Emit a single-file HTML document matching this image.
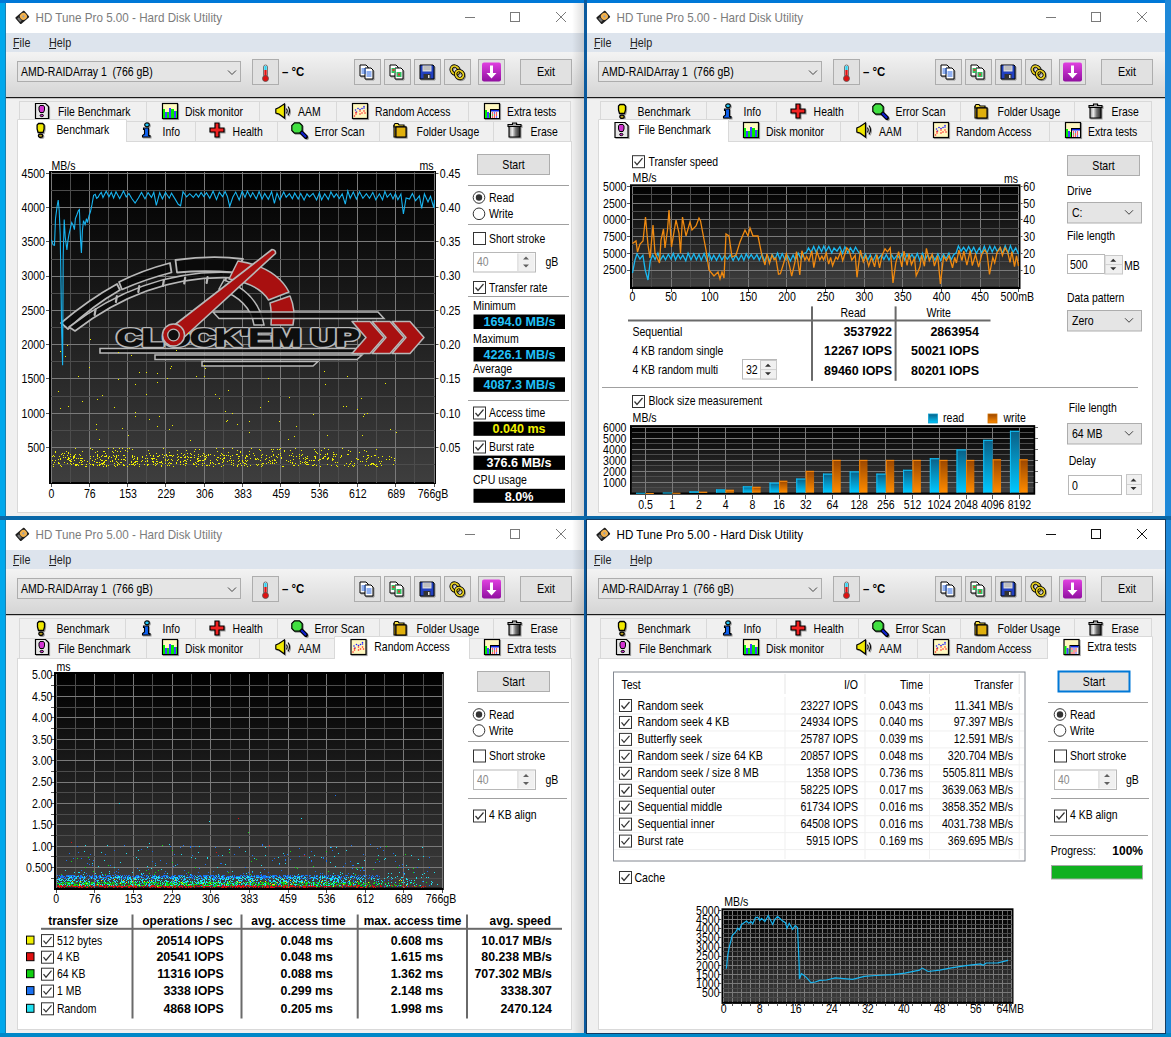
<!DOCTYPE html>
<html><head><meta charset="utf-8"><title>HD Tune Pro</title>
<style>html,body{margin:0;padding:0;background:#0a7cc8;overflow:hidden}svg{display:block}text{font-family:"Liberation Sans",sans-serif}</style>
</head><body>
<svg width="1171" height="1037" viewBox="0 0 1171 1037" font-family="Liberation Sans, sans-serif">
<defs><linearGradient id="tbg" x1="0" y1="0" x2="0" y2="1"><stop offset="0" stop-color="#f3f3f3"/><stop offset="1" stop-color="#d5d5d5"/></linearGradient><linearGradient id="shr" x1="0" x2="1"><stop offset="0" stop-color="#000" stop-opacity="0"/><stop offset="1" stop-color="#000" stop-opacity="0.13"/></linearGradient><filter id="sh" x="-20%" y="-20%" width="150%" height="150%"><feOffset dx="1" dy="1" in="SourceAlpha" result="o"/><feColorMatrix in="o" type="matrix" values="0 0 0 0 0  0 0 0 0 0  0 0 0 0 0  0 0 0 0.35 0" result="c"/><feMerge><feMergeNode in="c"/><feMergeNode in="SourceGraphic"/></feMerge></filter></defs><rect x="0" y="0" width="1171" height="1037" fill="#0a7cc8" /><rect x="0" y="0" width="6" height="1037" fill="#00a8ec" /><rect x="5" y="0" width="1" height="1037" fill="#1a80b0" /><rect x="0" y="0" width="1171" height="3" fill="#0078d7" /><rect x="1165" y="0" width="6" height="1037" fill="#1e88d8" /><rect x="1165" y="519" width="1" height="515" fill="#163e60" /><rect x="584" y="0" width="3" height="1037" fill="#0b5a9e" /><rect x="0" y="516" width="1171" height="4" fill="#0a68a8" /><rect x="0" y="1033" width="1171" height="4" fill="#0088c8" /><g transform="translate(6,3)"><rect x="0" y="0" width="578" height="513" fill="#f0f0f0" /><rect x="0" y="0" width="578" height="30" fill="#fff" /><g transform="translate(9,6.5)"><g transform="rotate(50 7.2 7.8)"><rect x="3" y="2" width="8.6" height="11.6" rx="0.8" fill="#1e1e1e"/><circle cx="7.3" cy="6.3" r="3.5" fill="#f2b04a"/><circle cx="7.3" cy="6.3" r="1.1" fill="#8ea0b8"/><rect x="5" y="10.3" width="4.5" height="2.2" fill="#777"/></g></g><text transform="translate(29.5,19) scale(0.972,1)" font-size="12" fill="#7c7c7c" xml:space="preserve" >HD Tune Pro 5.00 - Hard Disk Utility</text><rect x="459" y="14" width="10" height="1" fill="#7a7a7a" /><rect x="504.5" y="9.5" width="9" height="9" fill="none" stroke="#7a7a7a" stroke-width="1" /><path d="M550,9 L560,19 M560,9 L550,19" stroke="#7a7a7a" stroke-width="1"/><rect x="0" y="30" width="578" height="19" fill="#dde4ed" /><text transform="translate(7,44) scale(0.9,1)" font-size="12" fill="#222" xml:space="preserve" >File</text><rect x="7" y="45" width="6" height="1" fill="#222" /><text transform="translate(43,44) scale(0.9,1)" font-size="12" fill="#222" xml:space="preserve" >Help</text><rect x="43" y="45" width="7" height="1" fill="#222" /><rect x="0" y="49" width="578" height="45" fill="url(#tbg)" /><rect x="0" y="94" width="578" height="1.2" fill="#1a1a1a" /><rect x="11.5" y="58.5" width="223" height="20" fill="#e5e5e5" stroke="#adadad" stroke-width="1" /><text transform="translate(15,72.5) scale(0.876,1)" font-size="12" fill="#000" xml:space="preserve" >AMD-RAIDArray 1  (766 gB)</text><path d="M222,67.5 L226,71.5 L230,67.5" fill="none" stroke="#444" stroke-width="1"/><rect x="246.5" y="56.5" width="26" height="25" fill="#e1e1e1" stroke="#adadad" stroke-width="1" /><g transform="translate(252,61)"><rect x="5.5" y="1" width="4" height="12" rx="2" fill="#fff" stroke="#555" stroke-width="0.8"/><rect x="6.3" y="2" width="2.4" height="4" fill="#30d0f0"/><rect x="6.3" y="6" width="2.4" height="7" fill="#e01010"/><circle cx="7.5" cy="14.5" r="3" fill="#e01010" stroke="#555" stroke-width="0.8"/></g><text transform="translate(276,73) scale(0.95,1)" font-size="12" font-weight="bold" fill="#000" xml:space="preserve" >– °C</text><rect x="348.5" y="56.5" width="26" height="25" fill="#e1e1e1" stroke="#adadad" stroke-width="1" /><g transform="translate(353,61)"><g filter="url(#sh)"><path d="M1,1 H7 L9,3 V12 H1 Z" fill="#fff" stroke="#000" stroke-width="1"/><path d="M6,4 H12 L14,6 V15 H6 Z" fill="#fff" stroke="#000" stroke-width="1"/><path d="M2.5,5 H7 M2.5,7 H7 M2.5,9 H7 M7.5,8 H12.5 M7.5,10 H12.5 M7.5,12 H12.5" stroke="#2060e0" stroke-width="1"/></g></g><rect x="378.5" y="56.5" width="26" height="25" fill="#e1e1e1" stroke="#adadad" stroke-width="1" /><g transform="translate(383,61)"><g filter="url(#sh)"><path d="M1,1 H7 L9,3 V12 H1 Z" fill="#fff" stroke="#000" stroke-width="1"/><path d="M6,4 H12 L14,6 V15 H6 Z" fill="#fff" stroke="#000" stroke-width="1"/><rect x="2.5" y="4" width="4" height="5" fill="#30c060"/><rect x="3.5" y="5" width="2" height="2" fill="#e03030"/><rect x="7.5" y="8" width="5" height="5" fill="#30c060"/><rect x="9" y="9.5" width="2" height="2" fill="#e03030"/></g></g><rect x="408.5" y="56.5" width="26" height="25" fill="#e1e1e1" stroke="#adadad" stroke-width="1" /><g transform="translate(413,61)"><g filter="url(#sh)"><path d="M1,1 H14 L15,2 V15 H1 Z" fill="#2040c0" stroke="#000" stroke-width="1"/><rect x="3.5" y="1.5" width="9" height="6" fill="#d8d8d8"/><path d="M4.5,3 H11.5 M4.5,5 H11.5" stroke="#999" stroke-width="0.8"/><rect x="4.5" y="10" width="7" height="5" fill="#333"/><rect x="9" y="11" width="1.5" height="3" fill="#ddd"/></g></g><rect x="438.5" y="56.5" width="26" height="25" fill="#e1e1e1" stroke="#adadad" stroke-width="1" /><g transform="translate(443,61)"><g filter="url(#sh)"><ellipse cx="6" cy="6" rx="3.6" ry="4.2" transform="rotate(-40 6 6)" fill="none" stroke="#000" stroke-width="3.4"/><ellipse cx="6" cy="6" rx="3.6" ry="4.2" transform="rotate(-40 6 6)" fill="none" stroke="#e8d020" stroke-width="1.8"/><ellipse cx="10.5" cy="10.5" rx="3.6" ry="4.2" transform="rotate(-40 10.5 10.5)" fill="none" stroke="#000" stroke-width="3.4"/><ellipse cx="10.5" cy="10.5" rx="3.6" ry="4.2" transform="rotate(-40 10.5 10.5)" fill="none" stroke="#e8d020" stroke-width="1.8"/></g></g><rect x="472.5" y="56.5" width="26" height="25" fill="#e1e1e1" stroke="#adadad" stroke-width="1" /><g transform="translate(476,59.5)"><defs><linearGradient id="dng" x1="0" y1="0" x2="0" y2="1"><stop offset="0" stop-color="#e040e0"/><stop offset="1" stop-color="#9010a0"/></linearGradient></defs><rect x="0" y="0" width="19" height="19" rx="2" fill="url(#dng)"/><path d="M8,3 H11 V10.5 H14.5 L9.5,16 L4.5,10.5 H8 Z" fill="#fff"/></g><rect x="514.5" y="56.5" width="51" height="25" fill="#e1e1e1" stroke="#adadad" stroke-width="1" /><text transform="translate(540,73) scale(0.9,1)" font-size="12" text-anchor="middle" fill="#000" xml:space="preserve" >Exit</text><rect x="11.5" y="138.5" width="554" height="371" fill="#fff" stroke="#d9d9d9" stroke-width="1" /><rect x="13.5" y="98.5" width="127" height="20" fill="#f0f0f0" stroke="#d9d9d9" stroke-width="1" /><g transform="translate(29,100)"><g filter="url(#sh)"><path d="M0.5,0.5 H10.5 L13.5,3.5 V15.5 H0.5 Z" fill="#e6e6e6" stroke="#000" stroke-width="1.2"/><path d="M5,2.5 H8.5 L9.5,4 V7 L8.5,9.5 H5 L4,7 V4 Z" fill="#d030d0" stroke="#000" stroke-width="1"/><ellipse cx="6.8" cy="12.5" rx="1.7" ry="1.2" fill="#c030c0" stroke="#000" stroke-width="0.9"/></g></g><text transform="translate(52,113) scale(0.87,1)" font-size="12" fill="#000" xml:space="preserve" >File Benchmark</text><rect x="140.5" y="98.5" width="113" height="20" fill="#f0f0f0" stroke="#d9d9d9" stroke-width="1" /><g transform="translate(156,100)"><g filter="url(#sh)"><rect x="0.5" y="0.5" width="15" height="15" fill="#fffbc0" stroke="#000" stroke-width="1.2"/><path d="M1,6 H3 V15 H1 Z M5,9 H7 V15 H5 Z M9,6 H12 V15 H9 Z M14,8 H15 V15 H14Z" fill="#00ee00"/><path d="M3,9 H5 V15 H3 Z M7,5 H9 V15 H7 Z M12,8 H14 V15 H12 Z" fill="#4040ff"/></g></g><text transform="translate(179,113) scale(0.87,1)" font-size="12" fill="#000" xml:space="preserve" >Disk monitor</text><rect x="253.5" y="98.5" width="77" height="20" fill="#f0f0f0" stroke="#d9d9d9" stroke-width="1" /><g transform="translate(269,100)"><g filter="url(#sh)"><path d="M0.8,6 L4,4.5 L9.5,0.8 V15 L4,11 L0.8,10 Z" fill="#f0e800" stroke="#000" stroke-width="1.2"/><path d="M11.5,5.5 Q13,8 11.5,10.5 M13,3.5 Q16,8 13,12.5" fill="none" stroke="#000" stroke-width="1.1"/></g></g><text transform="translate(292,113) scale(0.87,1)" font-size="12" fill="#000" xml:space="preserve" >AAM</text><rect x="330.5" y="98.5" width="132" height="20" fill="#f0f0f0" stroke="#d9d9d9" stroke-width="1" /><g transform="translate(346,100)"><g filter="url(#sh)"><rect x="0.5" y="0.5" width="15" height="15" fill="#fff8c0" stroke="#000" stroke-width="1.2"/><circle cx="3.5" cy="7" r="0.8" fill="#2020ff"/><circle cx="6" cy="5.5" r="0.8" fill="#2020ff"/><circle cx="8" cy="6.5" r="0.8" fill="#2020ff"/><circle cx="10" cy="5.5" r="0.8" fill="#2020ff"/><circle cx="12" cy="3.5" r="0.8" fill="#2020ff"/><circle cx="12" cy="5" r="0.8" fill="#2020ff"/><circle cx="4.5" cy="9" r="0.8" fill="#2020ff"/><circle cx="4" cy="9.5" r="0.8" fill="#ff2020"/><circle cx="4" cy="11" r="0.8" fill="#ff2020"/><circle cx="2.5" cy="13" r="0.8" fill="#ff2020"/><circle cx="8" cy="8" r="0.8" fill="#ff2020"/><circle cx="8" cy="11" r="0.8" fill="#ff2020"/><circle cx="10" cy="10" r="0.8" fill="#ff2020"/><circle cx="12" cy="8" r="0.8" fill="#ff2020"/><circle cx="13" cy="10" r="0.8" fill="#ff2020"/></g></g><text transform="translate(369,113) scale(0.87,1)" font-size="12" fill="#000" xml:space="preserve" >Random Access</text><rect x="462.5" y="98.5" width="102" height="20" fill="#f0f0f0" stroke="#d9d9d9" stroke-width="1" /><g transform="translate(478,100)"><g filter="url(#sh)"><rect x="0.5" y="0.5" width="15" height="15" fill="#fff8c0" stroke="#000" stroke-width="1.2"/><path d="M1,7 H3 V15 H1 Z M5,10 H6 V15 H5 Z" fill="#00ee00"/><path d="M3,9 H5 V15 H3Z" fill="#4040ff"/><rect x="6.5" y="6.5" width="9" height="9" fill="#f4f4f4" stroke="#000" stroke-width="1"/><rect x="7" y="7" width="8" height="1.5" fill="#1020e0"/><circle cx="8.5" cy="10" r="0.7" fill="#f00"/><circle cx="10.5" cy="10" r="0.7" fill="#22f"/><circle cx="12.5" cy="10" r="0.7" fill="#f00"/><circle cx="8.5" cy="12" r="0.7" fill="#0a0"/><circle cx="10.5" cy="12" r="0.7" fill="#f00"/><circle cx="12.5" cy="12" r="0.7" fill="#f00"/><circle cx="8.5" cy="14" r="0.7" fill="#f00"/><circle cx="10.5" cy="14" r="0.7" fill="#f00"/><circle cx="12.5" cy="14" r="0.7" fill="#22f"/></g></g><text transform="translate(501,113) scale(0.87,1)" font-size="12" fill="#000" xml:space="preserve" >Extra tests</text><rect x="119.5" y="118.5" width="70" height="20" fill="#f0f0f0" stroke="#d9d9d9" stroke-width="1" /><g transform="translate(133,119)"><g filter="url(#sh)"><ellipse cx="8" cy="2.8" rx="2.3" ry="1.9" fill="#20c8f8" stroke="#000" stroke-width="1.1"/><path d="M4.5,6 H9.5 V13.5 H11 V15 H3.5 V13.5 L5.5,12 V7.5 H4.5 Z" fill="#1060f0" stroke="#000" stroke-width="1.1"/></g></g><text transform="translate(156.6,133) scale(0.87,1)" font-size="12" fill="#000" xml:space="preserve" >Info</text><rect x="189.5" y="118.5" width="82" height="20" fill="#f0f0f0" stroke="#d9d9d9" stroke-width="1" /><g transform="translate(203,119)"><g filter="url(#sh)"><path d="M6,1 H10 V6 H15 V10 H10 V15 H6 V10 H1 V6 H6 Z" fill="#f02020" stroke="#000" stroke-width="1.2"/></g></g><text transform="translate(226.6,133) scale(0.87,1)" font-size="12" fill="#000" xml:space="preserve" >Health</text><rect x="271.5" y="118.5" width="102" height="20" fill="#f0f0f0" stroke="#d9d9d9" stroke-width="1" /><g transform="translate(285,119)"><g filter="url(#sh)"><path d="M10,10 L15,15" stroke="#000" stroke-width="4" stroke-linecap="round"/><path d="M10,10 L14.5,14.5" stroke="#1020d0" stroke-width="2" stroke-linecap="round"/><path d="M3.5,0.8 H8.5 L11.2,3.5 V8.5 L8.5,11.2 H3.5 L0.8,8.5 V3.5 Z" fill="#40e040" stroke="#000" stroke-width="1.2"/></g></g><text transform="translate(308.6,133) scale(0.87,1)" font-size="12" fill="#000" xml:space="preserve" >Error Scan</text><rect x="373.5" y="118.5" width="114" height="20" fill="#f0f0f0" stroke="#d9d9d9" stroke-width="1" /><g transform="translate(387,119)"><g filter="url(#sh)"><path d="M1,3 L2,1.5 H5 L6,3 H11 V5 H1 Z" fill="#f8e040" stroke="#000" stroke-width="1.1"/><path d="M1,3 V15 H3 V5 H13 V15 H3" fill="#e8b800" stroke="#000" stroke-width="1.1"/><rect x="3" y="5" width="10" height="10" fill="#e0b010" stroke="#000" stroke-width="1.1"/></g></g><text transform="translate(410.6,133) scale(0.87,1)" font-size="12" fill="#000" xml:space="preserve" >Folder Usage</text><rect x="487.5" y="118.5" width="77" height="20" fill="#f0f0f0" stroke="#d9d9d9" stroke-width="1" /><g transform="translate(501,119)"><defs><linearGradient id="trg" x1="0" x2="1"><stop offset="0" stop-color="#888"/><stop offset="0.3" stop-color="#eee"/><stop offset="0.6" stop-color="#777"/><stop offset="1" stop-color="#222"/></linearGradient></defs><g filter="url(#sh)"><path d="M1,2.5 H5.5 V1 H9.5 V2.5 H14 V4.5 H1 Z" fill="#aaa" stroke="#000" stroke-width="1.1"/><path d="M2,4.5 H13 V15 H2 Z" fill="url(#trg)" stroke="#000" stroke-width="1.1"/></g></g><text transform="translate(524.6,133) scale(0.87,1)" font-size="12" fill="#000" xml:space="preserve" >Erase</text><rect x="11" y="116" width="110" height="23" fill="#fff" /><path d="M11.5,139 V116.5 H120.5 V139" fill="none" stroke="#d9d9d9" stroke-width="1"/><g transform="translate(26.6,119)"><g filter="url(#sh)"><path d="M6,1.5 H10 L11.5,3 V7 L10.5,10.5 H5.5 L4.5,7 V3 Z" fill="#f0e800" stroke="#000" stroke-width="1.3"/><ellipse cx="8" cy="13.8" rx="2.2" ry="1.6" fill="#b8a020" stroke="#000" stroke-width="1.2"/></g></g><text transform="translate(50.4,131) scale(0.87,1)" font-size="12" fill="#000" xml:space="preserve" >Benchmark</text><defs><linearGradient id="cbg" x1="0" y1="0" x2="0" y2="1"><stop offset="0" stop-color="#000"/><stop offset="1" stop-color="#3e3e3e"/></linearGradient></defs><rect x="43" y="168" width="387" height="313" fill="#000" /><rect x="45" y="170" width="384" height="309" fill="url(#cbg)" /><rect x="45" y="169" width="1" height="311" fill="#7a7a7a"/><rect x="64" y="169" width="1" height="311" fill="#4c4c4c"/><rect x="83" y="169" width="1" height="311" fill="#7a7a7a"/><rect x="102" y="169" width="1" height="311" fill="#4c4c4c"/><rect x="121" y="169" width="1" height="311" fill="#7a7a7a"/><rect x="140" y="169" width="1" height="311" fill="#4c4c4c"/><rect x="159" y="169" width="1" height="311" fill="#7a7a7a"/><rect x="179" y="169" width="1" height="311" fill="#4c4c4c"/><rect x="198" y="169" width="1" height="311" fill="#7a7a7a"/><rect x="217" y="169" width="1" height="311" fill="#4c4c4c"/><rect x="236" y="169" width="1" height="311" fill="#7a7a7a"/><rect x="255" y="169" width="1" height="311" fill="#4c4c4c"/><rect x="274" y="169" width="1" height="311" fill="#7a7a7a"/><rect x="293" y="169" width="1" height="311" fill="#4c4c4c"/><rect x="313" y="169" width="1" height="311" fill="#7a7a7a"/><rect x="332" y="169" width="1" height="311" fill="#4c4c4c"/><rect x="351" y="169" width="1" height="311" fill="#7a7a7a"/><rect x="370" y="169" width="1" height="311" fill="#4c4c4c"/><rect x="389" y="169" width="1" height="311" fill="#7a7a7a"/><rect x="408" y="169" width="1" height="311" fill="#4c4c4c"/><rect x="428" y="169" width="1" height="311" fill="#7a7a7a"/><rect x="45" y="170" width="384" height="1" fill="#7a7a7a"/><rect x="45" y="187" width="384" height="1" fill="#4c4c4c"/><rect x="45" y="204" width="384" height="1" fill="#7a7a7a"/><rect x="45" y="221" width="384" height="1" fill="#4c4c4c"/><rect x="45" y="238" width="384" height="1" fill="#7a7a7a"/><rect x="45" y="256" width="384" height="1" fill="#4c4c4c"/><rect x="45" y="273" width="384" height="1" fill="#7a7a7a"/><rect x="45" y="290" width="384" height="1" fill="#4c4c4c"/><rect x="45" y="307" width="384" height="1" fill="#7a7a7a"/><rect x="45" y="324" width="384" height="1" fill="#4c4c4c"/><rect x="45" y="341" width="384" height="1" fill="#7a7a7a"/><rect x="45" y="358" width="384" height="1" fill="#4c4c4c"/><rect x="45" y="375" width="384" height="1" fill="#7a7a7a"/><rect x="45" y="393" width="384" height="1" fill="#4c4c4c"/><rect x="45" y="410" width="384" height="1" fill="#7a7a7a"/><rect x="45" y="427" width="384" height="1" fill="#4c4c4c"/><rect x="45" y="444" width="384" height="1" fill="#7a7a7a"/><rect x="45" y="461" width="384" height="1" fill="#4c4c4c"/><g transform="translate(-6,-3)"><g><path d="M61,323 Q88,300 117,284 L120,290 Q92,306 68,329 Z" fill="rgba(8,8,8,0.82)" stroke="#b8b8b8" stroke-width="1.8" stroke-linejoin="round"/><path d="M119,282 Q143,270 170,263 L171.5,272.5 Q146,279 122,289.5 Z" fill="rgba(8,8,8,0.82)" stroke="#b8b8b8" stroke-width="1.8" stroke-linejoin="round"/><path d="M175.5,260 Q212,255 243,259 L234,272.5 Q205,270 177,272.5 Z" fill="rgba(8,8,8,0.82)" stroke="#b8b8b8" stroke-width="1.8" stroke-linejoin="round"/><path d="M69,327 Q150,266 239,273 L237,278 Q150,273 75,331 Z" fill="rgba(8,8,8,0.82)" stroke="#b8b8b8" stroke-width="1.6" stroke-linejoin="round"/><path d="M95.6,309 l-1,6" stroke="#b8b8b8" stroke-width="2.2" stroke-linecap="round"/><path d="M116.9,296 l-1,6" stroke="#b8b8b8" stroke-width="2.2" stroke-linecap="round"/><path d="M139.3,286 l-1,6" stroke="#b8b8b8" stroke-width="2.2" stroke-linecap="round"/><path d="M163.9,280 l-1,6" stroke="#b8b8b8" stroke-width="2.2" stroke-linecap="round"/><path d="M185.2,277.5 l-1,6" stroke="#b8b8b8" stroke-width="2.2" stroke-linecap="round"/><path d="M207.6,277 l-1,6" stroke="#b8b8b8" stroke-width="2.2" stroke-linecap="round"/><path d="M225.8,278 l-1,6" stroke="#b8b8b8" stroke-width="2.2" stroke-linecap="round"/><path d="M224,280 Q258,292 264,325 L254,325 Q250,300 219,289 Z" fill="rgba(8,8,8,0.82)" stroke="#b8b8b8" stroke-width="1.5"/><path d="M238,261 Q276,267 289,292 L268.5,300 Q259,284 229,279 Z" fill="#a81010" stroke="#b8b8b8" stroke-width="1.5" stroke-linejoin="round"/><path d="M270,303 L290,296 Q296,310 293,325 L271,325 Q272,313 270,303 Z" fill="#a81010" stroke="#b8b8b8" stroke-width="1.5" stroke-linejoin="round"/><path d="M213,312 H378 L384,318.5 H219 Z" fill="rgba(8,8,8,0.82)" stroke="#b8b8b8" stroke-width="1.5"/><text x="117" y="345.6" font-size="24" font-weight="bold" fill="#0e0e0e" stroke="#b8b8b8" stroke-width="4.2" stroke-linejoin="round" textLength="242" lengthAdjust="spacingAndGlyphs">CLOCK'EM UP</text><text x="117" y="345.6" font-size="24" font-weight="bold" fill="#0e0e0e" stroke="#0e0e0e" stroke-width="1.6" textLength="242" lengthAdjust="spacingAndGlyphs">CLOCK'EM UP</text><path d="M168,330 L272,249.5 Q276,250 275.5,253.5 L180,341 Z" fill="#a81010" stroke="#b8b8b8" stroke-width="1.6" stroke-linejoin="round"/><circle cx="173.5" cy="335" r="11" fill="#a81010" stroke="#b8b8b8" stroke-width="1.5"/><circle cx="173.5" cy="335" r="5.8" fill="#0e0e0e" stroke="#b8b8b8" stroke-width="1.3"/><path d="M100,348.5 H366 L361,353 H100 Z" fill="rgba(8,8,8,0.82)" stroke="#b8b8b8" stroke-width="1.6"/><path d="M155,355 H362 L357,359.5 H155 Z" fill="rgba(8,8,8,0.82)" stroke="#b8b8b8" stroke-width="1.5"/><path d="M202,361.5 H318 L313,366 H202 Z" fill="rgba(8,8,8,0.82)" stroke="#b8b8b8" stroke-width="1.5"/><path d="M352,321.5 H370 L384,337.5 L370,353.5 H352 L366,337.5 Z" fill="#a81010" stroke="#b8b8b8" stroke-width="1.5" stroke-linejoin="round"/><path d="M372,321.5 H390 L404,337.5 L390,353.5 H372 L386,337.5 Z" fill="#a81010" stroke="#b8b8b8" stroke-width="1.5" stroke-linejoin="round"/><path d="M392,321.5 H410 L424,337.5 L410,353.5 H392 L406,337.5 Z" fill="#a81010" stroke="#b8b8b8" stroke-width="1.5" stroke-linejoin="round"/></g></g><rect x="40" y="170" width="3" height="1" fill="#555" /><rect x="430" y="170" width="2.5" height="1" fill="#555" /><rect x="40" y="204" width="3" height="1" fill="#555" /><rect x="430" y="204" width="2.5" height="1" fill="#555" /><rect x="40" y="238" width="3" height="1" fill="#555" /><rect x="430" y="238" width="2.5" height="1" fill="#555" /><rect x="40" y="273" width="3" height="1" fill="#555" /><rect x="430" y="273" width="2.5" height="1" fill="#555" /><rect x="40" y="307" width="3" height="1" fill="#555" /><rect x="430" y="307" width="2.5" height="1" fill="#555" /><rect x="40" y="341" width="3" height="1" fill="#555" /><rect x="430" y="341" width="2.5" height="1" fill="#555" /><rect x="40" y="375" width="3" height="1" fill="#555" /><rect x="430" y="375" width="2.5" height="1" fill="#555" /><rect x="40" y="410" width="3" height="1" fill="#555" /><rect x="430" y="410" width="2.5" height="1" fill="#555" /><rect x="40" y="444" width="3" height="1" fill="#555" /><rect x="430" y="444" width="2.5" height="1" fill="#555" /><rect x="45" y="481" width="1" height="3" fill="#555" /><rect x="83" y="481" width="1" height="3" fill="#555" /><rect x="121" y="481" width="1" height="3" fill="#555" /><rect x="159" y="481" width="1" height="3" fill="#555" /><rect x="198" y="481" width="1" height="3" fill="#555" /><rect x="236" y="481" width="1" height="3" fill="#555" /><rect x="274" y="481" width="1" height="3" fill="#555" /><rect x="313" y="481" width="1" height="3" fill="#555" /><rect x="351" y="481" width="1" height="3" fill="#555" /><rect x="389" y="481" width="1" height="3" fill="#555" /><rect x="428" y="481" width="1" height="3" fill="#555" /><text transform="translate(39,174.7) scale(0.88,1)" font-size="12" text-anchor="end" fill="#000" xml:space="preserve" >4500</text><text transform="translate(433.8,174.7) scale(0.88,1)" font-size="12" fill="#000" xml:space="preserve" >0.45</text><text transform="translate(39,208.96) scale(0.88,1)" font-size="12" text-anchor="end" fill="#000" xml:space="preserve" >4000</text><text transform="translate(433.8,208.96) scale(0.88,1)" font-size="12" fill="#000" xml:space="preserve" >0.40</text><text transform="translate(39,243.22) scale(0.88,1)" font-size="12" text-anchor="end" fill="#000" xml:space="preserve" >3500</text><text transform="translate(433.8,243.22) scale(0.88,1)" font-size="12" fill="#000" xml:space="preserve" >0.35</text><text transform="translate(39,277.48) scale(0.88,1)" font-size="12" text-anchor="end" fill="#000" xml:space="preserve" >3000</text><text transform="translate(433.8,277.48) scale(0.88,1)" font-size="12" fill="#000" xml:space="preserve" >0.30</text><text transform="translate(39,311.74) scale(0.88,1)" font-size="12" text-anchor="end" fill="#000" xml:space="preserve" >2500</text><text transform="translate(433.8,311.74) scale(0.88,1)" font-size="12" fill="#000" xml:space="preserve" >0.25</text><text transform="translate(39,346.0) scale(0.88,1)" font-size="12" text-anchor="end" fill="#000" xml:space="preserve" >2000</text><text transform="translate(433.8,346.0) scale(0.88,1)" font-size="12" fill="#000" xml:space="preserve" >0.20</text><text transform="translate(39,380.26) scale(0.88,1)" font-size="12" text-anchor="end" fill="#000" xml:space="preserve" >1500</text><text transform="translate(433.8,380.26) scale(0.88,1)" font-size="12" fill="#000" xml:space="preserve" >0.15</text><text transform="translate(39,414.52) scale(0.88,1)" font-size="12" text-anchor="end" fill="#000" xml:space="preserve" >1000</text><text transform="translate(433.8,414.52) scale(0.88,1)" font-size="12" fill="#000" xml:space="preserve" >0.10</text><text transform="translate(39,448.78) scale(0.88,1)" font-size="12" text-anchor="end" fill="#000" xml:space="preserve" >500</text><text transform="translate(433.8,448.78) scale(0.88,1)" font-size="12" fill="#000" xml:space="preserve" >0.05</text><text transform="translate(45.5,495.2) scale(0.88,1)" font-size="12" text-anchor="middle" fill="#000" xml:space="preserve" >0</text><text transform="translate(83.8,495.2) scale(0.88,1)" font-size="12" text-anchor="middle" fill="#000" xml:space="preserve" >76</text><text transform="translate(122.1,495.2) scale(0.88,1)" font-size="12" text-anchor="middle" fill="#000" xml:space="preserve" >153</text><text transform="translate(160.4,495.2) scale(0.88,1)" font-size="12" text-anchor="middle" fill="#000" xml:space="preserve" >229</text><text transform="translate(198.7,495.2) scale(0.88,1)" font-size="12" text-anchor="middle" fill="#000" xml:space="preserve" >306</text><text transform="translate(237.0,495.2) scale(0.88,1)" font-size="12" text-anchor="middle" fill="#000" xml:space="preserve" >383</text><text transform="translate(275.3,495.2) scale(0.88,1)" font-size="12" text-anchor="middle" fill="#000" xml:space="preserve" >459</text><text transform="translate(313.6,495.2) scale(0.88,1)" font-size="12" text-anchor="middle" fill="#000" xml:space="preserve" >536</text><text transform="translate(351.9,495.2) scale(0.88,1)" font-size="12" text-anchor="middle" fill="#000" xml:space="preserve" >612</text><text transform="translate(390.2,495.2) scale(0.88,1)" font-size="12" text-anchor="middle" fill="#000" xml:space="preserve" >689</text><text transform="translate(427.0,495.2) scale(0.88,1)" font-size="12" text-anchor="middle" fill="#000" xml:space="preserve" >766gB</text><text transform="translate(45.5,166.5) scale(0.88,1)" font-size="12" fill="#000" xml:space="preserve" >MB/s</text><text transform="translate(427.5,166.5) scale(0.88,1)" font-size="12" text-anchor="end" fill="#000" xml:space="preserve" >ms</text><path d="M45.5,236.8 L47.1,241.9 L48.5,242.3 L49.5,215.6 L51.1,203.4 L52.2,197.0 L53.2,207.5 L54.2,231.8 L54.8,268.2 L55.6,324.9 L56.6,362.3 L57.2,254.0 L58.2,216.6 L59.2,233.8 L60.9,247.0 L61.9,237.9 L62.9,231.8 L64.3,225.7 L65.7,219.6 L67.3,222.7 L68.4,226.7 L69.4,215.6 L71.0,211.5 L72.4,207.5 L73.4,206.5 L74.6,237.9 L75.4,250.0 L76.4,227.7 L77.5,217.6 L79.1,221.7 L80.5,215.6 L81.5,219.6 L83.1,212.5 L84.5,208.5 L86.0,201.4 L87.6,192.3 L89.2,191.3 L90.6,195.3 L92.0,194.3 L93.7,191.3 L95.3,189.3 L97.0,194.6 L100.2,188.2 L103.0,193.7 L105.3,189.3 L107.6,195.0 L110.0,188.7 L113.7,195.5 L117.5,188.1 L120.2,194.0 L122.9,190.4 L126.0,195.7 L129.1,200.0 L132.4,195.0 L135.5,189.4 L139.0,195.9 L142.1,189.6 L145.5,194.5 L147.8,189.3 L150.3,202.3 L153.7,189.7 L156.4,195.9 L159.5,189.4 L163.3,195.2 L165.5,190.1 L169.3,196.4 L172.2,201.3 L174.6,202.8 L177.0,188.7 L180.6,193.8 L183.7,190.7 L187.3,194.5 L190.1,190.7 L192.5,194.1 L195.1,189.5 L197.7,193.5 L200.5,189.7 L203.8,195.3 L207.1,188.2 L210.5,196.6 L213.3,189.2 L216.6,193.7 L219.1,188.5 L221.4,193.5 L223.7,203.4 L226.9,194.0 L229.7,189.1 L233.2,197.0 L236.2,188.3 L239.0,194.4 L241.4,188.1 L244.5,194.0 L246.7,189.6 L250.3,195.9 L253.1,188.5 L256.1,196.2 L258.7,190.4 L262.3,196.3 L265.6,188.7 L268.4,200.4 L271.0,190.1 L273.9,196.8 L277.7,189.1 L280.2,194.2 L283.4,190.7 L286.4,195.8 L288.7,190.0 L292.2,196.1 L294.7,190.4 L298.1,196.9 L301.0,190.8 L303.5,193.9 L307.1,190.4 L310.6,196.9 L313.4,189.6 L315.6,196.9 L318.7,190.8 L322.3,196.4 L324.9,188.9 L328.0,194.4 L330.4,190.7 L333.3,195.5 L336.2,190.8 L339.3,201.2 L341.8,188.0 L344.2,195.2 L347.3,189.0 L350.4,196.2 L353.5,188.7 L356.9,195.3 L360.4,190.7 L363.5,195.3 L366.8,189.4 L369.8,196.8 L373.4,190.8 L376.5,196.8 L378.9,188.4 L381.2,194.3 L384.5,190.4 L387.0,196.0 L389.4,190.6 L391.9,196.8 L394.9,191.0 L397.4,211.0 L400.1,195.0 L403.5,196.1 L406.4,190.6 L409.6,197.8 L413.4,192.9 L415.7,205.4 L418.4,190.9 L422.0,198.9 L424.5,193.3 L427.8,204.9 L428.5,197.0" fill="none" stroke="#18b4f0" stroke-width="1.1"/><path d="M109 455.5h1M218 452.5h1M49 449.5h1M108 453.5h1M301 459.5h1M86 461.5h1M192 457.5h1M63 455.5h1M127 461.5h1M177 461.5h1M255 452.5h1M287 462.5h1M319 453.5h1M103 453.5h1M225 457.5h1M151 458.5h1M211 457.5h1M342 463.5h1M240 461.5h1M361 455.5h1M255 461.5h1M208 452.5h1M308 446.5h1M287 453.5h1M125 461.5h1M57 452.5h1M256 462.5h1M371 463.5h1M129 458.5h1M54 456.5h1M220 452.5h1M314 463.5h1M326 457.5h1M191 458.5h1M203 462.5h1M187 460.5h1M109 463.5h1M192 451.5h1M160 451.5h1M222 452.5h1M225 459.5h1M141 458.5h1M52 459.5h1M360 456.5h1M214 455.5h1M130 458.5h1M127 460.5h1M53 460.5h1M129 461.5h1M109 456.5h1M249 455.5h1M136 453.5h1M309 455.5h1M233 453.5h1M106 457.5h1M96 460.5h1M94 461.5h1M230 451.5h1M80 461.5h1M118 456.5h1M161 462.5h1M87 462.5h1M319 453.5h1M353 449.5h1M266 457.5h1M191 455.5h1M106 458.5h1M123 445.5h1M330 462.5h1M326 455.5h1M49 448.5h1M126 454.5h1M159 456.5h1M138 461.5h1M178 451.5h1M98 461.5h1M91 462.5h1M289 445.5h1M226 445.5h1M119 457.5h1M162 460.5h1M46 453.5h1M79 463.5h1M308 457.5h1M131 455.5h1M232 455.5h1M96 452.5h1M202 452.5h1M67 455.5h1M218 452.5h1M287 456.5h1M147 459.5h1M161 453.5h1M111 459.5h1M65 456.5h1M319 451.5h1M327 449.5h1M174 461.5h1M237 459.5h1M239 455.5h1M73 451.5h1M84 445.5h1M70 462.5h1M93 461.5h1M78 457.5h1M301 455.5h1M286 460.5h1M189 446.5h1M267 446.5h1M133 461.5h1M110 454.5h1M222 452.5h1M146 455.5h1M161 457.5h1M366 460.5h1M88 458.5h1M241 457.5h1M231 447.5h1M71 461.5h1M190 460.5h1M95 453.5h1M212 454.5h1M247 450.5h1M252 461.5h1M212 454.5h1M52 456.5h1M91 455.5h1M277 463.5h1M179 457.5h1M300 455.5h1M179 460.5h1M155 462.5h1M175 454.5h1M256 462.5h1M308 453.5h1M115 459.5h1M310 449.5h1M313 456.5h1M260 452.5h1M300 455.5h1M210 445.5h1M136 457.5h1M102 462.5h1M153 452.5h1M119 447.5h1M322 446.5h1M348 460.5h1M270 459.5h1M234 449.5h1M269 457.5h1M196 457.5h1M141 457.5h1M206 459.5h1M227 462.5h1M235 462.5h1M83 460.5h1M216 459.5h1M172 453.5h1M64 458.5h1M198 451.5h1M117 461.5h1M57 454.5h1M275 455.5h1M156 460.5h1M142 447.5h1M118 452.5h1M278 448.5h1M96 460.5h1M293 455.5h1M84 453.5h1M194 453.5h1M113 445.5h1M288 462.5h1M150 458.5h1M227 457.5h1M126 453.5h1M217 445.5h1M275 454.5h1M192 453.5h1M194 457.5h1M232 458.5h1M358 447.5h1M283 452.5h1M144 452.5h1M197 450.5h1M315 447.5h1M310 462.5h1M256 451.5h1M289 460.5h1M166 453.5h1M74 452.5h1M99 457.5h1M250 456.5h1M233 457.5h1M270 453.5h1M328 451.5h1M147 458.5h1M105 454.5h1M280 457.5h1M98 453.5h1M156 451.5h1M75 457.5h1M61 456.5h1M157 445.5h1M156 451.5h1M362 452.5h1M177 458.5h1M140 452.5h1M260 460.5h1M175 450.5h1M113 461.5h1M226 452.5h1M244 455.5h1M47 452.5h1M91 452.5h1M234 448.5h1M367 461.5h1M336 445.5h1M128 462.5h1M69 461.5h1M76 455.5h1M243 448.5h1M264 460.5h1M202 451.5h1M159 460.5h1M179 453.5h1M257 460.5h1M151 453.5h1M254 457.5h1M271 446.5h1M109 456.5h1M318 453.5h1M327 451.5h1M146 456.5h1M356 458.5h1M75 459.5h1M110 453.5h1M231 451.5h1M107 449.5h1M204 460.5h1M218 454.5h1M96 452.5h1M296 451.5h1M362 462.5h1M68 454.5h1M298 459.5h1M272 451.5h1M217 452.5h1M300 461.5h1M100 457.5h1M260 455.5h1M180 458.5h1M262 459.5h1M218 455.5h1M383 456.5h1M68 453.5h1M343 461.5h1M375 462.5h1M196 462.5h1M329 453.5h1M276 463.5h1M338 462.5h1M95 460.5h1M125 459.5h1M56 450.5h1M165 460.5h1M267 452.5h1M126 452.5h1M86 457.5h1M368 461.5h1M147 455.5h1M174 458.5h1M143 450.5h1M174 459.5h1M126 461.5h1M49 457.5h1M196 452.5h1M100 453.5h1M370 463.5h1M55 451.5h1M165 452.5h1M199 455.5h1M112 452.5h1M115 456.5h1M225 461.5h1M290 453.5h1M271 454.5h1M299 454.5h1M90 459.5h1M327 453.5h1M238 460.5h1M217 457.5h1M91 459.5h1M380 456.5h1M141 461.5h1M171 447.5h1M131 456.5h1M307 462.5h1M221 458.5h1M200 454.5h1M253 446.5h1M239 457.5h1M326 456.5h1M98 448.5h1M150 450.5h1M118 462.5h1M131 454.5h1M80 463.5h1M67 453.5h1M67 460.5h1M302 461.5h1M47 463.5h1M64 457.5h1M118 452.5h1M109 447.5h1M331 463.5h1M241 453.5h1M60 448.5h1M96 461.5h1M59 454.5h1M150 456.5h1M376 453.5h1M84 455.5h1M335 453.5h1M347 463.5h1M111 462.5h1M181 450.5h1M52 460.5h1M280 457.5h1M197 457.5h1M299 458.5h1M344 448.5h1M360 448.5h1M117 452.5h1M370 461.5h1M76 461.5h1M284 457.5h1M193 446.5h1M198 453.5h1M217 457.5h1M147 455.5h1M217 462.5h1M311 450.5h1M369 452.5h1M185 451.5h1M231 463.5h1M171 457.5h1M317 454.5h1M167 452.5h1M163 459.5h1M61 452.5h1M372 454.5h1M200 452.5h1M314 451.5h1M127 456.5h1M147 461.5h1M211 454.5h1M147 453.5h1M67 454.5h1M54 462.5h1M196 460.5h1M301 453.5h1M244 462.5h1M149 462.5h1M123 461.5h1M216 451.5h1M141 461.5h1M94 456.5h1M189 459.5h1M236 452.5h1M370 446.5h1M167 463.5h1M63 457.5h1M162 460.5h1M135 458.5h1M321 456.5h1M69 451.5h1M345 458.5h1M68 457.5h1M309 454.5h1M372 454.5h1M100 462.5h1M81 458.5h1M142 461.5h1M309 448.5h1M62 455.5h1M97 448.5h1M295 447.5h1M334 454.5h1M95 457.5h1M151 460.5h1M61 456.5h1M93 454.5h1M248 452.5h1M104 458.5h1M111 448.5h1M240 453.5h1M268 457.5h1M216 456.5h1M61 460.5h1M182 454.5h1M327 449.5h1M293 451.5h1M383 453.5h1M256 460.5h1M211 457.5h1M307 457.5h1M312 457.5h1M211 448.5h1M70 455.5h1M127 461.5h1M198 460.5h1M267 451.5h1M243 451.5h1M179 454.5h1M249 456.5h1M75 455.5h1M259 456.5h1M98 458.5h1M74 457.5h1M99 453.5h1M72 462.5h1M314 456.5h1M63 455.5h1M348 462.5h1M178 454.5h1M360 458.5h1M188 454.5h1M375 458.5h1M329 459.5h1M268 456.5h1M367 460.5h1M89 449.5h1M188 461.5h1M266 459.5h1M163 449.5h1M199 456.5h1M58 459.5h1M102 454.5h1M354 458.5h1M147 458.5h1M266 448.5h1M88 458.5h1M180 447.5h1M199 456.5h1M88 458.5h1M321 451.5h1M68 452.5h1M172 456.5h1M116 445.5h1M121 448.5h1M54 455.5h1M365 461.5h1M152 453.5h1M239 454.5h1M171 451.5h1M107 452.5h1M131 458.5h1M216 451.5h1M53 453.5h1M207 460.5h1M217 458.5h1M192 455.5h1M62 454.5h1M72 455.5h1M224 453.5h1M388 455.5h1M388 457.5h1M179 462.5h1M159 457.5h1M47 461.5h1M331 459.5h1M128 455.5h1M128 459.5h1M69 445.5h1M361 452.5h1M266 460.5h1M188 452.5h1M241 463.5h1M48 459.5h1M340 460.5h1M204 457.5h1M217 455.5h1M263 457.5h1M114 459.5h1M265 453.5h1M100 452.5h1M110 458.5h1M110 452.5h1M93 454.5h1M321 455.5h1M164 460.5h1M268 460.5h1M119 454.5h1M98 459.5h1M260 460.5h1M178 457.5h1M165 456.5h1M232 461.5h1M97 459.5h1M254 447.5h1M278 447.5h1M215 450.5h1M309 453.5h1M84 461.5h1M162 456.5h1M341 451.5h1M352 456.5h1M368 452.5h1M322 454.5h1M346 462.5h1M136 454.5h1M198 456.5h1M187 461.5h1M344 460.5h1M64 453.5h1M87 461.5h1M335 452.5h1M163 462.5h1M117 462.5h1M99 450.5h1M238 462.5h1M155 459.5h1M214 452.5h1M209 461.5h1M139 455.5h1M76 458.5h1M157 454.5h1M181 453.5h1M274 452.5h1M91 453.5h1M150 461.5h1M148 455.5h1M49 457.5h1M184 457.5h1M255 463.5h1M76 448.5h1M285 452.5h1M198 460.5h1M318 445.5h1M149 460.5h1M170 459.5h1M387 461.5h1M200 462.5h1M70 461.5h1M121 445.5h1M102 445.5h1M188 448.5h1M252 456.5h1M274 445.5h1M97 463.5h1M103 453.5h1M305 457.5h1M239 460.5h1M286 450.5h1M108 462.5h1M166 457.5h1M249 455.5h1M274 450.5h1M65 458.5h1M215 463.5h1M164 452.5h1M141 455.5h1M351 456.5h1M236 458.5h1M184 457.5h1M299 460.5h1M126 446.5h1M180 460.5h1M100 453.5h1M204 451.5h1M93 462.5h1M171 454.5h1M236 457.5h1M46 457.5h1M58 450.5h1M125 458.5h1M184 454.5h1M139 458.5h1M145 455.5h1M48 453.5h1M70 455.5h1M109 456.5h1M62 449.5h1M385 454.5h1M112 460.5h1M210 456.5h1M251 462.5h1M303 457.5h1M222 449.5h1M128 453.5h1M286 460.5h1M154 459.5h1M245 445.5h1M117 456.5h1M240 458.5h1M342 451.5h1M187 460.5h1M146 458.5h1M107 445.5h1M232 453.5h1M207 463.5h1M321 461.5h1M321 461.5h1M300 459.5h1M153 459.5h1M102 455.5h1M297 455.5h1M330 451.5h1M204 459.5h1M190 463.5h1M321 450.5h1M97 460.5h1M234 460.5h1M192 458.5h1M170 460.5h1M373 458.5h1M350 455.5h1M308 461.5h1M224 455.5h1M223 457.5h1M115 459.5h1M177 452.5h1M192 461.5h1M273 446.5h1M294 458.5h1M181 456.5h1M322 455.5h1M292 462.5h1M155 463.5h1M64 460.5h1M76 461.5h1M213 460.5h1M296 459.5h1M133 463.5h1M365 453.5h1M106 448.5h1M91 448.5h1M369 462.5h1M294 460.5h1M160 452.5h1M251 455.5h1M299 456.5h1M69 462.5h1M185 454.5h1M231 462.5h1M62 456.5h1M295 452.5h1M91 451.5h1M75 461.5h1M309 455.5h1M317 455.5h1M163 452.5h1M112 452.5h1M365 460.5h1M325 462.5h1M357 453.5h1M286 459.5h1M158 452.5h1M108 460.5h1M69 445.5h1M364 461.5h1M293 453.5h1M250 461.5h1M74 455.5h1M62 450.5h1M64 451.5h1M121 463.5h1M227 460.5h1M255 454.5h1M87 453.5h1M264 458.5h1M199 453.5h1M114 448.5h1M240 452.5h1M359 462.5h1M193 457.5h1M98 458.5h1M174 461.5h1M284 447.5h1M251 462.5h1M47 463.5h1M147 455.5h1M155 458.5h1M374 460.5h1M127 456.5h1M265 446.5h1M362 454.5h1M174 454.5h1M301 461.5h1M89 456.5h1M184 450.5h1M263 454.5h1M282 458.5h1M96 457.5h1M191 456.5h1M342 447.5h1M47 452.5h1M73 459.5h1M93 459.5h1M141 462.5h1M284 459.5h1M129 459.5h1M212 460.5h1M100 463.5h1M55 463.5h1M67 455.5h1M64 451.5h1M306 462.5h1M327 456.5h1M86 446.5h1M65 461.5h1M112 456.5h1M201 462.5h1M138 461.5h1M111 461.5h1M131 460.5h1M147 452.5h1M316 455.5h1M93 461.5h1M91 396.5h1M262 398.5h1M219 408.5h1M112 376.5h1M355 395.5h1M133 369.5h1M116 425.5h1M262 375.5h1M243 429.5h1M384 426.5h1M165 363.5h1M319 381.5h1M72 373.5h1M184 437.5h1M318 368.5h1M62 403.5h1M357 413.5h1M151 379.5h1M198 362.5h1M341 373.5h1M290 423.5h1M283 394.5h1M213 395.5h1M151 423.5h1M361 410.5h1M83 364.5h1M222 387.5h1M163 426.5h1M161 375.5h1M140 369.5h1M151 370.5h1M108 404.5h1M90 426.5h1M226 410.5h1M231 421.5h1M153 413.5h1M356 432.5h1M190 373.5h1M243 418.5h1M390 429.5h1M93 436.5h1M198 373.5h1M143 416.5h1M321 432.5h1M52 388.5h1M76 398.5h1M96 392.5h1M340 403.5h1M140 391.5h1M288 433.5h1M129 409.5h1M221 417.5h1M273 418.5h1M358 411.5h1M122 432.5h1M90 421.5h1M351 406.5h1M199 365.5h1M379 380.5h1M129 413.5h1M220 418.5h1M166 422.5h1M129 381.5h1M254 404.5h1M209 391.5h1M282 436.5h1M337 403.5h1M164 365.5h1M307 411.5h1M54 405.5h1M112 349.5h1M61 342.5h1M84 336.5h1M125 352.5h1M170 347.5h1M59 353.5h1M54 348.5h1M182 330.5h1" stroke="#f0f000" stroke-width="1"/><rect x="471.5" y="151.5" width="72" height="20" fill="#e1e1e1" stroke="#adadad" stroke-width="1" /><text transform="translate(507.5,165.5) scale(0.88,1)" font-size="12" text-anchor="middle" fill="#000" xml:space="preserve" >Start</text><rect x="462" y="182" width="101" height="1" fill="#a0a0a0" /><circle cx="473" cy="194.5" r="5.8" fill="#fff" stroke="#333" stroke-width="1"/><circle cx="473" cy="194.5" r="3.2" fill="#333"/><text transform="translate(483,198.5) scale(0.88,1)" font-size="12" fill="#000" xml:space="preserve" >Read</text><circle cx="473" cy="210.8" r="5.8" fill="#fff" stroke="#333" stroke-width="1"/><text transform="translate(483,215) scale(0.88,1)" font-size="12" fill="#000" xml:space="preserve" >Write</text><rect x="462" y="221" width="101" height="1" fill="#a0a0a0" /><rect x="467.5" y="229.5" width="12" height="12" fill="#fff" stroke="#333" stroke-width="1" /><text transform="translate(483,240) scale(0.87,1)" font-size="12" fill="#000" xml:space="preserve" >Short stroke</text><rect x="467.5" y="249.5" width="62" height="19.5" fill="#fff" stroke="#b8b8b8" stroke-width="1" /><rect x="511.5" y="250.5" width="17" height="17.5" fill="#f0f0f0" /><rect x="511.5" y="250.5" width="0.8" height="17.5" fill="#d0d0d0" /><path d="M517,256.5 L520,253.5 L523,256.5 Z M517,261.5 L520,264.5 L523,261.5 Z" fill="#606060"/><text transform="translate(471,263.0) scale(0.87,1)" font-size="12" fill="#8a8a8a" xml:space="preserve" >40</text><text transform="translate(539.5,263) scale(0.88,1)" font-size="12" fill="#000" xml:space="preserve" >gB</text><rect x="467.5" y="278.5" width="12" height="12" fill="#fff" stroke="#333" stroke-width="1" /><path d="M469.5,284.5 L472,287.5 L477.5,281" fill="none" stroke="#333" stroke-width="1.2"/><text transform="translate(483,288.8) scale(0.857,1)" font-size="12" fill="#000" xml:space="preserve" >Transfer rate</text><rect x="462" y="293" width="101" height="1" fill="#a0a0a0" /><text transform="translate(467,306.5) scale(0.88,1)" font-size="12" fill="#000" xml:space="preserve" >Minimum</text><rect x="467.5" y="311.5" width="91.5" height="14.5" fill="#000" /><text transform="translate(513.5,323.3) scale(1.05,1)" font-size="12" font-weight="bold" text-anchor="middle" fill="#20c0f8" xml:space="preserve" >1694.0 MB/s</text><text transform="translate(467,339.8) scale(0.88,1)" font-size="12" fill="#000" xml:space="preserve" >Maximum</text><rect x="467.5" y="344" width="91.5" height="14.5" fill="#000" /><text transform="translate(513.5,355.8) scale(1.05,1)" font-size="12" font-weight="bold" text-anchor="middle" fill="#20c0f8" xml:space="preserve" >4226.1 MB/s</text><text transform="translate(467,369.5) scale(0.88,1)" font-size="12" fill="#000" xml:space="preserve" >Average</text><rect x="467.5" y="374.3" width="91.5" height="14.5" fill="#000" /><text transform="translate(513.5,386.1) scale(1.05,1)" font-size="12" font-weight="bold" text-anchor="middle" fill="#20c0f8" xml:space="preserve" >4087.3 MB/s</text><rect x="462" y="397" width="101" height="1" fill="#a0a0a0" /><rect x="467.5" y="404.0" width="12" height="12" fill="#fff" stroke="#333" stroke-width="1" /><path d="M469.5,410.0 L472,413.0 L477.5,406.5" fill="none" stroke="#333" stroke-width="1.2"/><text transform="translate(483,413.5) scale(0.87,1)" font-size="12" fill="#000" xml:space="preserve" >Access time</text><rect x="467.5" y="418.6" width="91.5" height="14.2" fill="#000" /><text transform="translate(513,430.3) scale(1.05,1)" font-size="12" font-weight="bold" text-anchor="middle" fill="#f0f000" xml:space="preserve" >0.040 ms</text><rect x="467.5" y="438.0" width="12" height="12" fill="#fff" stroke="#333" stroke-width="1" /><path d="M469.5,444.0 L472,447.0 L477.5,440.5" fill="none" stroke="#333" stroke-width="1.2"/><text transform="translate(483,448) scale(0.87,1)" font-size="12" fill="#000" xml:space="preserve" >Burst rate</text><rect x="467.5" y="452.6" width="91.5" height="14.3" fill="#000" /><text transform="translate(513,464.3) scale(1.05,1)" font-size="12" font-weight="bold" text-anchor="middle" fill="#fff" xml:space="preserve" >376.6 MB/s</text><text transform="translate(467,481) scale(0.88,1)" font-size="12" fill="#000" xml:space="preserve" >CPU usage</text><rect x="467.5" y="485.8" width="91.5" height="14" fill="#000" /><text transform="translate(513,497.5) scale(1.05,1)" font-size="12" font-weight="bold" text-anchor="middle" fill="#fff" xml:space="preserve" >8.0%</text></g><g transform="translate(587,3)"><rect x="0" y="0" width="578" height="513" fill="#f0f0f0" /><rect x="0" y="0" width="578" height="30" fill="#fff" /><g transform="translate(9,6.5)"><g transform="rotate(50 7.2 7.8)"><rect x="3" y="2" width="8.6" height="11.6" rx="0.8" fill="#1e1e1e"/><circle cx="7.3" cy="6.3" r="3.5" fill="#f2b04a"/><circle cx="7.3" cy="6.3" r="1.1" fill="#8ea0b8"/><rect x="5" y="10.3" width="4.5" height="2.2" fill="#777"/></g></g><text transform="translate(29.5,19) scale(0.972,1)" font-size="12" fill="#7c7c7c" xml:space="preserve" >HD Tune Pro 5.00 - Hard Disk Utility</text><rect x="459" y="14" width="10" height="1" fill="#7a7a7a" /><rect x="504.5" y="9.5" width="9" height="9" fill="none" stroke="#7a7a7a" stroke-width="1" /><path d="M550,9 L560,19 M560,9 L550,19" stroke="#7a7a7a" stroke-width="1"/><rect x="0" y="30" width="578" height="19" fill="#dde4ed" /><text transform="translate(7,44) scale(0.9,1)" font-size="12" fill="#222" xml:space="preserve" >File</text><rect x="7" y="45" width="6" height="1" fill="#222" /><text transform="translate(43,44) scale(0.9,1)" font-size="12" fill="#222" xml:space="preserve" >Help</text><rect x="43" y="45" width="7" height="1" fill="#222" /><rect x="0" y="49" width="578" height="45" fill="url(#tbg)" /><rect x="0" y="94" width="578" height="1.2" fill="#1a1a1a" /><rect x="11.5" y="58.5" width="223" height="20" fill="#e5e5e5" stroke="#adadad" stroke-width="1" /><text transform="translate(15,72.5) scale(0.876,1)" font-size="12" fill="#000" xml:space="preserve" >AMD-RAIDArray 1  (766 gB)</text><path d="M222,67.5 L226,71.5 L230,67.5" fill="none" stroke="#444" stroke-width="1"/><rect x="246.5" y="56.5" width="26" height="25" fill="#e1e1e1" stroke="#adadad" stroke-width="1" /><g transform="translate(252,61)"><rect x="5.5" y="1" width="4" height="12" rx="2" fill="#fff" stroke="#555" stroke-width="0.8"/><rect x="6.3" y="2" width="2.4" height="4" fill="#30d0f0"/><rect x="6.3" y="6" width="2.4" height="7" fill="#e01010"/><circle cx="7.5" cy="14.5" r="3" fill="#e01010" stroke="#555" stroke-width="0.8"/></g><text transform="translate(276,73) scale(0.95,1)" font-size="12" font-weight="bold" fill="#000" xml:space="preserve" >– °C</text><rect x="348.5" y="56.5" width="26" height="25" fill="#e1e1e1" stroke="#adadad" stroke-width="1" /><g transform="translate(353,61)"><g filter="url(#sh)"><path d="M1,1 H7 L9,3 V12 H1 Z" fill="#fff" stroke="#000" stroke-width="1"/><path d="M6,4 H12 L14,6 V15 H6 Z" fill="#fff" stroke="#000" stroke-width="1"/><path d="M2.5,5 H7 M2.5,7 H7 M2.5,9 H7 M7.5,8 H12.5 M7.5,10 H12.5 M7.5,12 H12.5" stroke="#2060e0" stroke-width="1"/></g></g><rect x="378.5" y="56.5" width="26" height="25" fill="#e1e1e1" stroke="#adadad" stroke-width="1" /><g transform="translate(383,61)"><g filter="url(#sh)"><path d="M1,1 H7 L9,3 V12 H1 Z" fill="#fff" stroke="#000" stroke-width="1"/><path d="M6,4 H12 L14,6 V15 H6 Z" fill="#fff" stroke="#000" stroke-width="1"/><rect x="2.5" y="4" width="4" height="5" fill="#30c060"/><rect x="3.5" y="5" width="2" height="2" fill="#e03030"/><rect x="7.5" y="8" width="5" height="5" fill="#30c060"/><rect x="9" y="9.5" width="2" height="2" fill="#e03030"/></g></g><rect x="408.5" y="56.5" width="26" height="25" fill="#e1e1e1" stroke="#adadad" stroke-width="1" /><g transform="translate(413,61)"><g filter="url(#sh)"><path d="M1,1 H14 L15,2 V15 H1 Z" fill="#2040c0" stroke="#000" stroke-width="1"/><rect x="3.5" y="1.5" width="9" height="6" fill="#d8d8d8"/><path d="M4.5,3 H11.5 M4.5,5 H11.5" stroke="#999" stroke-width="0.8"/><rect x="4.5" y="10" width="7" height="5" fill="#333"/><rect x="9" y="11" width="1.5" height="3" fill="#ddd"/></g></g><rect x="438.5" y="56.5" width="26" height="25" fill="#e1e1e1" stroke="#adadad" stroke-width="1" /><g transform="translate(443,61)"><g filter="url(#sh)"><ellipse cx="6" cy="6" rx="3.6" ry="4.2" transform="rotate(-40 6 6)" fill="none" stroke="#000" stroke-width="3.4"/><ellipse cx="6" cy="6" rx="3.6" ry="4.2" transform="rotate(-40 6 6)" fill="none" stroke="#e8d020" stroke-width="1.8"/><ellipse cx="10.5" cy="10.5" rx="3.6" ry="4.2" transform="rotate(-40 10.5 10.5)" fill="none" stroke="#000" stroke-width="3.4"/><ellipse cx="10.5" cy="10.5" rx="3.6" ry="4.2" transform="rotate(-40 10.5 10.5)" fill="none" stroke="#e8d020" stroke-width="1.8"/></g></g><rect x="472.5" y="56.5" width="26" height="25" fill="#e1e1e1" stroke="#adadad" stroke-width="1" /><g transform="translate(476,59.5)"><defs><linearGradient id="dng" x1="0" y1="0" x2="0" y2="1"><stop offset="0" stop-color="#e040e0"/><stop offset="1" stop-color="#9010a0"/></linearGradient></defs><rect x="0" y="0" width="19" height="19" rx="2" fill="url(#dng)"/><path d="M8,3 H11 V10.5 H14.5 L9.5,16 L4.5,10.5 H8 Z" fill="#fff"/></g><rect x="514.5" y="56.5" width="51" height="25" fill="#e1e1e1" stroke="#adadad" stroke-width="1" /><text transform="translate(540,73) scale(0.9,1)" font-size="12" text-anchor="middle" fill="#000" xml:space="preserve" >Exit</text><rect x="11.5" y="138.5" width="554" height="371" fill="#fff" stroke="#d9d9d9" stroke-width="1" /><rect x="13.5" y="98.5" width="106" height="20" fill="#f0f0f0" stroke="#d9d9d9" stroke-width="1" /><g transform="translate(27,100)"><g filter="url(#sh)"><path d="M6,1.5 H10 L11.5,3 V7 L10.5,10.5 H5.5 L4.5,7 V3 Z" fill="#f0e800" stroke="#000" stroke-width="1.3"/><ellipse cx="8" cy="13.8" rx="2.2" ry="1.6" fill="#b8a020" stroke="#000" stroke-width="1.2"/></g></g><text transform="translate(50.6,113) scale(0.87,1)" font-size="12" fill="#000" xml:space="preserve" >Benchmark</text><rect x="119.5" y="98.5" width="70" height="20" fill="#f0f0f0" stroke="#d9d9d9" stroke-width="1" /><g transform="translate(133,100)"><g filter="url(#sh)"><ellipse cx="8" cy="2.8" rx="2.3" ry="1.9" fill="#20c8f8" stroke="#000" stroke-width="1.1"/><path d="M4.5,6 H9.5 V13.5 H11 V15 H3.5 V13.5 L5.5,12 V7.5 H4.5 Z" fill="#1060f0" stroke="#000" stroke-width="1.1"/></g></g><text transform="translate(156.6,113) scale(0.87,1)" font-size="12" fill="#000" xml:space="preserve" >Info</text><rect x="189.5" y="98.5" width="82" height="20" fill="#f0f0f0" stroke="#d9d9d9" stroke-width="1" /><g transform="translate(203,100)"><g filter="url(#sh)"><path d="M6,1 H10 V6 H15 V10 H10 V15 H6 V10 H1 V6 H6 Z" fill="#f02020" stroke="#000" stroke-width="1.2"/></g></g><text transform="translate(226.6,113) scale(0.87,1)" font-size="12" fill="#000" xml:space="preserve" >Health</text><rect x="271.5" y="98.5" width="102" height="20" fill="#f0f0f0" stroke="#d9d9d9" stroke-width="1" /><g transform="translate(285,100)"><g filter="url(#sh)"><path d="M10,10 L15,15" stroke="#000" stroke-width="4" stroke-linecap="round"/><path d="M10,10 L14.5,14.5" stroke="#1020d0" stroke-width="2" stroke-linecap="round"/><path d="M3.5,0.8 H8.5 L11.2,3.5 V8.5 L8.5,11.2 H3.5 L0.8,8.5 V3.5 Z" fill="#40e040" stroke="#000" stroke-width="1.2"/></g></g><text transform="translate(308.6,113) scale(0.87,1)" font-size="12" fill="#000" xml:space="preserve" >Error Scan</text><rect x="373.5" y="98.5" width="114" height="20" fill="#f0f0f0" stroke="#d9d9d9" stroke-width="1" /><g transform="translate(387,100)"><g filter="url(#sh)"><path d="M1,3 L2,1.5 H5 L6,3 H11 V5 H1 Z" fill="#f8e040" stroke="#000" stroke-width="1.1"/><path d="M1,3 V15 H3 V5 H13 V15 H3" fill="#e8b800" stroke="#000" stroke-width="1.1"/><rect x="3" y="5" width="10" height="10" fill="#e0b010" stroke="#000" stroke-width="1.1"/></g></g><text transform="translate(410.6,113) scale(0.87,1)" font-size="12" fill="#000" xml:space="preserve" >Folder Usage</text><rect x="487.5" y="98.5" width="77" height="20" fill="#f0f0f0" stroke="#d9d9d9" stroke-width="1" /><g transform="translate(501,100)"><defs><linearGradient id="trg" x1="0" x2="1"><stop offset="0" stop-color="#888"/><stop offset="0.3" stop-color="#eee"/><stop offset="0.6" stop-color="#777"/><stop offset="1" stop-color="#222"/></linearGradient></defs><g filter="url(#sh)"><path d="M1,2.5 H5.5 V1 H9.5 V2.5 H14 V4.5 H1 Z" fill="#aaa" stroke="#000" stroke-width="1.1"/><path d="M2,4.5 H13 V15 H2 Z" fill="url(#trg)" stroke="#000" stroke-width="1.1"/></g></g><text transform="translate(524.6,113) scale(0.87,1)" font-size="12" fill="#000" xml:space="preserve" >Erase</text><rect x="140.5" y="118.5" width="113" height="20" fill="#f0f0f0" stroke="#d9d9d9" stroke-width="1" /><g transform="translate(156,119)"><g filter="url(#sh)"><rect x="0.5" y="0.5" width="15" height="15" fill="#fffbc0" stroke="#000" stroke-width="1.2"/><path d="M1,6 H3 V15 H1 Z M5,9 H7 V15 H5 Z M9,6 H12 V15 H9 Z M14,8 H15 V15 H14Z" fill="#00ee00"/><path d="M3,9 H5 V15 H3 Z M7,5 H9 V15 H7 Z M12,8 H14 V15 H12 Z" fill="#4040ff"/></g></g><text transform="translate(179,133) scale(0.87,1)" font-size="12" fill="#000" xml:space="preserve" >Disk monitor</text><rect x="253.5" y="118.5" width="77" height="20" fill="#f0f0f0" stroke="#d9d9d9" stroke-width="1" /><g transform="translate(269,119)"><g filter="url(#sh)"><path d="M0.8,6 L4,4.5 L9.5,0.8 V15 L4,11 L0.8,10 Z" fill="#f0e800" stroke="#000" stroke-width="1.2"/><path d="M11.5,5.5 Q13,8 11.5,10.5 M13,3.5 Q16,8 13,12.5" fill="none" stroke="#000" stroke-width="1.1"/></g></g><text transform="translate(292,133) scale(0.87,1)" font-size="12" fill="#000" xml:space="preserve" >AAM</text><rect x="330.5" y="118.5" width="132" height="20" fill="#f0f0f0" stroke="#d9d9d9" stroke-width="1" /><g transform="translate(346,119)"><g filter="url(#sh)"><rect x="0.5" y="0.5" width="15" height="15" fill="#fff8c0" stroke="#000" stroke-width="1.2"/><circle cx="3.5" cy="7" r="0.8" fill="#2020ff"/><circle cx="6" cy="5.5" r="0.8" fill="#2020ff"/><circle cx="8" cy="6.5" r="0.8" fill="#2020ff"/><circle cx="10" cy="5.5" r="0.8" fill="#2020ff"/><circle cx="12" cy="3.5" r="0.8" fill="#2020ff"/><circle cx="12" cy="5" r="0.8" fill="#2020ff"/><circle cx="4.5" cy="9" r="0.8" fill="#2020ff"/><circle cx="4" cy="9.5" r="0.8" fill="#ff2020"/><circle cx="4" cy="11" r="0.8" fill="#ff2020"/><circle cx="2.5" cy="13" r="0.8" fill="#ff2020"/><circle cx="8" cy="8" r="0.8" fill="#ff2020"/><circle cx="8" cy="11" r="0.8" fill="#ff2020"/><circle cx="10" cy="10" r="0.8" fill="#ff2020"/><circle cx="12" cy="8" r="0.8" fill="#ff2020"/><circle cx="13" cy="10" r="0.8" fill="#ff2020"/></g></g><text transform="translate(369,133) scale(0.87,1)" font-size="12" fill="#000" xml:space="preserve" >Random Access</text><rect x="462.5" y="118.5" width="102" height="20" fill="#f0f0f0" stroke="#d9d9d9" stroke-width="1" /><g transform="translate(478,119)"><g filter="url(#sh)"><rect x="0.5" y="0.5" width="15" height="15" fill="#fff8c0" stroke="#000" stroke-width="1.2"/><path d="M1,7 H3 V15 H1 Z M5,10 H6 V15 H5 Z" fill="#00ee00"/><path d="M3,9 H5 V15 H3Z" fill="#4040ff"/><rect x="6.5" y="6.5" width="9" height="9" fill="#f4f4f4" stroke="#000" stroke-width="1"/><rect x="7" y="7" width="8" height="1.5" fill="#1020e0"/><circle cx="8.5" cy="10" r="0.7" fill="#f00"/><circle cx="10.5" cy="10" r="0.7" fill="#22f"/><circle cx="12.5" cy="10" r="0.7" fill="#f00"/><circle cx="8.5" cy="12" r="0.7" fill="#0a0"/><circle cx="10.5" cy="12" r="0.7" fill="#f00"/><circle cx="12.5" cy="12" r="0.7" fill="#f00"/><circle cx="8.5" cy="14" r="0.7" fill="#f00"/><circle cx="10.5" cy="14" r="0.7" fill="#f00"/><circle cx="12.5" cy="14" r="0.7" fill="#22f"/></g></g><text transform="translate(501,133) scale(0.87,1)" font-size="12" fill="#000" xml:space="preserve" >Extra tests</text><rect x="11" y="116" width="131" height="23" fill="#fff" /><path d="M11.5,139 V116.5 H141.5 V139" fill="none" stroke="#d9d9d9" stroke-width="1"/><g transform="translate(27.5,119)"><g filter="url(#sh)"><path d="M0.5,0.5 H10.5 L13.5,3.5 V15.5 H0.5 Z" fill="#e6e6e6" stroke="#000" stroke-width="1.2"/><path d="M5,2.5 H8.5 L9.5,4 V7 L8.5,9.5 H5 L4,7 V4 Z" fill="#d030d0" stroke="#000" stroke-width="1"/><ellipse cx="6.8" cy="12.5" rx="1.7" ry="1.2" fill="#c030c0" stroke="#000" stroke-width="0.9"/></g></g><text transform="translate(51.3,131) scale(0.87,1)" font-size="12" fill="#000" xml:space="preserve" >File Benchmark</text><rect x="45.5" y="152.7" width="12" height="12" fill="#fff" stroke="#333" stroke-width="1" /><path d="M47.5,158.7 L50,161.7 L55.5,155.2" fill="none" stroke="#333" stroke-width="1.2"/><text transform="translate(61.4,162.5) scale(0.87,1)" font-size="12" fill="#000" xml:space="preserve" >Transfer speed</text><defs><linearGradient id="cbg2" x1="0" y1="0" x2="0" y2="1"><stop offset="0" stop-color="#000"/><stop offset="1" stop-color="#404040"/></linearGradient></defs><rect x="43" y="181.3" width="390.5" height="104.7" fill="#000" /><rect x="45" y="183.3" width="386.7" height="100.4" fill="url(#cbg2)" /><rect x="45" y="183" width="1" height="101" fill="#7a7a7a" /><rect x="64" y="183" width="1" height="101" fill="#4c4c4c" /><rect x="84" y="183" width="1" height="101" fill="#7a7a7a" /><rect x="103" y="183" width="1" height="101" fill="#4c4c4c" /><rect x="122" y="183" width="1" height="101" fill="#7a7a7a" /><rect x="142" y="183" width="1" height="101" fill="#4c4c4c" /><rect x="161" y="183" width="1" height="101" fill="#7a7a7a" /><rect x="180" y="183" width="1" height="101" fill="#4c4c4c" /><rect x="199" y="183" width="1" height="101" fill="#7a7a7a" /><rect x="219" y="183" width="1" height="101" fill="#4c4c4c" /><rect x="238" y="183" width="1" height="101" fill="#7a7a7a" /><rect x="257" y="183" width="1" height="101" fill="#4c4c4c" /><rect x="277" y="183" width="1" height="101" fill="#7a7a7a" /><rect x="296" y="183" width="1" height="101" fill="#4c4c4c" /><rect x="315" y="183" width="1" height="101" fill="#7a7a7a" /><rect x="335" y="183" width="1" height="101" fill="#4c4c4c" /><rect x="354" y="183" width="1" height="101" fill="#7a7a7a" /><rect x="373" y="183" width="1" height="101" fill="#4c4c4c" /><rect x="393" y="183" width="1" height="101" fill="#7a7a7a" /><rect x="412" y="183" width="1" height="101" fill="#4c4c4c" /><rect x="431" y="183" width="1" height="101" fill="#7a7a7a" /><rect x="45" y="183" width="387" height="1" fill="#7a7a7a" /><rect x="45" y="191" width="387" height="1" fill="#4c4c4c" /><rect x="45" y="200" width="387" height="1" fill="#7a7a7a" /><rect x="45" y="208" width="387" height="1" fill="#4c4c4c" /><rect x="45" y="216" width="387" height="1" fill="#7a7a7a" /><rect x="45" y="225" width="387" height="1" fill="#4c4c4c" /><rect x="45" y="233" width="387" height="1" fill="#7a7a7a" /><rect x="45" y="241" width="387" height="1" fill="#4c4c4c" /><rect x="45" y="250" width="387" height="1" fill="#7a7a7a" /><rect x="45" y="258" width="387" height="1" fill="#4c4c4c" /><rect x="45" y="267" width="387" height="1" fill="#7a7a7a" /><rect x="45" y="275" width="387" height="1" fill="#4c4c4c" /><rect x="40" y="183" width="3" height="1" fill="#555" /><rect x="433.5" y="183" width="2" height="1" fill="#555" /><rect x="40" y="200" width="3" height="1" fill="#555" /><rect x="433.5" y="200" width="2" height="1" fill="#555" /><rect x="40" y="216" width="3" height="1" fill="#555" /><rect x="433.5" y="216" width="2" height="1" fill="#555" /><rect x="40" y="233" width="3" height="1" fill="#555" /><rect x="433.5" y="233" width="2" height="1" fill="#555" /><rect x="40" y="250" width="3" height="1" fill="#555" /><rect x="433.5" y="250" width="2" height="1" fill="#555" /><rect x="40" y="267" width="3" height="1" fill="#555" /><rect x="433.5" y="267" width="2" height="1" fill="#555" /><rect x="45" y="286" width="1" height="3" fill="#555" /><rect x="84" y="286" width="1" height="3" fill="#555" /><rect x="122" y="286" width="1" height="3" fill="#555" /><rect x="161" y="286" width="1" height="3" fill="#555" /><rect x="199" y="286" width="1" height="3" fill="#555" /><rect x="238" y="286" width="1" height="3" fill="#555" /><rect x="277" y="286" width="1" height="3" fill="#555" /><rect x="315" y="286" width="1" height="3" fill="#555" /><rect x="354" y="286" width="1" height="3" fill="#555" /><rect x="393" y="286" width="1" height="3" fill="#555" /><rect x="431" y="286" width="1" height="3" fill="#555" /><text transform="translate(39.5,187.8) scale(0.88,1)" font-size="12" text-anchor="end" fill="#000" xml:space="preserve" >5000</text><text transform="translate(39.5,204.5) scale(0.88,1)" font-size="12" text-anchor="end" fill="#000" xml:space="preserve" >2500</text><text transform="translate(39.5,221.2) scale(0.88,1)" font-size="12" text-anchor="end" fill="#000" xml:space="preserve" >0000</text><text transform="translate(39.5,237.9) scale(0.88,1)" font-size="12" text-anchor="end" fill="#000" xml:space="preserve" >7500</text><text transform="translate(39.5,254.6) scale(0.88,1)" font-size="12" text-anchor="end" fill="#000" xml:space="preserve" >5000</text><text transform="translate(39.5,271.3) scale(0.88,1)" font-size="12" text-anchor="end" fill="#000" xml:space="preserve" >2500</text><text transform="translate(436.3,187.8) scale(0.88,1)" font-size="12" fill="#000" xml:space="preserve" >60</text><text transform="translate(436.3,204.5) scale(0.88,1)" font-size="12" fill="#000" xml:space="preserve" >50</text><text transform="translate(436.3,221.2) scale(0.88,1)" font-size="12" fill="#000" xml:space="preserve" >40</text><text transform="translate(436.3,237.9) scale(0.88,1)" font-size="12" fill="#000" xml:space="preserve" >30</text><text transform="translate(436.3,254.6) scale(0.88,1)" font-size="12" fill="#000" xml:space="preserve" >20</text><text transform="translate(436.3,271.3) scale(0.88,1)" font-size="12" fill="#000" xml:space="preserve" >10</text><text transform="translate(45.5,298) scale(0.88,1)" font-size="12" text-anchor="middle" fill="#000" xml:space="preserve" >0</text><text transform="translate(84.12,298) scale(0.88,1)" font-size="12" text-anchor="middle" fill="#000" xml:space="preserve" >50</text><text transform="translate(122.74,298) scale(0.88,1)" font-size="12" text-anchor="middle" fill="#000" xml:space="preserve" >100</text><text transform="translate(161.36,298) scale(0.88,1)" font-size="12" text-anchor="middle" fill="#000" xml:space="preserve" >150</text><text transform="translate(199.98,298) scale(0.88,1)" font-size="12" text-anchor="middle" fill="#000" xml:space="preserve" >200</text><text transform="translate(238.6,298) scale(0.88,1)" font-size="12" text-anchor="middle" fill="#000" xml:space="preserve" >250</text><text transform="translate(277.22,298) scale(0.88,1)" font-size="12" text-anchor="middle" fill="#000" xml:space="preserve" >300</text><text transform="translate(315.84,298) scale(0.88,1)" font-size="12" text-anchor="middle" fill="#000" xml:space="preserve" >350</text><text transform="translate(354.46,298) scale(0.88,1)" font-size="12" text-anchor="middle" fill="#000" xml:space="preserve" >400</text><text transform="translate(393.08,298) scale(0.88,1)" font-size="12" text-anchor="middle" fill="#000" xml:space="preserve" >450</text><text transform="translate(430.3,298) scale(0.88,1)" font-size="12" text-anchor="middle" fill="#000" xml:space="preserve" >500mB</text><text transform="translate(45.6,179.3) scale(0.88,1)" font-size="12" fill="#000" xml:space="preserve" >MB/s</text><text transform="translate(431,179.8) scale(0.88,1)" font-size="12" text-anchor="end" fill="#000" xml:space="preserve" >ms</text><path d="M45.5,270.0 L48.0,257.0 L50.0,250.8 L52.9,256.0 L55.9,252.2 L58.2,267.0 L61.0,277.0 L63.3,257.6 L65.8,252.0 L68.1,256.5 L70.9,250.0 L73.2,257.2 L76.2,252.4 L78.5,256.8 L81.3,251.3 L84.0,256.0 L86.3,250.3 L88.5,256.9 L91.1,251.4 L93.4,256.0 L95.8,252.1 L98.8,257.8 L101.1,250.2 L104.0,256.7 L106.8,250.8 L109.4,256.8 L112.0,251.5 L114.2,257.3 L117.1,250.5 L119.6,257.3 L122.1,250.5 L124.5,256.8 L126.7,252.2 L129.5,257.3 L132.4,251.6 L134.9,257.0 L137.5,252.5 L140.4,256.1 L143.3,251.9 L146.1,257.5 L148.7,252.2 L151.6,257.2 L154.4,251.9 L156.9,257.3 L159.2,250.9 L161.7,255.5 L164.2,251.6 L166.9,256.1 L169.9,251.7 L172.3,257.1 L175.0,251.3 L177.5,258.0 L180.2,251.8 L183.0,258.0 L185.3,251.5 L188.0,256.1 L190.6,250.1 L192.9,256.4 L195.2,250.6 L198.1,256.9 L200.7,252.4 L203.4,258.0 L206.1,252.0 L208.4,257.0 L211.2,250.1 L214.1,255.9 L216.7,250.4 L219.3,249.5 L221.5,244.9 L224.1,249.3 L226.7,243.4 L229.2,249.6 L231.8,243.2 L234.6,248.7 L236.8,243.1 L239.0,248.4 L241.8,243.5 L244.8,249.9 L247.0,245.0 L250.0,248.2 L252.9,243.6 L255.5,250.4 L257.9,243.8 L260.8,249.8 L263.4,244.9 L266.2,249.5 L268.5,244.1 L271.1,248.5 L273.3,251.3 L275.6,256.6 L278.4,251.1 L280.8,257.0 L283.3,251.9 L285.9,258.0 L288.9,251.8 L291.3,255.8 L294.2,252.0 L296.9,256.4 L299.3,251.7 L302.0,257.0 L304.7,251.9 L307.0,256.1 L310.0,252.3 L312.9,255.6 L315.2,250.7 L317.7,257.1 L320.0,251.4 L322.2,255.7 L325.0,251.4 L327.7,256.4 L330.3,250.5 L332.8,257.4 L335.6,250.2 L337.9,257.5 L340.6,251.9 L343.0,256.6 L345.4,252.0 L347.9,257.1 L350.9,250.8 L353.5,257.4 L356.5,251.1 L359.0,255.7 L361.9,250.2 L364.1,256.9 L366.7,251.7 L369.1,249.9 L371.4,243.0 L374.1,248.2 L376.6,244.3 L379.3,248.7 L381.6,243.4 L384.4,248.9 L386.7,244.3 L389.4,250.3 L392.3,244.8 L394.9,250.0 L397.3,243.3 L399.8,250.3 L402.8,243.1 L405.2,248.9 L407.7,243.5 L410.2,248.5 L412.9,244.5 L415.5,250.1 L418.2,242.9 L421.0,250.2 L423.4,242.6 L426.0,249.4 L428.7,244.9 L431.5,251.0" fill="none" stroke="#1ab8f0" stroke-width="1.3"/><path d="M45.5,240.6 L49.0,238.0 L50.5,249.0 L53.0,241.0 L56.0,238.0 L58.5,214.0 L61.0,242.0 L63.0,255.0 L66.0,222.0 L68.0,250.0 L72.5,260.0 L74.0,237.0 L76.5,226.0 L78.0,245.0 L80.5,227.0 L82.0,207.0 L84.5,244.0 L86.0,235.0 L89.0,217.0 L92.0,230.0 L93.5,250.0 L95.5,214.0 L99.0,233.0 L103.0,219.0 L105.0,227.0 L109.0,223.0 L112.0,215.0 L113.5,218.0 L119.0,247.0 L122.0,267.0 L127.0,273.0 L131.0,269.0 L133.0,276.0 L135.0,269.0 L137.0,275.0 L139.0,231.0 L142.0,233.0 L145.0,254.0 L149.0,252.0 L153.0,239.0 L158.0,227.0 L161.0,233.0 L163.0,225.0 L166.0,233.0 L171.0,233.0 L175.0,253.0 L178.0,262.0 L180.0,250.6 L182.4,260.6 L185.0,252.0 L187.1,256.8 L188.8,254.9 L191.5,271.2 L193.4,270.7 L196.5,260.7 L199.3,250.7 L202.7,263.6 L204.7,273.1 L207.9,259.5 L209.5,248.7 L212.8,272.0 L214.9,247.7 L217.9,257.1 L219.6,253.4 L222.0,257.7 L224.8,247.9 L226.8,264.7 L230.0,248.7 L232.8,256.9 L234.9,253.2 L236.6,256.8 L239.3,250.0 L241.7,261.2 L243.6,254.3 L245.6,262.7 L248.9,254.1 L250.7,256.3 L253.5,249.1 L255.7,257.6 L257.7,251.5 L259.8,244.8 L262.2,247.5 L264.8,257.2 L268.2,252.3 L270.0,274.3 L273.4,247.2 L276.3,258.9 L278.8,252.9 L281.7,263.1 L284.5,254.2 L287.6,263.8 L289.9,251.7 L292.6,264.9 L294.9,252.9 L298.0,245.8 L300.5,248.8 L303.2,244.9 L306.0,280.0 L308.8,260.0 L311.6,248.6 L314.8,263.9 L317.0,248.1 L320.1,262.4 L322.0,250.6 L324.4,261.6 L327.5,254.9 L329.2,272.7 L331.3,268.1 L333.0,263.5 L334.6,252.0 L337.4,263.3 L339.4,245.4 L342.3,257.6 L345.1,251.2 L347.4,263.1 L350.7,252.8 L353.4,281.0 L356.6,253.4 L359.4,257.8 L362.1,252.7 L365.5,264.8 L367.7,254.3 L369.4,260.0 L371.9,247.2 L375.0,257.6 L376.8,248.2 L379.9,262.2 L383.2,247.7 L385.3,262.6 L388.5,251.5 L391.6,264.1 L394.9,251.2 L397.5,246.9 L400.0,250.2 L402.5,271.3 L405.8,254.4 L407.7,259.9 L410.1,249.5 L413.4,244.6 L415.4,252.5 L418.1,245.0 L420.6,249.0 L423.0,259.4 L424.9,248.6 L427.5,263.7 L429.5,252.9 L431.5,263.0" fill="none" stroke="#f08a10" stroke-width="1.3"/><rect x="41" y="316.5" width="362.5" height="2" fill="#6a6a6a" /><rect x="224" y="303.4" width="2" height="74.4" fill="#6a6a6a" /><rect x="307.6" y="303.4" width="2" height="74.4" fill="#6a6a6a" /><text transform="translate(266,313.7) scale(0.88,1)" font-size="12" text-anchor="middle" fill="#000" xml:space="preserve" >Read</text><text transform="translate(351.7,313.7) scale(0.88,1)" font-size="12" text-anchor="middle" fill="#000" xml:space="preserve" >Write</text><text transform="translate(45.4,332.9) scale(0.88,1)" font-size="12" fill="#000" xml:space="preserve" >Sequential</text><text transform="translate(45.4,352.1) scale(0.87,1)" font-size="12" fill="#000" xml:space="preserve" >4 KB random single</text><text transform="translate(45.4,371.4) scale(0.87,1)" font-size="12" fill="#000" xml:space="preserve" >4 KB random multi</text><rect x="155.5" y="356.5" width="34" height="19.5" fill="#fff" stroke="#b8b8b8" stroke-width="1" /><text transform="translate(159,371) scale(0.88,1)" font-size="12" fill="#000" xml:space="preserve" >32</text><rect x="173.5" y="357.5" width="16" height="18.5" fill="#f0f0f0" stroke="#c8c8c8" stroke-width="1" /><rect x="174" y="366.25" width="15" height="0.8" fill="#c8c8c8" /><path d="M178.0,363.75 L181.0,360.75 L184.0,363.75 Z M178.0,369.25 L181.0,372.25 L184.0,369.25 Z" fill="#303030"/><text transform="translate(305,333) scale(1.04,1)" font-size="12" font-weight="bold" text-anchor="end" fill="#000" xml:space="preserve" >3537922</text><text transform="translate(392,333) scale(1.04,1)" font-size="12" font-weight="bold" text-anchor="end" fill="#000" xml:space="preserve" >2863954</text><text transform="translate(305,352.3) scale(1.04,1)" font-size="12" font-weight="bold" text-anchor="end" fill="#000" xml:space="preserve" >12267 IOPS</text><text transform="translate(392,352.3) scale(1.04,1)" font-size="12" font-weight="bold" text-anchor="end" fill="#000" xml:space="preserve" >50021 IOPS</text><text transform="translate(305,371.5) scale(1.04,1)" font-size="12" font-weight="bold" text-anchor="end" fill="#000" xml:space="preserve" >89460 IOPS</text><text transform="translate(392,371.5) scale(1.04,1)" font-size="12" font-weight="bold" text-anchor="end" fill="#000" xml:space="preserve" >80201 IOPS</text><rect x="15" y="384" width="536" height="1" fill="#a0a0a0" /><rect x="45.5" y="392.5" width="12" height="12" fill="#fff" stroke="#333" stroke-width="1" /><path d="M47.5,398.5 L50,401.5 L55.5,395" fill="none" stroke="#333" stroke-width="1.2"/><text transform="translate(61.5,402.3) scale(0.87,1)" font-size="12" fill="#000" xml:space="preserve" >Block size measurement</text><text transform="translate(45.6,418.8) scale(0.88,1)" font-size="12" fill="#000" xml:space="preserve" >MB/s</text><rect x="43" y="422.1" width="405.20000000000005" height="69.59999999999997" fill="#000" /><rect x="44.7" y="424.1" width="401.80000000000007" height="65.39999999999996" fill="url(#cbg2)" /><rect x="45" y="424" width="401.5" height="1" fill="#7a7a7a" /><rect x="448" y="424" width="3" height="1" fill="#666" /><rect x="45" y="429" width="401.5" height="1" fill="#4c4c4c" /><rect x="45" y="435" width="401.5" height="1" fill="#7a7a7a" /><rect x="448" y="435" width="3" height="1" fill="#666" /><rect x="45" y="440" width="401.5" height="1" fill="#4c4c4c" /><rect x="45" y="446" width="401.5" height="1" fill="#7a7a7a" /><rect x="448" y="446" width="3" height="1" fill="#666" /><rect x="45" y="451" width="401.5" height="1" fill="#4c4c4c" /><rect x="45" y="457" width="401.5" height="1" fill="#7a7a7a" /><rect x="448" y="457" width="3" height="1" fill="#666" /><rect x="45" y="462" width="401.5" height="1" fill="#4c4c4c" /><rect x="45" y="468" width="401.5" height="1" fill="#7a7a7a" /><rect x="448" y="468" width="3" height="1" fill="#666" /><rect x="45" y="473" width="401.5" height="1" fill="#4c4c4c" /><rect x="45" y="479" width="401.5" height="1" fill="#7a7a7a" /><rect x="448" y="479" width="3" height="1" fill="#666" /><rect x="45" y="484" width="401.5" height="1" fill="#4c4c4c" /><rect x="58" y="424" width="1" height="66" fill="#7a7a7a" /><rect x="58" y="492" width="1" height="4" fill="#555" /><rect x="85" y="424" width="1" height="66" fill="#7a7a7a" /><rect x="85" y="492" width="1" height="4" fill="#555" /><rect x="111" y="424" width="1" height="66" fill="#7a7a7a" /><rect x="111" y="492" width="1" height="4" fill="#555" /><rect x="138" y="424" width="1" height="66" fill="#7a7a7a" /><rect x="138" y="492" width="1" height="4" fill="#555" /><rect x="165" y="424" width="1" height="66" fill="#7a7a7a" /><rect x="165" y="492" width="1" height="4" fill="#555" /><rect x="192" y="424" width="1" height="66" fill="#7a7a7a" /><rect x="192" y="492" width="1" height="4" fill="#555" /><rect x="218" y="424" width="1" height="66" fill="#7a7a7a" /><rect x="218" y="492" width="1" height="4" fill="#555" /><rect x="245" y="424" width="1" height="66" fill="#7a7a7a" /><rect x="245" y="492" width="1" height="4" fill="#555" /><rect x="272" y="424" width="1" height="66" fill="#7a7a7a" /><rect x="272" y="492" width="1" height="4" fill="#555" /><rect x="298" y="424" width="1" height="66" fill="#7a7a7a" /><rect x="298" y="492" width="1" height="4" fill="#555" /><rect x="325" y="424" width="1" height="66" fill="#7a7a7a" /><rect x="325" y="492" width="1" height="4" fill="#555" /><rect x="352" y="424" width="1" height="66" fill="#7a7a7a" /><rect x="352" y="492" width="1" height="4" fill="#555" /><rect x="379" y="424" width="1" height="66" fill="#7a7a7a" /><rect x="379" y="492" width="1" height="4" fill="#555" /><rect x="405" y="424" width="1" height="66" fill="#7a7a7a" /><rect x="405" y="492" width="1" height="4" fill="#555" /><rect x="432" y="424" width="1" height="66" fill="#7a7a7a" /><rect x="432" y="492" width="1" height="4" fill="#555" /><text transform="translate(39.5,428.8) scale(0.88,1)" font-size="12" text-anchor="end" fill="#000" xml:space="preserve" >6000</text><text transform="translate(39.5,439.78) scale(0.88,1)" font-size="12" text-anchor="end" fill="#000" xml:space="preserve" >5000</text><text transform="translate(39.5,450.76) scale(0.88,1)" font-size="12" text-anchor="end" fill="#000" xml:space="preserve" >4000</text><text transform="translate(39.5,461.74) scale(0.88,1)" font-size="12" text-anchor="end" fill="#000" xml:space="preserve" >3000</text><text transform="translate(39.5,472.72) scale(0.88,1)" font-size="12" text-anchor="end" fill="#000" xml:space="preserve" >2000</text><text transform="translate(39.5,483.7) scale(0.88,1)" font-size="12" text-anchor="end" fill="#000" xml:space="preserve" >1000</text><text transform="translate(58.5,505.8) scale(0.88,1)" font-size="12" text-anchor="middle" fill="#000" xml:space="preserve" >0.5</text><text transform="translate(85.21,505.8) scale(0.88,1)" font-size="12" text-anchor="middle" fill="#000" xml:space="preserve" >1</text><text transform="translate(111.92,505.8) scale(0.88,1)" font-size="12" text-anchor="middle" fill="#000" xml:space="preserve" >2</text><text transform="translate(138.63,505.8) scale(0.88,1)" font-size="12" text-anchor="middle" fill="#000" xml:space="preserve" >4</text><text transform="translate(165.34,505.8) scale(0.88,1)" font-size="12" text-anchor="middle" fill="#000" xml:space="preserve" >8</text><text transform="translate(192.05,505.8) scale(0.88,1)" font-size="12" text-anchor="middle" fill="#000" xml:space="preserve" >16</text><text transform="translate(218.76,505.8) scale(0.88,1)" font-size="12" text-anchor="middle" fill="#000" xml:space="preserve" >32</text><text transform="translate(245.47,505.8) scale(0.88,1)" font-size="12" text-anchor="middle" fill="#000" xml:space="preserve" >64</text><text transform="translate(272.18,505.8) scale(0.88,1)" font-size="12" text-anchor="middle" fill="#000" xml:space="preserve" >128</text><text transform="translate(298.89,505.8) scale(0.88,1)" font-size="12" text-anchor="middle" fill="#000" xml:space="preserve" >256</text><text transform="translate(325.6,505.8) scale(0.88,1)" font-size="12" text-anchor="middle" fill="#000" xml:space="preserve" >512</text><text transform="translate(352.31,505.8) scale(0.88,1)" font-size="12" text-anchor="middle" fill="#000" xml:space="preserve" >1024</text><text transform="translate(379.02,505.8) scale(0.88,1)" font-size="12" text-anchor="middle" fill="#000" xml:space="preserve" >2048</text><text transform="translate(405.73,505.8) scale(0.88,1)" font-size="12" text-anchor="middle" fill="#000" xml:space="preserve" >4096</text><text transform="translate(432.44,505.8) scale(0.88,1)" font-size="12" text-anchor="middle" fill="#000" xml:space="preserve" >8192</text><defs><linearGradient id="bblue" x1="0" y1="0" x2="0" y2="1"><stop offset="0" stop-color="#0a5f86"/><stop offset="1" stop-color="#00c8ff"/></linearGradient><linearGradient id="borg" x1="0" y1="0" x2="0" y2="1"><stop offset="0" stop-color="#9a4600"/><stop offset="1" stop-color="#ff8c00"/></linearGradient></defs><rect x="49.0" y="489.74" width="9.5" height="-0.1409999999999627" fill="url(#bblue)" /><rect x="49.0" y="489.74" width="9.5" height="1" fill="#10c8ff" /><rect x="49.0" y="489.74" width="1" height="-0.1409999999999627" fill="#10c0f8" /><rect x="58.5" y="489.96" width="8.3" height="-0.3606666666666456" fill="url(#borg)" /><rect x="58.5" y="489.96" width="8.3" height="1" fill="#ff9010" /><rect x="58.5" y="489.96" width="1" height="-0.3606666666666456" fill="#f08000" /><rect x="75.71" y="489.52" width="9.5" height="0.07866666666672018" fill="url(#bblue)" /><rect x="75.71" y="489.52" width="9.5" height="1" fill="#10c8ff" /><rect x="75.71" y="489.52" width="1" height="0.07866666666672018" fill="#10c0f8" /><rect x="85.21" y="489.74" width="8.3" height="-0.1409999999999627" fill="url(#borg)" /><rect x="85.21" y="489.74" width="8.3" height="1" fill="#ff9010" /><rect x="85.21" y="489.74" width="1" height="-0.1409999999999627" fill="#f08000" /><rect x="102.42" y="488.42" width="9.5" height="1.177000000000021" fill="url(#bblue)" /><rect x="102.42" y="488.42" width="9.5" height="1" fill="#10c8ff" /><rect x="102.42" y="488.42" width="1" height="1.177000000000021" fill="#10c0f8" /><rect x="111.92" y="488.75" width="8.3" height="0.847500000000025" fill="url(#borg)" /><rect x="111.92" y="488.75" width="8.3" height="1" fill="#ff9010" /><rect x="111.92" y="488.75" width="1" height="0.847500000000025" fill="#f08000" /><rect x="129.13" y="486.45" width="9.5" height="3.154000000000053" fill="url(#bblue)" /><rect x="129.13" y="486.45" width="9.5" height="1" fill="#10c8ff" /><rect x="129.13" y="486.45" width="1" height="3.154000000000053" fill="#10c0f8" /><rect x="138.63" y="486.78" width="8.3" height="2.8245000000000573" fill="url(#borg)" /><rect x="138.63" y="486.78" width="8.3" height="1" fill="#ff9010" /><rect x="138.63" y="486.78" width="1" height="2.8245000000000573" fill="#f08000" /><rect x="155.84" y="483.37" width="9.5" height="6.229333333333386" fill="url(#bblue)" /><rect x="155.84" y="483.37" width="9.5" height="1" fill="#10c8ff" /><rect x="155.84" y="483.37" width="1" height="6.229333333333386" fill="#10c0f8" /><rect x="165.34" y="483.81" width="8.3" height="5.7900000000000205" fill="url(#borg)" /><rect x="165.34" y="483.81" width="8.3" height="1" fill="#ff9010" /><rect x="165.34" y="483.81" width="1" height="5.7900000000000205" fill="#f08000" /><rect x="182.55" y="479.64" width="9.5" height="9.963666666666711" fill="url(#bblue)" /><rect x="182.55" y="479.64" width="9.5" height="1" fill="#10c8ff" /><rect x="182.55" y="479.64" width="1" height="9.963666666666711" fill="#10c0f8" /><rect x="192.05" y="477.77" width="8.3" height="11.830833333333374" fill="url(#borg)" /><rect x="192.05" y="477.77" width="8.3" height="1" fill="#ff9010" /><rect x="192.05" y="477.77" width="1" height="11.830833333333374" fill="#f08000" /><rect x="209.26" y="475.57" width="9.5" height="14.027500000000032" fill="url(#bblue)" /><rect x="209.26" y="475.57" width="9.5" height="1" fill="#10c8ff" /><rect x="209.26" y="475.57" width="1" height="14.027500000000032" fill="#10c0f8" /><rect x="218.76" y="467.88" width="8.3" height="21.715833333333364" fill="url(#borg)" /><rect x="218.76" y="467.88" width="8.3" height="1" fill="#ff9010" /><rect x="218.76" y="467.88" width="1" height="21.715833333333364" fill="#f08000" /><rect x="235.97" y="470.63" width="9.5" height="18.970000000000027" fill="url(#bblue)" /><rect x="235.97" y="470.63" width="9.5" height="1" fill="#10c8ff" /><rect x="235.97" y="470.63" width="1" height="18.970000000000027" fill="#10c0f8" /><rect x="245.47" y="456.9" width="8.3" height="32.69916666666671" fill="url(#borg)" /><rect x="245.47" y="456.9" width="8.3" height="1" fill="#ff9010" /><rect x="245.47" y="456.9" width="1" height="32.69916666666671" fill="#f08000" /><rect x="262.68" y="468.43" width="9.5" height="21.166666666666742" fill="url(#bblue)" /><rect x="262.68" y="468.43" width="9.5" height="1" fill="#10c8ff" /><rect x="262.68" y="468.43" width="1" height="21.166666666666742" fill="#10c0f8" /><rect x="272.18" y="456.9" width="8.3" height="32.69916666666671" fill="url(#borg)" /><rect x="272.18" y="456.9" width="8.3" height="1" fill="#ff9010" /><rect x="272.18" y="456.9" width="1" height="32.69916666666671" fill="#f08000" /><rect x="289.39" y="470.63" width="9.5" height="18.970000000000027" fill="url(#bblue)" /><rect x="289.39" y="470.63" width="9.5" height="1" fill="#10c8ff" /><rect x="289.39" y="470.63" width="1" height="18.970000000000027" fill="#10c0f8" /><rect x="298.89" y="456.9" width="8.3" height="32.69916666666671" fill="url(#borg)" /><rect x="298.89" y="456.9" width="8.3" height="1" fill="#ff9010" /><rect x="298.89" y="456.9" width="1" height="32.69916666666671" fill="#f08000" /><rect x="316.1" y="466.79" width="9.5" height="22.814166666666722" fill="url(#bblue)" /><rect x="316.1" y="466.79" width="9.5" height="1" fill="#10c8ff" /><rect x="316.1" y="466.79" width="1" height="22.814166666666722" fill="#10c0f8" /><rect x="325.6" y="456.9" width="8.3" height="32.69916666666671" fill="url(#borg)" /><rect x="325.6" y="456.9" width="8.3" height="1" fill="#ff9010" /><rect x="325.6" y="456.9" width="1" height="32.69916666666671" fill="#f08000" /><rect x="342.81" y="455.25" width="9.5" height="34.34666666666669" fill="url(#bblue)" /><rect x="342.81" y="455.25" width="9.5" height="1" fill="#10c8ff" /><rect x="342.81" y="455.25" width="1" height="34.34666666666669" fill="#10c0f8" /><rect x="352.31" y="456.9" width="8.3" height="32.69916666666671" fill="url(#borg)" /><rect x="352.31" y="456.9" width="8.3" height="1" fill="#ff9010" /><rect x="352.31" y="456.9" width="1" height="32.69916666666671" fill="#f08000" /><rect x="369.52" y="446.47" width="9.5" height="43.13333333333338" fill="url(#bblue)" /><rect x="369.52" y="446.47" width="9.5" height="1" fill="#10c8ff" /><rect x="369.52" y="446.47" width="1" height="43.13333333333338" fill="#10c0f8" /><rect x="379.02" y="456.9" width="8.3" height="32.69916666666671" fill="url(#borg)" /><rect x="379.02" y="456.9" width="8.3" height="1" fill="#ff9010" /><rect x="379.02" y="456.9" width="1" height="32.69916666666671" fill="#f08000" /><rect x="396.23" y="436.8" width="9.5" height="52.79866666666669" fill="url(#bblue)" /><rect x="396.23" y="436.8" width="9.5" height="1" fill="#10c8ff" /><rect x="396.23" y="436.8" width="1" height="52.79866666666669" fill="#10c0f8" /><rect x="405.73" y="456.35" width="8.3" height="33.24833333333339" fill="url(#borg)" /><rect x="405.73" y="456.35" width="8.3" height="1" fill="#ff9010" /><rect x="405.73" y="456.35" width="1" height="33.24833333333339" fill="#f08000" /><rect x="422.94" y="427.79" width="9.5" height="61.805000000000064" fill="url(#bblue)" /><rect x="422.94" y="427.79" width="9.5" height="1" fill="#10c8ff" /><rect x="422.94" y="427.79" width="1" height="61.805000000000064" fill="#10c0f8" /><rect x="432.44" y="456.35" width="8.3" height="33.24833333333339" fill="url(#borg)" /><rect x="432.44" y="456.35" width="8.3" height="1" fill="#ff9010" /><rect x="432.44" y="456.35" width="1" height="33.24833333333339" fill="#f08000" /><rect x="341.5" y="411" width="9" height="9" fill="url(#bblue)" stroke="#10a0d0" stroke-width="0.8" /><text transform="translate(356,418.5) scale(0.88,1)" font-size="12" fill="#000" xml:space="preserve" >read</text><rect x="401" y="411" width="9" height="9" fill="url(#borg)" stroke="#d07000" stroke-width="0.8" /><text transform="translate(416.5,419) scale(0.88,1)" font-size="12" fill="#000" xml:space="preserve" >write</text><rect x="480.5" y="152.5" width="72" height="20" fill="#e1e1e1" stroke="#adadad" stroke-width="1" /><text transform="translate(516.5,166.5) scale(0.88,1)" font-size="12" text-anchor="middle" fill="#000" xml:space="preserve" >Start</text><text transform="translate(480,191.6) scale(0.88,1)" font-size="12" fill="#000" xml:space="preserve" >Drive</text><rect x="480.5" y="199.5" width="74" height="20.5" fill="#e5e5e5" stroke="#adadad" stroke-width="1" /><text transform="translate(485,214.0) scale(0.88,1)" font-size="12" fill="#000" xml:space="preserve" >C:</text><path d="M538,207.25 L542,211.25 L546,207.25" fill="none" stroke="#444" stroke-width="1"/><text transform="translate(480,236.5) scale(0.87,1)" font-size="12" fill="#000" xml:space="preserve" >File length</text><rect x="480.5" y="251.5" width="37" height="19" fill="#fff" stroke="#b8b8b8" stroke-width="1" /><text transform="translate(483,265.5) scale(0.88,1)" font-size="12" fill="#000" xml:space="preserve" >500</text><rect x="518.0" y="252.5" width="17.5" height="18.5" fill="#f0f0f0" stroke="#c8c8c8" stroke-width="1" /><rect x="518.5" y="261.25" width="16.5" height="0.8" fill="#c8c8c8" /><path d="M523.25,258.75 L526.25,255.75 L529.25,258.75 Z M523.25,264.25 L526.25,267.25 L529.25,264.25 Z" fill="#303030"/><text transform="translate(537,266.5) scale(0.88,1)" font-size="12" fill="#000" xml:space="preserve" >MB</text><text transform="translate(480,298.5) scale(0.87,1)" font-size="12" fill="#000" xml:space="preserve" >Data pattern</text><rect x="480.5" y="307.5" width="74" height="20.5" fill="#e5e5e5" stroke="#adadad" stroke-width="1" /><text transform="translate(485,322.0) scale(0.88,1)" font-size="12" fill="#000" xml:space="preserve" >Zero</text><path d="M538,315.25 L542,319.25 L546,315.25" fill="none" stroke="#444" stroke-width="1"/><text transform="translate(481.7,408.5) scale(0.87,1)" font-size="12" fill="#000" xml:space="preserve" >File length</text><rect x="480.5" y="420.5" width="74" height="20.5" fill="#e5e5e5" stroke="#adadad" stroke-width="1" /><text transform="translate(485,435.0) scale(0.88,1)" font-size="12" fill="#000" xml:space="preserve" >64 MB</text><path d="M538,428.25 L542,432.25 L546,428.25" fill="none" stroke="#444" stroke-width="1"/><text transform="translate(481.7,462.4) scale(0.88,1)" font-size="12" fill="#000" xml:space="preserve" >Delay</text><rect x="481.5" y="472.5" width="53" height="19" fill="#fff" stroke="#b8b8b8" stroke-width="1" /><text transform="translate(485,486.5) scale(0.88,1)" font-size="12" fill="#000" xml:space="preserve" >0</text><rect x="539.5" y="471.5" width="15" height="20" fill="#f0f0f0" stroke="#c8c8c8" stroke-width="1" /><rect x="540" y="481.0" width="14" height="0.8" fill="#c8c8c8" /><path d="M543.5,478.5 L546.5,475.5 L549.5,478.5 Z M543.5,484.0 L546.5,487.0 L549.5,484.0 Z" fill="#303030"/></g><g transform="translate(6,520)"><rect x="0" y="0" width="578" height="513" fill="#f0f0f0" /><rect x="0" y="0" width="578" height="30" fill="#fff" /><g transform="translate(9,6.5)"><g transform="rotate(50 7.2 7.8)"><rect x="3" y="2" width="8.6" height="11.6" rx="0.8" fill="#1e1e1e"/><circle cx="7.3" cy="6.3" r="3.5" fill="#f2b04a"/><circle cx="7.3" cy="6.3" r="1.1" fill="#8ea0b8"/><rect x="5" y="10.3" width="4.5" height="2.2" fill="#777"/></g></g><text transform="translate(29.5,19) scale(0.972,1)" font-size="12" fill="#7c7c7c" xml:space="preserve" >HD Tune Pro 5.00 - Hard Disk Utility</text><rect x="459" y="14" width="10" height="1" fill="#7a7a7a" /><rect x="504.5" y="9.5" width="9" height="9" fill="none" stroke="#7a7a7a" stroke-width="1" /><path d="M550,9 L560,19 M560,9 L550,19" stroke="#7a7a7a" stroke-width="1"/><rect x="0" y="30" width="578" height="19" fill="#dde4ed" /><text transform="translate(7,44) scale(0.9,1)" font-size="12" fill="#222" xml:space="preserve" >File</text><rect x="7" y="45" width="6" height="1" fill="#222" /><text transform="translate(43,44) scale(0.9,1)" font-size="12" fill="#222" xml:space="preserve" >Help</text><rect x="43" y="45" width="7" height="1" fill="#222" /><rect x="0" y="49" width="578" height="45" fill="url(#tbg)" /><rect x="0" y="94" width="578" height="1.2" fill="#1a1a1a" /><rect x="11.5" y="58.5" width="223" height="20" fill="#e5e5e5" stroke="#adadad" stroke-width="1" /><text transform="translate(15,72.5) scale(0.876,1)" font-size="12" fill="#000" xml:space="preserve" >AMD-RAIDArray 1  (766 gB)</text><path d="M222,67.5 L226,71.5 L230,67.5" fill="none" stroke="#444" stroke-width="1"/><rect x="246.5" y="56.5" width="26" height="25" fill="#e1e1e1" stroke="#adadad" stroke-width="1" /><g transform="translate(252,61)"><rect x="5.5" y="1" width="4" height="12" rx="2" fill="#fff" stroke="#555" stroke-width="0.8"/><rect x="6.3" y="2" width="2.4" height="4" fill="#30d0f0"/><rect x="6.3" y="6" width="2.4" height="7" fill="#e01010"/><circle cx="7.5" cy="14.5" r="3" fill="#e01010" stroke="#555" stroke-width="0.8"/></g><text transform="translate(276,73) scale(0.95,1)" font-size="12" font-weight="bold" fill="#000" xml:space="preserve" >– °C</text><rect x="348.5" y="56.5" width="26" height="25" fill="#e1e1e1" stroke="#adadad" stroke-width="1" /><g transform="translate(353,61)"><g filter="url(#sh)"><path d="M1,1 H7 L9,3 V12 H1 Z" fill="#fff" stroke="#000" stroke-width="1"/><path d="M6,4 H12 L14,6 V15 H6 Z" fill="#fff" stroke="#000" stroke-width="1"/><path d="M2.5,5 H7 M2.5,7 H7 M2.5,9 H7 M7.5,8 H12.5 M7.5,10 H12.5 M7.5,12 H12.5" stroke="#2060e0" stroke-width="1"/></g></g><rect x="378.5" y="56.5" width="26" height="25" fill="#e1e1e1" stroke="#adadad" stroke-width="1" /><g transform="translate(383,61)"><g filter="url(#sh)"><path d="M1,1 H7 L9,3 V12 H1 Z" fill="#fff" stroke="#000" stroke-width="1"/><path d="M6,4 H12 L14,6 V15 H6 Z" fill="#fff" stroke="#000" stroke-width="1"/><rect x="2.5" y="4" width="4" height="5" fill="#30c060"/><rect x="3.5" y="5" width="2" height="2" fill="#e03030"/><rect x="7.5" y="8" width="5" height="5" fill="#30c060"/><rect x="9" y="9.5" width="2" height="2" fill="#e03030"/></g></g><rect x="408.5" y="56.5" width="26" height="25" fill="#e1e1e1" stroke="#adadad" stroke-width="1" /><g transform="translate(413,61)"><g filter="url(#sh)"><path d="M1,1 H14 L15,2 V15 H1 Z" fill="#2040c0" stroke="#000" stroke-width="1"/><rect x="3.5" y="1.5" width="9" height="6" fill="#d8d8d8"/><path d="M4.5,3 H11.5 M4.5,5 H11.5" stroke="#999" stroke-width="0.8"/><rect x="4.5" y="10" width="7" height="5" fill="#333"/><rect x="9" y="11" width="1.5" height="3" fill="#ddd"/></g></g><rect x="438.5" y="56.5" width="26" height="25" fill="#e1e1e1" stroke="#adadad" stroke-width="1" /><g transform="translate(443,61)"><g filter="url(#sh)"><ellipse cx="6" cy="6" rx="3.6" ry="4.2" transform="rotate(-40 6 6)" fill="none" stroke="#000" stroke-width="3.4"/><ellipse cx="6" cy="6" rx="3.6" ry="4.2" transform="rotate(-40 6 6)" fill="none" stroke="#e8d020" stroke-width="1.8"/><ellipse cx="10.5" cy="10.5" rx="3.6" ry="4.2" transform="rotate(-40 10.5 10.5)" fill="none" stroke="#000" stroke-width="3.4"/><ellipse cx="10.5" cy="10.5" rx="3.6" ry="4.2" transform="rotate(-40 10.5 10.5)" fill="none" stroke="#e8d020" stroke-width="1.8"/></g></g><rect x="472.5" y="56.5" width="26" height="25" fill="#e1e1e1" stroke="#adadad" stroke-width="1" /><g transform="translate(476,59.5)"><defs><linearGradient id="dng" x1="0" y1="0" x2="0" y2="1"><stop offset="0" stop-color="#e040e0"/><stop offset="1" stop-color="#9010a0"/></linearGradient></defs><rect x="0" y="0" width="19" height="19" rx="2" fill="url(#dng)"/><path d="M8,3 H11 V10.5 H14.5 L9.5,16 L4.5,10.5 H8 Z" fill="#fff"/></g><rect x="514.5" y="56.5" width="51" height="25" fill="#e1e1e1" stroke="#adadad" stroke-width="1" /><text transform="translate(540,73) scale(0.9,1)" font-size="12" text-anchor="middle" fill="#000" xml:space="preserve" >Exit</text><rect x="11.5" y="138.5" width="554" height="371" fill="#fff" stroke="#d9d9d9" stroke-width="1" /><rect x="13.5" y="98.5" width="106" height="20" fill="#f0f0f0" stroke="#d9d9d9" stroke-width="1" /><g transform="translate(27,100)"><g filter="url(#sh)"><path d="M6,1.5 H10 L11.5,3 V7 L10.5,10.5 H5.5 L4.5,7 V3 Z" fill="#f0e800" stroke="#000" stroke-width="1.3"/><ellipse cx="8" cy="13.8" rx="2.2" ry="1.6" fill="#b8a020" stroke="#000" stroke-width="1.2"/></g></g><text transform="translate(50.6,113) scale(0.87,1)" font-size="12" fill="#000" xml:space="preserve" >Benchmark</text><rect x="119.5" y="98.5" width="70" height="20" fill="#f0f0f0" stroke="#d9d9d9" stroke-width="1" /><g transform="translate(133,100)"><g filter="url(#sh)"><ellipse cx="8" cy="2.8" rx="2.3" ry="1.9" fill="#20c8f8" stroke="#000" stroke-width="1.1"/><path d="M4.5,6 H9.5 V13.5 H11 V15 H3.5 V13.5 L5.5,12 V7.5 H4.5 Z" fill="#1060f0" stroke="#000" stroke-width="1.1"/></g></g><text transform="translate(156.6,113) scale(0.87,1)" font-size="12" fill="#000" xml:space="preserve" >Info</text><rect x="189.5" y="98.5" width="82" height="20" fill="#f0f0f0" stroke="#d9d9d9" stroke-width="1" /><g transform="translate(203,100)"><g filter="url(#sh)"><path d="M6,1 H10 V6 H15 V10 H10 V15 H6 V10 H1 V6 H6 Z" fill="#f02020" stroke="#000" stroke-width="1.2"/></g></g><text transform="translate(226.6,113) scale(0.87,1)" font-size="12" fill="#000" xml:space="preserve" >Health</text><rect x="271.5" y="98.5" width="102" height="20" fill="#f0f0f0" stroke="#d9d9d9" stroke-width="1" /><g transform="translate(285,100)"><g filter="url(#sh)"><path d="M10,10 L15,15" stroke="#000" stroke-width="4" stroke-linecap="round"/><path d="M10,10 L14.5,14.5" stroke="#1020d0" stroke-width="2" stroke-linecap="round"/><path d="M3.5,0.8 H8.5 L11.2,3.5 V8.5 L8.5,11.2 H3.5 L0.8,8.5 V3.5 Z" fill="#40e040" stroke="#000" stroke-width="1.2"/></g></g><text transform="translate(308.6,113) scale(0.87,1)" font-size="12" fill="#000" xml:space="preserve" >Error Scan</text><rect x="373.5" y="98.5" width="114" height="20" fill="#f0f0f0" stroke="#d9d9d9" stroke-width="1" /><g transform="translate(387,100)"><g filter="url(#sh)"><path d="M1,3 L2,1.5 H5 L6,3 H11 V5 H1 Z" fill="#f8e040" stroke="#000" stroke-width="1.1"/><path d="M1,3 V15 H3 V5 H13 V15 H3" fill="#e8b800" stroke="#000" stroke-width="1.1"/><rect x="3" y="5" width="10" height="10" fill="#e0b010" stroke="#000" stroke-width="1.1"/></g></g><text transform="translate(410.6,113) scale(0.87,1)" font-size="12" fill="#000" xml:space="preserve" >Folder Usage</text><rect x="487.5" y="98.5" width="77" height="20" fill="#f0f0f0" stroke="#d9d9d9" stroke-width="1" /><g transform="translate(501,100)"><defs><linearGradient id="trg" x1="0" x2="1"><stop offset="0" stop-color="#888"/><stop offset="0.3" stop-color="#eee"/><stop offset="0.6" stop-color="#777"/><stop offset="1" stop-color="#222"/></linearGradient></defs><g filter="url(#sh)"><path d="M1,2.5 H5.5 V1 H9.5 V2.5 H14 V4.5 H1 Z" fill="#aaa" stroke="#000" stroke-width="1.1"/><path d="M2,4.5 H13 V15 H2 Z" fill="url(#trg)" stroke="#000" stroke-width="1.1"/></g></g><text transform="translate(524.6,113) scale(0.87,1)" font-size="12" fill="#000" xml:space="preserve" >Erase</text><rect x="13.5" y="118.5" width="127" height="20" fill="#f0f0f0" stroke="#d9d9d9" stroke-width="1" /><g transform="translate(29,119)"><g filter="url(#sh)"><path d="M0.5,0.5 H10.5 L13.5,3.5 V15.5 H0.5 Z" fill="#e6e6e6" stroke="#000" stroke-width="1.2"/><path d="M5,2.5 H8.5 L9.5,4 V7 L8.5,9.5 H5 L4,7 V4 Z" fill="#d030d0" stroke="#000" stroke-width="1"/><ellipse cx="6.8" cy="12.5" rx="1.7" ry="1.2" fill="#c030c0" stroke="#000" stroke-width="0.9"/></g></g><text transform="translate(52,133) scale(0.87,1)" font-size="12" fill="#000" xml:space="preserve" >File Benchmark</text><rect x="140.5" y="118.5" width="113" height="20" fill="#f0f0f0" stroke="#d9d9d9" stroke-width="1" /><g transform="translate(156,119)"><g filter="url(#sh)"><rect x="0.5" y="0.5" width="15" height="15" fill="#fffbc0" stroke="#000" stroke-width="1.2"/><path d="M1,6 H3 V15 H1 Z M5,9 H7 V15 H5 Z M9,6 H12 V15 H9 Z M14,8 H15 V15 H14Z" fill="#00ee00"/><path d="M3,9 H5 V15 H3 Z M7,5 H9 V15 H7 Z M12,8 H14 V15 H12 Z" fill="#4040ff"/></g></g><text transform="translate(179,133) scale(0.87,1)" font-size="12" fill="#000" xml:space="preserve" >Disk monitor</text><rect x="253.5" y="118.5" width="77" height="20" fill="#f0f0f0" stroke="#d9d9d9" stroke-width="1" /><g transform="translate(269,119)"><g filter="url(#sh)"><path d="M0.8,6 L4,4.5 L9.5,0.8 V15 L4,11 L0.8,10 Z" fill="#f0e800" stroke="#000" stroke-width="1.2"/><path d="M11.5,5.5 Q13,8 11.5,10.5 M13,3.5 Q16,8 13,12.5" fill="none" stroke="#000" stroke-width="1.1"/></g></g><text transform="translate(292,133) scale(0.87,1)" font-size="12" fill="#000" xml:space="preserve" >AAM</text><rect x="462.5" y="118.5" width="102" height="20" fill="#f0f0f0" stroke="#d9d9d9" stroke-width="1" /><g transform="translate(478,119)"><g filter="url(#sh)"><rect x="0.5" y="0.5" width="15" height="15" fill="#fff8c0" stroke="#000" stroke-width="1.2"/><path d="M1,7 H3 V15 H1 Z M5,10 H6 V15 H5 Z" fill="#00ee00"/><path d="M3,9 H5 V15 H3Z" fill="#4040ff"/><rect x="6.5" y="6.5" width="9" height="9" fill="#f4f4f4" stroke="#000" stroke-width="1"/><rect x="7" y="7" width="8" height="1.5" fill="#1020e0"/><circle cx="8.5" cy="10" r="0.7" fill="#f00"/><circle cx="10.5" cy="10" r="0.7" fill="#22f"/><circle cx="12.5" cy="10" r="0.7" fill="#f00"/><circle cx="8.5" cy="12" r="0.7" fill="#0a0"/><circle cx="10.5" cy="12" r="0.7" fill="#f00"/><circle cx="12.5" cy="12" r="0.7" fill="#f00"/><circle cx="8.5" cy="14" r="0.7" fill="#f00"/><circle cx="10.5" cy="14" r="0.7" fill="#f00"/><circle cx="12.5" cy="14" r="0.7" fill="#22f"/></g></g><text transform="translate(501,133) scale(0.87,1)" font-size="12" fill="#000" xml:space="preserve" >Extra tests</text><rect x="328" y="116" width="136" height="23" fill="#fff" /><path d="M328.5,139 V116.5 H463.5 V139" fill="none" stroke="#d9d9d9" stroke-width="1"/><g transform="translate(344.5,119)"><g filter="url(#sh)"><rect x="0.5" y="0.5" width="15" height="15" fill="#fff8c0" stroke="#000" stroke-width="1.2"/><circle cx="3.5" cy="7" r="0.8" fill="#2020ff"/><circle cx="6" cy="5.5" r="0.8" fill="#2020ff"/><circle cx="8" cy="6.5" r="0.8" fill="#2020ff"/><circle cx="10" cy="5.5" r="0.8" fill="#2020ff"/><circle cx="12" cy="3.5" r="0.8" fill="#2020ff"/><circle cx="12" cy="5" r="0.8" fill="#2020ff"/><circle cx="4.5" cy="9" r="0.8" fill="#2020ff"/><circle cx="4" cy="9.5" r="0.8" fill="#ff2020"/><circle cx="4" cy="11" r="0.8" fill="#ff2020"/><circle cx="2.5" cy="13" r="0.8" fill="#ff2020"/><circle cx="8" cy="8" r="0.8" fill="#ff2020"/><circle cx="8" cy="11" r="0.8" fill="#ff2020"/><circle cx="10" cy="10" r="0.8" fill="#ff2020"/><circle cx="12" cy="8" r="0.8" fill="#ff2020"/><circle cx="13" cy="10" r="0.8" fill="#ff2020"/></g></g><text transform="translate(368.3,131) scale(0.87,1)" font-size="12" fill="#000" xml:space="preserve" >Random Access</text><defs><linearGradient id="cbg3" x1="0" y1="0" x2="0" y2="1"><stop offset="0" stop-color="#000"/><stop offset="1" stop-color="#3e3e3e"/></linearGradient></defs><rect x="48" y="152" width="389.8" height="218" fill="#000" /><rect x="50" y="154" width="386" height="213.6" fill="url(#cbg3)" /><rect x="50" y="154" width="1" height="214" fill="#7a7a7a" /><rect x="50" y="370" width="1" height="3" fill="#555" /><rect x="69" y="154" width="1" height="214" fill="#4c4c4c" /><rect x="88" y="154" width="1" height="214" fill="#7a7a7a" /><rect x="88" y="370" width="1" height="3" fill="#555" /><rect x="108" y="154" width="1" height="214" fill="#4c4c4c" /><rect x="127" y="154" width="1" height="214" fill="#7a7a7a" /><rect x="127" y="370" width="1" height="3" fill="#555" /><rect x="146" y="154" width="1" height="214" fill="#4c4c4c" /><rect x="166" y="154" width="1" height="214" fill="#7a7a7a" /><rect x="166" y="370" width="1" height="3" fill="#555" /><rect x="185" y="154" width="1" height="214" fill="#4c4c4c" /><rect x="204" y="154" width="1" height="214" fill="#7a7a7a" /><rect x="204" y="370" width="1" height="3" fill="#555" /><rect x="224" y="154" width="1" height="214" fill="#4c4c4c" /><rect x="243" y="154" width="1" height="214" fill="#7a7a7a" /><rect x="243" y="370" width="1" height="3" fill="#555" /><rect x="262" y="154" width="1" height="214" fill="#4c4c4c" /><rect x="282" y="154" width="1" height="214" fill="#7a7a7a" /><rect x="282" y="370" width="1" height="3" fill="#555" /><rect x="301" y="154" width="1" height="214" fill="#4c4c4c" /><rect x="320" y="154" width="1" height="214" fill="#7a7a7a" /><rect x="320" y="370" width="1" height="3" fill="#555" /><rect x="339" y="154" width="1" height="214" fill="#4c4c4c" /><rect x="359" y="154" width="1" height="214" fill="#7a7a7a" /><rect x="359" y="370" width="1" height="3" fill="#555" /><rect x="378" y="154" width="1" height="214" fill="#4c4c4c" /><rect x="397" y="154" width="1" height="214" fill="#7a7a7a" /><rect x="397" y="370" width="1" height="3" fill="#555" /><rect x="417" y="154" width="1" height="214" fill="#4c4c4c" /><rect x="436" y="154" width="1" height="214" fill="#7a7a7a" /><rect x="436" y="370" width="1" height="3" fill="#555" /><rect x="45" y="155" width="3" height="1" fill="#555" /><rect x="50" y="165" width="386" height="1" fill="#4c4c4c" /><rect x="45" y="165" width="3" height="1" fill="#555" /><rect x="50" y="176" width="386" height="1" fill="#7a7a7a" /><rect x="45" y="176" width="3" height="1" fill="#555" /><rect x="50" y="187" width="386" height="1" fill="#4c4c4c" /><rect x="45" y="187" width="3" height="1" fill="#555" /><rect x="50" y="197" width="386" height="1" fill="#7a7a7a" /><rect x="45" y="197" width="3" height="1" fill="#555" /><rect x="50" y="208" width="386" height="1" fill="#4c4c4c" /><rect x="45" y="208" width="3" height="1" fill="#555" /><rect x="50" y="219" width="386" height="1" fill="#7a7a7a" /><rect x="45" y="219" width="3" height="1" fill="#555" /><rect x="50" y="229" width="386" height="1" fill="#4c4c4c" /><rect x="45" y="229" width="3" height="1" fill="#555" /><rect x="50" y="240" width="386" height="1" fill="#7a7a7a" /><rect x="45" y="240" width="3" height="1" fill="#555" /><rect x="50" y="251" width="386" height="1" fill="#4c4c4c" /><rect x="45" y="251" width="3" height="1" fill="#555" /><rect x="50" y="262" width="386" height="1" fill="#7a7a7a" /><rect x="45" y="262" width="3" height="1" fill="#555" /><rect x="50" y="272" width="386" height="1" fill="#4c4c4c" /><rect x="45" y="272" width="3" height="1" fill="#555" /><rect x="50" y="283" width="386" height="1" fill="#7a7a7a" /><rect x="45" y="283" width="3" height="1" fill="#555" /><rect x="50" y="294" width="386" height="1" fill="#4c4c4c" /><rect x="45" y="294" width="3" height="1" fill="#555" /><rect x="50" y="304" width="386" height="1" fill="#7a7a7a" /><rect x="45" y="304" width="3" height="1" fill="#555" /><rect x="50" y="315" width="386" height="1" fill="#4c4c4c" /><rect x="45" y="315" width="3" height="1" fill="#555" /><rect x="50" y="326" width="386" height="1" fill="#7a7a7a" /><rect x="45" y="326" width="3" height="1" fill="#555" /><rect x="50" y="336" width="386" height="1" fill="#4c4c4c" /><rect x="45" y="336" width="3" height="1" fill="#555" /><rect x="50" y="347" width="386" height="1" fill="#7a7a7a" /><rect x="45" y="347" width="3" height="1" fill="#555" /><rect x="50" y="358" width="386" height="1" fill="#4c4c4c" /><rect x="45" y="358" width="3" height="1" fill="#555" /><text transform="translate(46.5,159.3) scale(0.88,1)" font-size="12" text-anchor="end" fill="#000" xml:space="preserve" >5.00</text><text transform="translate(46.5,180.7) scale(0.88,1)" font-size="12" text-anchor="end" fill="#000" xml:space="preserve" >4.50</text><text transform="translate(46.5,202.1) scale(0.88,1)" font-size="12" text-anchor="end" fill="#000" xml:space="preserve" >4.00</text><text transform="translate(46.5,223.5) scale(0.88,1)" font-size="12" text-anchor="end" fill="#000" xml:space="preserve" >3.50</text><text transform="translate(46.5,244.9) scale(0.88,1)" font-size="12" text-anchor="end" fill="#000" xml:space="preserve" >3.00</text><text transform="translate(46.5,266.3) scale(0.88,1)" font-size="12" text-anchor="end" fill="#000" xml:space="preserve" >2.50</text><text transform="translate(46.5,287.7) scale(0.88,1)" font-size="12" text-anchor="end" fill="#000" xml:space="preserve" >2.00</text><text transform="translate(46.5,309.1) scale(0.88,1)" font-size="12" text-anchor="end" fill="#000" xml:space="preserve" >1.50</text><text transform="translate(46.5,330.5) scale(0.88,1)" font-size="12" text-anchor="end" fill="#000" xml:space="preserve" >1.00</text><text transform="translate(46.5,351.9) scale(0.88,1)" font-size="12" text-anchor="end" fill="#000" xml:space="preserve" >0.500</text><text transform="translate(50.4,150.5) scale(0.88,1)" font-size="12" fill="#000" xml:space="preserve" >ms</text><text transform="translate(50.3,383) scale(0.88,1)" font-size="12" text-anchor="middle" fill="#000" xml:space="preserve" >0</text><text transform="translate(88.92,383) scale(0.88,1)" font-size="12" text-anchor="middle" fill="#000" xml:space="preserve" >76</text><text transform="translate(127.54,383) scale(0.88,1)" font-size="12" text-anchor="middle" fill="#000" xml:space="preserve" >153</text><text transform="translate(166.16,383) scale(0.88,1)" font-size="12" text-anchor="middle" fill="#000" xml:space="preserve" >229</text><text transform="translate(204.78,383) scale(0.88,1)" font-size="12" text-anchor="middle" fill="#000" xml:space="preserve" >306</text><text transform="translate(243.4,383) scale(0.88,1)" font-size="12" text-anchor="middle" fill="#000" xml:space="preserve" >383</text><text transform="translate(282.02,383) scale(0.88,1)" font-size="12" text-anchor="middle" fill="#000" xml:space="preserve" >459</text><text transform="translate(320.64,383) scale(0.88,1)" font-size="12" text-anchor="middle" fill="#000" xml:space="preserve" >536</text><text transform="translate(359.26,383) scale(0.88,1)" font-size="12" text-anchor="middle" fill="#000" xml:space="preserve" >612</text><text transform="translate(397.88,383) scale(0.88,1)" font-size="12" text-anchor="middle" fill="#000" xml:space="preserve" >689</text><text transform="translate(435.0,383) scale(0.88,1)" font-size="12" text-anchor="middle" fill="#000" xml:space="preserve" >766gB</text><path d="M133 357.5h1M142 357.5h1M256 357.5h1M121 357.5h1M296 355.5h1M347 356.5h1M277 356.5h1M226 356.5h1M234 357.5h1M339 358.5h1M122 357.5h1M130 357.5h1M72 355.5h1M215 356.5h1M117 358.5h1M204 355.5h1M57 357.5h1M304 355.5h1M147 356.5h1M293 357.5h1M262 357.5h1M365 356.5h1M116 356.5h1M199 356.5h1M234 358.5h1M273 356.5h1M201 355.5h1M311 356.5h1M64 356.5h1M136 355.5h1M150 356.5h1M240 355.5h1M105 358.5h1M373 358.5h1M243 355.5h1M58 356.5h1M86 355.5h1M113 357.5h1M217 357.5h1M135 357.5h1M127 358.5h1M254 355.5h1M241 356.5h1M57 356.5h1M88 357.5h1M363 357.5h1M283 357.5h1M284 356.5h1M133 356.5h1M213 355.5h1M69 356.5h1M103 355.5h1M52 357.5h1M277 356.5h1M259 357.5h1M295 355.5h1M285 357.5h1M286 357.5h1M188 357.5h1M207 356.5h1M162 358.5h1M112 355.5h1M261 356.5h1M166 357.5h1M102 355.5h1M216 356.5h1M153 355.5h1M221 356.5h1M187 356.5h1M127 356.5h1M199 355.5h1M142 356.5h1M153 358.5h1M251 355.5h1M256 356.5h1M66 357.5h1M234 356.5h1M174 357.5h1M291 356.5h1M146 355.5h1M233 357.5h1M284 358.5h1M197 355.5h1M158 355.5h1M54 357.5h1M329 357.5h1M257 355.5h1M140 356.5h1M278 357.5h1M119 358.5h1M339 358.5h1M96 355.5h1M177 356.5h1M244 356.5h1M290 356.5h1M298 356.5h1M267 355.5h1M282 355.5h1M356 358.5h1M178 357.5h1M148 357.5h1M160 356.5h1M94 357.5h1M107 358.5h1M263 356.5h1M131 358.5h1M288 358.5h1M120 355.5h1M304 358.5h1M107 355.5h1M286 355.5h1M180 357.5h1M246 358.5h1M94 355.5h1M133 356.5h1M333 356.5h1M173 357.5h1M160 357.5h1M76 356.5h1M184 355.5h1M93 356.5h1M131 357.5h1M277 355.5h1M193 355.5h1M292 357.5h1M210 358.5h1M70 356.5h1M86 356.5h1M64 357.5h1M279 356.5h1M169 358.5h1M263 358.5h1M239 358.5h1M68 355.5h1M141 357.5h1M168 356.5h1M208 358.5h1M292 357.5h1M354 355.5h1M67 356.5h1M228 356.5h1M247 356.5h1M218 355.5h1M269 355.5h1M68 358.5h1M335 357.5h1M74 355.5h1M356 356.5h1M162 356.5h1M119 356.5h1M320 356.5h1M90 355.5h1M200 355.5h1M223 356.5h1M74 358.5h1M121 356.5h1M328 355.5h1M370 355.5h1M122 357.5h1M363 355.5h1M89 356.5h1M93 356.5h1M254 357.5h1M195 357.5h1M247 356.5h1M141 358.5h1M278 355.5h1M56 356.5h1M144 355.5h1M252 355.5h1M205 355.5h1M245 358.5h1M114 355.5h1M128 357.5h1M258 357.5h1M181 355.5h1M238 356.5h1M229 357.5h1M206 355.5h1M172 356.5h1M200 355.5h1M194 356.5h1M215 357.5h1M168 356.5h1M176 355.5h1M166 355.5h1M93 355.5h1M122 357.5h1M161 356.5h1M96 357.5h1M263 356.5h1M72 356.5h1M263 357.5h1M347 358.5h1M209 355.5h1M223 357.5h1M349 355.5h1M58 358.5h1M148 357.5h1M175 355.5h1M107 357.5h1M207 355.5h1M131 357.5h1M149 356.5h1M226 355.5h1M310 356.5h1M226 357.5h1M160 355.5h1M65 357.5h1M311 358.5h1M182 357.5h1M150 356.5h1M69 357.5h1M304 358.5h1M92 356.5h1M56 355.5h1M317 357.5h1M66 357.5h1M248 355.5h1M233 357.5h1M326 357.5h1M216 357.5h1M316 355.5h1M320 355.5h1M93 356.5h1M236 357.5h1M208 356.5h1M204 356.5h1M260 357.5h1M268 355.5h1M116 356.5h1M339 355.5h1M291 355.5h1M135 356.5h1M241 358.5h1M135 356.5h1M111 357.5h1M123 355.5h1M181 357.5h1M89 355.5h1M196 358.5h1M333 358.5h1M243 356.5h1M255 358.5h1M324 355.5h1M284 358.5h1M85 357.5h1M303 355.5h1M115 358.5h1M207 358.5h1M112 357.5h1M162 356.5h1M239 356.5h1M142 357.5h1M126 356.5h1M241 356.5h1M212 355.5h1M152 357.5h1M78 358.5h1M157 356.5h1M186 355.5h1M273 355.5h1M107 357.5h1M204 357.5h1M287 357.5h1M309 357.5h1M188 358.5h1M232 358.5h1M89 356.5h1M241 357.5h1M233 356.5h1M267 356.5h1M295 357.5h1M286 355.5h1M218 357.5h1M358 355.5h1M266 356.5h1M67 357.5h1M86 356.5h1M151 357.5h1M157 355.5h1M327 358.5h1M189 356.5h1M76 357.5h1M170 357.5h1M132 355.5h1M105 357.5h1M124 356.5h1M221 357.5h1M214 358.5h1M294 358.5h1M294 356.5h1M248 357.5h1M83 355.5h1M141 355.5h1M113 358.5h1M366 355.5h1M107 357.5h1M322 356.5h1M319 357.5h1M238 355.5h1M207 358.5h1M67 357.5h1M153 356.5h1M122 357.5h1M268 356.5h1M83 358.5h1M174 355.5h1M129 358.5h1M136 355.5h1M193 356.5h1M52 357.5h1M161 357.5h1M192 358.5h1M248 357.5h1M75 357.5h1M304 357.5h1M311 355.5h1M81 355.5h1M221 356.5h1M165 356.5h1M87 358.5h1M175 355.5h1M74 357.5h1M351 358.5h1M365 357.5h1M79 357.5h1M319 356.5h1M96 357.5h1M63 358.5h1M245 355.5h1M215 357.5h1M118 357.5h1M266 355.5h1M299 355.5h1M239 356.5h1M156 356.5h1M57 356.5h1M176 355.5h1M190 357.5h1M216 355.5h1M93 355.5h1M89 356.5h1M216 356.5h1M69 357.5h1M58 358.5h1M153 355.5h1M71 356.5h1M65 357.5h1M256 356.5h1M66 358.5h1M326 358.5h1M58 356.5h1M108 357.5h1M301 357.5h1M267 355.5h1M191 357.5h1M94 356.5h1M252 356.5h1M362 358.5h1M239 358.5h1M185 356.5h1M208 357.5h1M354 355.5h1M129 356.5h1M56 355.5h1M228 357.5h1M54 356.5h1M308 358.5h1M115 358.5h1M271 356.5h1M352 357.5h1M101 355.5h1M178 355.5h1M222 356.5h1M110 355.5h1M84 357.5h1M237 357.5h1M100 357.5h1M179 358.5h1M178 355.5h1M263 357.5h1M200 357.5h1M68 356.5h1M91 357.5h1M130 355.5h1M288 358.5h1M345 355.5h1M264 357.5h1M154 357.5h1M245 355.5h1M281 358.5h1M322 355.5h1M59 357.5h1M80 356.5h1M204 356.5h1M275 357.5h1M207 357.5h1M56 356.5h1M258 356.5h1M186 358.5h1M149 355.5h1M158 356.5h1M102 356.5h1M201 357.5h1M258 356.5h1M217 356.5h1M324 355.5h1M251 356.5h1M314 355.5h1M173 355.5h1M259 356.5h1M326 355.5h1M235 355.5h1M270 356.5h1M213 356.5h1M303 358.5h1M165 356.5h1M156 357.5h1M283 356.5h1M314 358.5h1M248 356.5h1M283 356.5h1M98 357.5h1M93 358.5h1M194 355.5h1M369 356.5h1M148 356.5h1M261 357.5h1M213 357.5h1M162 356.5h1M232 356.5h1M106 355.5h1M169 355.5h1M366 357.5h1M235 358.5h1M163 357.5h1M211 357.5h1M68 356.5h1M278 357.5h1M100 358.5h1M307 357.5h1M90 357.5h1M225 356.5h1M250 356.5h1M113 358.5h1M93 356.5h1M316 358.5h1M161 355.5h1M301 355.5h1M348 356.5h1M329 355.5h1M165 357.5h1M300 355.5h1M274 357.5h1M76 356.5h1M316 356.5h1M100 356.5h1M153 355.5h1M104 355.5h1M321 358.5h1M231 356.5h1M277 355.5h1M258 356.5h1M191 355.5h1M86 357.5h1M158 356.5h1M133 356.5h1M60 355.5h1M164 357.5h1M258 355.5h1M101 356.5h1M147 356.5h1M340 355.5h1M77 357.5h1M278 358.5h1M210 355.5h1M216 357.5h1M308 355.5h1M351 358.5h1M55 355.5h1M114 357.5h1M136 357.5h1M236 357.5h1M262 356.5h1M100 357.5h1M155 356.5h1M246 356.5h1M164 357.5h1M99 355.5h1M280 356.5h1M65 355.5h1M217 355.5h1M338 357.5h1M254 358.5h1M131 356.5h1M79 357.5h1M215 358.5h1M204 357.5h1M185 355.5h1M116 356.5h1M200 358.5h1M230 357.5h1M255 355.5h1M334 358.5h1M286 355.5h1M306 357.5h1M110 355.5h1M216 356.5h1M85 356.5h1M218 355.5h1M53 355.5h1M130 357.5h1M258 358.5h1M140 358.5h1M371 355.5h1M310 358.5h1M118 357.5h1M202 355.5h1M280 357.5h1M252 357.5h1M200 357.5h1M345 355.5h1M204 357.5h1M105 357.5h1M89 356.5h1M124 357.5h1M131 355.5h1M298 356.5h1M165 356.5h1M223 358.5h1M67 355.5h1M277 355.5h1M147 358.5h1M122 356.5h1M106 358.5h1M60 356.5h1M89 356.5h1M55 357.5h1M104 357.5h1M296 355.5h1M332 356.5h1M137 357.5h1M74 356.5h1M344 356.5h1M123 355.5h1M108 357.5h1M193 355.5h1M247 358.5h1M128 358.5h1M58 356.5h1M259 355.5h1M335 356.5h1M273 355.5h1M61 358.5h1M103 356.5h1M345 355.5h1M118 355.5h1M185 357.5h1M299 355.5h1M353 357.5h1M116 356.5h1M146 358.5h1M97 358.5h1M334 357.5h1M89 355.5h1M100 357.5h1M201 355.5h1M352 355.5h1M209 357.5h1M264 355.5h1M229 357.5h1M131 356.5h1M280 357.5h1M237 355.5h1M233 358.5h1M124 356.5h1M332 355.5h1M56 357.5h1M248 357.5h1M148 358.5h1M138 358.5h1M51 355.5h1M329 357.5h1M132 357.5h1M327 357.5h1M58 358.5h1M345 356.5h1M322 358.5h1M296 356.5h1M257 356.5h1M220 358.5h1M197 355.5h1M297 355.5h1M69 357.5h1M257 355.5h1M310 355.5h1M205 356.5h1M283 357.5h1M63 355.5h1M111 355.5h1M168 355.5h1M111 355.5h1M367 356.5h1M321 358.5h1M198 356.5h1M309 358.5h1M253 357.5h1M65 358.5h1M183 357.5h1M309 357.5h1M134 356.5h1M324 355.5h1M193 355.5h1M268 357.5h1M172 355.5h1M58 356.5h1M237 357.5h1M306 357.5h1M307 358.5h1M215 357.5h1M175 355.5h1M350 358.5h1M203 356.5h1M210 355.5h1M253 356.5h1M88 355.5h1M284 355.5h1M210 356.5h1M73 357.5h1M373 356.5h1M78 357.5h1M255 356.5h1M280 356.5h1M351 356.5h1M140 358.5h1M186 358.5h1M299 357.5h1M342 357.5h1M62 355.5h1M97 357.5h1M324 358.5h1M132 356.5h1M123 358.5h1M318 355.5h1M244 357.5h1M63 356.5h1M241 358.5h1M289 357.5h1M201 357.5h1M237 355.5h1M185 357.5h1M67 355.5h1M155 356.5h1M117 357.5h1M173 356.5h1M175 356.5h1M61 355.5h1M314 357.5h1M161 357.5h1M138 355.5h1M185 357.5h1M97 355.5h1M230 356.5h1M234 355.5h1M198 355.5h1M195 356.5h1M274 356.5h1M320 358.5h1M186 355.5h1M371 355.5h1M94 355.5h1M236 357.5h1M332 356.5h1M183 356.5h1M346 356.5h1M337 356.5h1M111 356.5h1M54 356.5h1M162 358.5h1M331 355.5h1M130 355.5h1M69 356.5h1M254 358.5h1M292 356.5h1M113 358.5h1M67 355.5h1M296 358.5h1M175 355.5h1M216 357.5h1M245 355.5h1M341 355.5h1M69 358.5h1M121 357.5h1M68 355.5h1M55 356.5h1M60 356.5h1M303 356.5h1M173 356.5h1M148 355.5h1M298 358.5h1M212 356.5h1M116 355.5h1M130 356.5h1M285 357.5h1M157 356.5h1M167 357.5h1M146 355.5h1M270 355.5h1M52 357.5h1M173 358.5h1M267 357.5h1M108 357.5h1M267 356.5h1M362 358.5h1M279 355.5h1M281 356.5h1M100 357.5h1M338 357.5h1M242 356.5h1M66 355.5h1M280 358.5h1M359 357.5h1M266 357.5h1M220 358.5h1M99 357.5h1M83 356.5h1M300 358.5h1M61 356.5h1M235 355.5h1M146 356.5h1M218 358.5h1M250 355.5h1M84 356.5h1M186 355.5h1M328 355.5h1M245 355.5h1M227 357.5h1M297 358.5h1M256 357.5h1M94 355.5h1M64 357.5h1M147 357.5h1M257 357.5h1M63 358.5h1M159 355.5h1M104 356.5h1M309 357.5h1M250 357.5h1M140 355.5h1M155 356.5h1M131 355.5h1M130 357.5h1M251 357.5h1M357 355.5h1M118 357.5h1M228 357.5h1M64 355.5h1M186 357.5h1M185 357.5h1M152 356.5h1M60 355.5h1M136 355.5h1M209 357.5h1M209 358.5h1M285 358.5h1M288 355.5h1M161 356.5h1M148 355.5h1M93 357.5h1M215 356.5h1M122 357.5h1M166 356.5h1M271 356.5h1M363 357.5h1M281 357.5h1M184 357.5h1M308 356.5h1M197 356.5h1M73 358.5h1M107 355.5h1M236 357.5h1M299 357.5h1M244 357.5h1M122 355.5h1M268 357.5h1M195 357.5h1M75 356.5h1M75 356.5h1M280 356.5h1M169 358.5h1M75 355.5h1M325 357.5h1M327 357.5h1M234 357.5h1M177 356.5h1M234 357.5h1M62 356.5h1M228 355.5h1M74 355.5h1M278 355.5h1M152 357.5h1M188 355.5h1M76 357.5h1M289 357.5h1M96 355.5h1M245 356.5h1M281 357.5h1M241 355.5h1M54 356.5h1M112 355.5h1M85 358.5h1M267 355.5h1M216 358.5h1M66 355.5h1M110 355.5h1M90 358.5h1M335 356.5h1M140 355.5h1M281 355.5h1M218 355.5h1M105 357.5h1M371 356.5h1M158 357.5h1M147 357.5h1M238 355.5h1M360 355.5h1M208 362.5h1M178 360.5h1M77 358.5h1M248 360.5h1M138 362.5h1M285 364.5h1M243 358.5h1M226 359.5h1M146 364.5h1M244 365.5h1M302 362.5h1M279 360.5h1M213 364.5h1M165 358.5h1M380 366.5h1M73 361.5h1M195 366.5h1M101 360.5h1M280 360.5h1M239 366.5h1M290 360.5h1M213 360.5h1M110 363.5h1M268 363.5h1M342 363.5h1M354 365.5h1M108 360.5h1M274 362.5h1M370 363.5h1M72 365.5h1M145 366.5h1M295 366.5h1M175 364.5h1M370 361.5h1M328 365.5h1M192 359.5h1M280 366.5h1M94 364.5h1M59 362.5h1M296 361.5h1M347 365.5h1M117 366.5h1M282 360.5h1M170 361.5h1M255 358.5h1M281 361.5h1M90 360.5h1M385 359.5h1M80 362.5h1M260 365.5h1M148 364.5h1M224 358.5h1M62 359.5h1M222 363.5h1M131 365.5h1M188 365.5h1M222 366.5h1M172 358.5h1M240 360.5h1M172 359.5h1M188 364.5h1M268 363.5h1M184 362.5h1M290 361.5h1M166 362.5h1M329 362.5h1M347 360.5h1M236 363.5h1M117 362.5h1M392 365.5h1M160 360.5h1M52 365.5h1M217 358.5h1M275 359.5h1M54 362.5h1M210 359.5h1M159 363.5h1M172 358.5h1M59 358.5h1M267 364.5h1M69 365.5h1M122 362.5h1M95 359.5h1M236 360.5h1M89 358.5h1M118 362.5h1M392 365.5h1M330 364.5h1M356 358.5h1M166 365.5h1M151 364.5h1M217 365.5h1M282 365.5h1M321 365.5h1M378 366.5h1M228 362.5h1M423 365.5h1M109 365.5h1M52 358.5h1M301 359.5h1M255 359.5h1M214 360.5h1M89 361.5h1M274 364.5h1M318 365.5h1M74 366.5h1M290 362.5h1M187 364.5h1M301 363.5h1M334 359.5h1M378 360.5h1M348 364.5h1M237 365.5h1M349 362.5h1M181 365.5h1M338 362.5h1M226 361.5h1M321 362.5h1M53 359.5h1M246 363.5h1M81 363.5h1M274 363.5h1M240 362.5h1M212 358.5h1M73 362.5h1M268 360.5h1M72 360.5h1M145 359.5h1M228 365.5h1M75 360.5h1M293 362.5h1M353 359.5h1M253 362.5h1M133 364.5h1M270 364.5h1M271 363.5h1M323 358.5h1M256 365.5h1M401 366.5h1M202 359.5h1M278 358.5h1M73 361.5h1M300 360.5h1M66 365.5h1M122 365.5h1M251 360.5h1M116 365.5h1M126 362.5h1M288 364.5h1M120 365.5h1M192 362.5h1M311 363.5h1M341 362.5h1M52 362.5h1M266 361.5h1M363 364.5h1M201 362.5h1M137 363.5h1M272 365.5h1M167 361.5h1M178 365.5h1M142 364.5h1M68 363.5h1M260 360.5h1M254 359.5h1M251 359.5h1M102 359.5h1M282 359.5h1M358 365.5h1M331 361.5h1M196 359.5h1M280 360.5h1M381 365.5h1M302 365.5h1M246 360.5h1M296 360.5h1M179 362.5h1M74 359.5h1M310 362.5h1M263 361.5h1M115 366.5h1M284 366.5h1M143 363.5h1M207 361.5h1M233 358.5h1M382 360.5h1M348 362.5h1M229 364.5h1M154 365.5h1M143 366.5h1M356 364.5h1M70 364.5h1M217 362.5h1M267 361.5h1M109 365.5h1M69 364.5h1M170 359.5h1M208 365.5h1M201 366.5h1M81 363.5h1M261 363.5h1M232 358.5h1M64 363.5h1M312 362.5h1M166 366.5h1M122 358.5h1M177 359.5h1M133 363.5h1M145 360.5h1M134 365.5h1M416 361.5h1M112 365.5h1M207 365.5h1M213 360.5h1M193 364.5h1M111 364.5h1M326 366.5h1M193 362.5h1M391 366.5h1M233 361.5h1M215 365.5h1M170 358.5h1M168 361.5h1M223 361.5h1M115 360.5h1M403 360.5h1M149 363.5h1M97 359.5h1M337 365.5h1M328 360.5h1M134 363.5h1M280 360.5h1M241 364.5h1M67 363.5h1M347 361.5h1M247 361.5h1M320 358.5h1M337 361.5h1M219 360.5h1M191 363.5h1M173 364.5h1M100 365.5h1M83 364.5h1M269 363.5h1M131 364.5h1M276 366.5h1M161 366.5h1M343 362.5h1M141 362.5h1M224 363.5h1M142 349.5h1M389 341.5h1M239 347.5h1M110 351.5h1M397 352.5h1M256 325.5h1M266 340.5h1M149 343.5h1M309 351.5h1M109 354.5h1M67 338.5h1M168 334.5h1M305 341.5h1M317 337.5h1M214 343.5h1M104 345.5h1M396 344.5h1M357 350.5h1M164 326.5h1M228 334.5h1M358 350.5h1M185 354.5h1M275 350.5h1M80 353.5h1M346 348.5h1M167 346.5h1M346 345.5h1M178 350.5h1M246 351.5h1M357 334.5h1M75 338.5h1M284 339.5h1M83 339.5h1M293 328.5h1M131 348.5h1M411 347.5h1M268 338.5h1M246 352.5h1M305 340.5h1M396 347.5h1M317 338.5h1M171 344.5h1M369 342.5h1M212 335.5h1M246 335.5h1M408 352.5h1M136 354.5h1M75 350.5h1M325 327.5h1M298 334.5h1M86 345.5h1M221 351.5h1M83 344.5h1M209 327.5h1M108 352.5h1M146 331.5h1M371 328.5h1M193 348.5h1M184 327.5h1M87 340.5h1M81 343.5h1M237 353.5h1M192 352.5h1M154 340.5h1M356 348.5h1M135 329.5h1M345 325.5h1M242 352.5h1M186 335.5h1M373 341.5h1M255 354.5h1M199 344.5h1M160 343.5h1M72 332.5h1M279 340.5h1M273 344.5h1M344 341.5h1M278 335.5h1M320 340.5h1M112 349.5h1M421 351.5h1M180 353.5h1M281 334.5h1M316 353.5h1M262 352.5h1M63 333.5h1M377 330.5h1M60 340.5h1M188 326.5h1M159 351.5h1M374 327.5h1M108 330.5h1M337 346.5h1M387 333.5h1M207 351.5h1M84 334.5h1M347 345.5h1M320 341.5h1M314 353.5h1M99 334.5h1M354 350.5h1M158 353.5h1M305 331.5h1M256 324.5h1M177 325.5h1M71 326.5h1M184 326.5h1M118 325.5h1M233 327.5h1M279 339.5h1M258 349.5h1M423 347.5h1M326 330.5h1M215 343.5h1M342 353.5h1M112 352.5h1M423 337.5h1M293 336.5h1M146 341.5h1M393 345.5h1M398 354.5h1M339 343.5h1M202 352.5h1M174 327.5h1M364 324.5h1M329 275.5h1" stroke="#1a70f0" stroke-width="1"/><path d="M290 364.5h1M405 360.5h1M397 360.5h1M146 361.5h1M56 359.5h1M112 357.5h1M288 356.5h1M386 358.5h1M162 361.5h1M311 365.5h1M394 359.5h1M115 357.5h1M167 356.5h1M311 359.5h1M365 359.5h1M236 357.5h1M425 363.5h1M375 363.5h1M192 356.5h1M69 365.5h1M126 365.5h1M187 363.5h1M92 364.5h1M381 365.5h1M86 362.5h1M171 358.5h1M81 363.5h1M70 361.5h1M207 362.5h1M368 360.5h1M72 356.5h1M241 357.5h1M293 357.5h1M218 364.5h1M164 365.5h1M225 363.5h1M235 360.5h1M107 365.5h1M243 357.5h1M156 364.5h1M190 363.5h1M318 363.5h1M191 359.5h1M238 363.5h1M164 362.5h1M274 361.5h1M147 360.5h1M357 362.5h1M185 364.5h1M254 364.5h1M317 363.5h1M117 362.5h1M307 362.5h1M328 358.5h1M220 358.5h1M314 356.5h1M232 357.5h1M102 358.5h1M125 360.5h1M197 362.5h1M142 356.5h1M207 360.5h1M95 360.5h1M65 357.5h1M260 362.5h1M212 362.5h1M193 362.5h1M268 365.5h1M285 364.5h1M51 361.5h1M287 362.5h1M217 359.5h1M280 365.5h1M242 359.5h1M161 357.5h1M290 359.5h1M56 359.5h1M145 357.5h1M284 362.5h1M283 357.5h1M343 361.5h1M180 361.5h1M229 363.5h1M278 358.5h1M226 364.5h1M261 363.5h1M215 363.5h1M294 365.5h1M199 364.5h1M126 364.5h1M76 363.5h1M217 363.5h1M401 361.5h1M262 359.5h1M110 364.5h1M77 364.5h1M61 365.5h1M70 358.5h1M325 359.5h1M404 362.5h1M210 362.5h1M68 360.5h1M79 361.5h1M103 359.5h1M281 365.5h1M195 363.5h1M109 361.5h1M289 361.5h1M149 361.5h1M102 360.5h1M334 363.5h1M303 362.5h1M86 362.5h1M143 361.5h1M175 356.5h1M329 357.5h1M137 365.5h1M306 357.5h1M291 358.5h1M179 359.5h1M199 364.5h1M300 360.5h1M279 363.5h1M203 356.5h1M129 364.5h1M236 356.5h1M232 362.5h1M216 357.5h1M110 360.5h1M199 357.5h1M149 358.5h1M161 361.5h1M63 360.5h1M310 365.5h1M96 359.5h1M310 358.5h1M128 358.5h1M81 365.5h1M191 360.5h1M160 363.5h1M114 362.5h1M216 356.5h1M74 360.5h1M68 365.5h1M250 357.5h1M78 361.5h1M410 358.5h1M70 357.5h1M149 359.5h1M71 365.5h1M120 360.5h1M255 359.5h1M92 365.5h1M281 358.5h1M58 361.5h1M270 362.5h1M169 364.5h1M137 359.5h1M85 364.5h1M171 357.5h1M145 360.5h1M273 357.5h1M320 358.5h1M161 357.5h1M213 363.5h1M265 362.5h1M343 360.5h1M320 364.5h1M198 357.5h1M116 362.5h1M161 363.5h1M265 356.5h1M101 364.5h1M140 359.5h1M178 362.5h1M88 358.5h1M323 365.5h1M356 359.5h1M218 363.5h1M91 360.5h1M71 356.5h1M273 364.5h1M202 359.5h1M128 359.5h1M339 359.5h1M146 364.5h1M205 364.5h1M239 358.5h1M89 365.5h1M128 359.5h1M290 360.5h1M55 362.5h1M122 359.5h1M61 360.5h1M234 360.5h1M308 364.5h1M190 362.5h1M252 357.5h1M85 362.5h1M169 359.5h1M326 363.5h1M286 361.5h1M395 365.5h1M260 356.5h1M201 362.5h1M287 357.5h1M315 363.5h1M195 358.5h1M168 362.5h1M396 362.5h1M345 357.5h1M268 364.5h1M331 360.5h1M254 359.5h1M159 365.5h1M123 357.5h1M267 358.5h1M124 362.5h1M316 357.5h1M237 365.5h1M173 362.5h1M407 363.5h1M90 357.5h1M87 362.5h1M91 363.5h1M422 357.5h1M76 360.5h1M227 363.5h1M83 361.5h1M195 362.5h1M195 361.5h1M79 363.5h1M165 361.5h1M187 365.5h1M198 361.5h1M272 359.5h1M70 358.5h1M307 359.5h1M88 365.5h1M259 365.5h1M86 364.5h1M53 359.5h1M57 360.5h1M198 357.5h1M135 360.5h1M232 359.5h1M246 360.5h1M350 362.5h1M295 356.5h1M347 364.5h1M196 363.5h1M393 363.5h1M213 365.5h1M134 359.5h1M231 362.5h1M98 360.5h1M79 365.5h1M391 356.5h1M281 358.5h1M63 360.5h1M153 360.5h1M349 361.5h1M86 362.5h1M195 361.5h1M274 358.5h1M269 361.5h1M332 361.5h1M322 363.5h1M212 362.5h1M355 361.5h1M66 359.5h1M59 360.5h1M193 363.5h1M115 357.5h1M223 361.5h1M200 359.5h1M263 357.5h1M186 361.5h1M131 357.5h1M85 357.5h1M157 363.5h1M152 362.5h1M200 358.5h1M152 360.5h1M396 357.5h1M71 361.5h1M55 364.5h1M241 356.5h1M277 363.5h1M286 358.5h1M415 357.5h1M314 357.5h1M228 364.5h1M328 362.5h1M375 363.5h1M150 356.5h1M342 365.5h1M230 358.5h1M152 358.5h1M85 357.5h1M214 362.5h1M118 361.5h1M315 361.5h1M401 359.5h1M241 365.5h1M264 360.5h1M164 358.5h1M188 359.5h1M293 365.5h1M96 359.5h1M91 364.5h1M275 365.5h1M199 363.5h1M151 359.5h1M88 363.5h1M209 357.5h1M167 365.5h1M245 360.5h1M138 361.5h1M162 361.5h1M230 363.5h1M95 357.5h1M219 361.5h1M131 365.5h1M198 365.5h1M176 361.5h1M105 365.5h1M230 365.5h1M271 359.5h1M337 360.5h1M342 357.5h1M129 363.5h1M90 357.5h1M115 360.5h1M289 358.5h1M319 362.5h1M148 356.5h1M328 363.5h1M180 362.5h1M239 365.5h1M159 364.5h1M102 360.5h1M426 362.5h1M51 359.5h1M213 362.5h1M182 361.5h1M324 364.5h1M112 356.5h1M372 361.5h1M235 358.5h1M142 362.5h1M199 358.5h1M156 362.5h1M274 361.5h1M218 363.5h1M194 363.5h1M222 357.5h1M151 357.5h1M73 363.5h1M92 360.5h1M359 361.5h1M61 363.5h1M290 362.5h1M288 364.5h1M76 357.5h1M193 358.5h1M52 359.5h1M331 358.5h1M316 360.5h1M224 356.5h1M226 363.5h1M211 362.5h1M221 359.5h1M147 363.5h1M125 364.5h1M191 362.5h1M190 359.5h1M54 360.5h1M91 361.5h1M176 357.5h1M109 357.5h1M282 361.5h1M359 365.5h1M284 358.5h1M215 364.5h1M139 364.5h1M78 358.5h1M306 357.5h1M331 359.5h1M170 357.5h1M250 362.5h1M67 360.5h1M221 359.5h1M224 362.5h1M145 357.5h1M167 359.5h1M88 365.5h1M85 358.5h1M313 357.5h1M382 363.5h1M225 357.5h1M139 359.5h1M184 364.5h1M270 362.5h1M287 360.5h1M102 364.5h1M169 362.5h1M278 360.5h1M333 357.5h1M77 362.5h1M160 356.5h1M226 359.5h1M317 364.5h1M376 361.5h1M174 357.5h1M101 363.5h1M227 358.5h1M209 360.5h1M149 360.5h1M287 359.5h1M65 362.5h1M145 362.5h1M244 363.5h1M169 362.5h1M113 356.5h1M243 361.5h1M69 365.5h1M354 360.5h1M63 358.5h1M146 357.5h1M352 358.5h1M155 358.5h1M327 356.5h1M168 364.5h1M198 359.5h1M65 360.5h1M97 358.5h1M192 361.5h1M278 360.5h1M173 364.5h1M355 357.5h1M54 358.5h1M53 358.5h1M130 362.5h1M159 358.5h1M405 362.5h1M322 361.5h1M316 358.5h1M230 357.5h1M336 361.5h1M251 359.5h1M266 362.5h1M171 360.5h1M282 357.5h1M222 358.5h1M90 356.5h1M242 356.5h1M155 360.5h1M400 359.5h1M318 356.5h1M139 365.5h1M221 361.5h1M237 362.5h1M328 361.5h1M286 361.5h1M305 363.5h1M192 362.5h1M323 363.5h1M140 362.5h1M74 358.5h1M240 363.5h1M345 365.5h1M221 365.5h1M175 365.5h1M83 362.5h1M258 364.5h1M107 362.5h1M76 365.5h1M179 361.5h1M307 364.5h1M241 362.5h1M267 365.5h1M173 356.5h1M124 359.5h1M166 358.5h1M307 365.5h1M234 358.5h1M191 357.5h1M108 363.5h1M147 362.5h1M235 361.5h1M154 363.5h1M91 363.5h1M259 359.5h1M414 365.5h1M214 358.5h1M53 360.5h1M108 361.5h1M168 360.5h1M251 359.5h1M169 358.5h1M213 358.5h1M252 362.5h1M251 357.5h1M62 360.5h1M55 359.5h1M141 361.5h1M131 361.5h1M77 364.5h1M273 363.5h1M69 365.5h1M306 360.5h1M131 357.5h1M251 360.5h1M240 357.5h1M236 359.5h1M79 362.5h1M66 359.5h1M117 361.5h1M194 360.5h1M63 357.5h1M126 363.5h1M287 363.5h1M215 358.5h1M94 365.5h1M209 363.5h1M240 364.5h1M408 360.5h1M136 359.5h1M165 362.5h1M244 362.5h1M233 360.5h1M290 364.5h1M324 360.5h1M111 363.5h1M177 356.5h1M60 359.5h1M218 365.5h1M320 365.5h1M122 362.5h1M161 362.5h1M324 364.5h1M161 363.5h1M175 359.5h1M232 362.5h1M152 357.5h1M275 365.5h1M289 365.5h1M242 360.5h1M194 361.5h1M98 361.5h1M339 362.5h1M272 357.5h1M332 357.5h1M344 357.5h1M343 362.5h1M318 356.5h1M278 362.5h1M332 362.5h1M167 361.5h1M284 362.5h1M243 362.5h1M208 362.5h1M200 358.5h1M189 362.5h1M239 359.5h1M186 362.5h1M215 356.5h1M257 364.5h1M125 361.5h1M306 365.5h1M181 357.5h1M314 364.5h1M107 365.5h1M242 359.5h1M144 365.5h1M125 364.5h1M312 363.5h1M136 365.5h1M278 358.5h1M293 356.5h1M195 361.5h1M79 362.5h1M173 361.5h1M296 364.5h1M88 364.5h1M371 364.5h1M285 363.5h1M195 363.5h1M324 359.5h1M191 360.5h1M132 365.5h1M119 363.5h1M200 362.5h1M156 358.5h1M136 360.5h1M394 365.5h1M152 357.5h1M172 359.5h1M318 360.5h1M115 359.5h1M115 361.5h1M163 357.5h1M95 357.5h1M252 363.5h1M153 365.5h1M408 365.5h1M232 360.5h1M259 363.5h1M192 363.5h1M216 359.5h1M211 362.5h1M53 364.5h1M315 365.5h1M354 361.5h1M281 362.5h1M239 365.5h1M68 359.5h1M150 358.5h1M100 363.5h1M125 362.5h1M101 362.5h1M332 360.5h1M197 365.5h1M218 362.5h1M83 361.5h1M354 358.5h1M196 360.5h1M158 361.5h1M113 357.5h1M303 365.5h1M280 361.5h1M264 361.5h1M242 360.5h1M177 362.5h1M263 360.5h1M207 364.5h1M194 361.5h1M307 358.5h1M405 362.5h1M151 360.5h1M143 365.5h1M66 363.5h1M194 363.5h1M322 365.5h1M280 362.5h1M102 363.5h1M110 365.5h1M75 365.5h1M220 365.5h1M243 357.5h1M410 357.5h1M313 360.5h1M140 363.5h1M330 361.5h1M203 359.5h1M231 364.5h1M103 364.5h1M183 365.5h1M78 360.5h1M230 364.5h1M293 358.5h1M357 358.5h1M138 361.5h1M176 361.5h1M161 365.5h1M319 362.5h1M287 362.5h1M195 360.5h1M367 358.5h1M177 364.5h1M143 364.5h1M145 361.5h1M102 360.5h1M97 362.5h1M166 365.5h1M308 363.5h1M181 360.5h1M317 363.5h1M340 357.5h1M192 356.5h1M159 360.5h1M385 357.5h1M58 363.5h1M225 361.5h1M189 356.5h1M88 363.5h1M246 363.5h1M107 358.5h1M104 364.5h1M167 363.5h1M164 365.5h1M101 364.5h1M127 358.5h1M242 357.5h1M138 362.5h1M347 363.5h1M255 359.5h1M63 365.5h1M291 360.5h1M293 361.5h1M327 361.5h1M153 365.5h1M140 364.5h1M206 358.5h1M299 359.5h1M281 362.5h1M267 356.5h1M153 357.5h1M79 362.5h1M267 364.5h1M295 360.5h1M109 362.5h1M183 359.5h1M337 362.5h1M73 365.5h1M343 363.5h1M96 359.5h1M232 357.5h1M218 358.5h1M178 356.5h1M425 364.5h1M212 360.5h1M246 361.5h1M54 363.5h1M375 360.5h1M96 364.5h1M183 365.5h1M290 361.5h1M176 362.5h1M246 361.5h1M125 359.5h1M133 361.5h1M63 365.5h1M247 360.5h1M319 360.5h1M274 362.5h1M214 359.5h1M296 361.5h1M240 357.5h1M228 364.5h1M109 364.5h1M124 357.5h1M400 358.5h1M279 356.5h1M274 361.5h1M249 364.5h1M382 356.5h1M232 362.5h1M235 364.5h1M332 359.5h1M330 358.5h1M255 364.5h1M233 364.5h1M250 360.5h1M142 365.5h1M64 360.5h1M82 359.5h1M144 362.5h1M405 360.5h1M288 360.5h1M122 361.5h1M216 364.5h1M329 358.5h1M332 359.5h1M147 362.5h1M237 357.5h1M277 359.5h1M109 356.5h1M332 364.5h1M372 359.5h1M152 356.5h1M149 360.5h1M255 357.5h1M103 359.5h1M258 365.5h1M87 363.5h1M268 360.5h1M75 364.5h1M200 358.5h1M325 360.5h1M348 357.5h1M298 357.5h1M184 361.5h1M207 359.5h1M276 362.5h1M77 359.5h1M73 365.5h1M395 357.5h1M167 358.5h1M63 363.5h1M78 357.5h1M105 357.5h1M349 364.5h1M160 361.5h1M143 360.5h1M111 361.5h1M320 362.5h1M127 358.5h1M353 359.5h1M78 361.5h1M139 364.5h1M170 360.5h1M180 357.5h1M299 359.5h1M267 365.5h1M248 365.5h1M289 364.5h1M291 364.5h1M172 361.5h1M129 361.5h1M128 358.5h1M272 364.5h1M359 359.5h1M398 362.5h1M269 361.5h1M212 356.5h1M362 362.5h1M368 358.5h1M138 361.5h1M170 359.5h1M350 357.5h1M420 357.5h1M62 356.5h1M111 358.5h1M326 356.5h1M54 365.5h1M226 356.5h1M297 358.5h1M219 359.5h1M267 361.5h1M67 365.5h1M272 360.5h1M339 363.5h1M221 363.5h1M121 358.5h1M130 359.5h1M334 365.5h1M231 357.5h1M283 359.5h1M87 363.5h1M344 359.5h1M84 364.5h1M222 363.5h1M372 363.5h1M251 365.5h1M245 364.5h1M245 362.5h1M103 361.5h1M244 364.5h1M185 365.5h1M246 364.5h1M172 365.5h1M59 364.5h1M268 364.5h1M221 359.5h1M241 365.5h1M81 364.5h1M198 362.5h1M273 361.5h1M258 363.5h1M92 362.5h1M69 358.5h1M230 361.5h1M288 361.5h1M135 357.5h1M56 365.5h1M66 362.5h1M131 357.5h1M297 363.5h1M142 362.5h1M164 363.5h1M63 365.5h1M206 359.5h1M389 357.5h1M244 361.5h1M129 361.5h1M200 356.5h1M150 356.5h1M280 360.5h1M246 365.5h1M85 362.5h1M118 359.5h1M55 360.5h1M327 365.5h1M385 362.5h1M317 357.5h1M179 359.5h1M323 365.5h1M182 365.5h1M92 362.5h1M431 364.5h1M305 357.5h1M246 358.5h1M115 362.5h1M393 360.5h1M110 357.5h1M292 361.5h1M62 363.5h1M210 364.5h1M199 364.5h1M370 362.5h1M230 357.5h1M124 363.5h1M352 362.5h1M220 359.5h1M183 364.5h1M98 364.5h1M221 362.5h1M283 357.5h1M381 357.5h1M165 364.5h1M274 358.5h1M197 362.5h1M318 357.5h1M78 356.5h1M314 359.5h1M85 362.5h1M256 358.5h1M289 356.5h1M123 358.5h1M66 359.5h1M342 361.5h1M148 358.5h1M383 365.5h1M302 361.5h1M222 365.5h1M417 361.5h1M320 364.5h1M340 359.5h1M190 357.5h1M64 357.5h1M129 357.5h1M128 365.5h1M214 361.5h1M179 359.5h1M181 361.5h1M133 364.5h1M131 364.5h1M238 358.5h1M307 363.5h1M197 359.5h1M248 365.5h1M148 363.5h1M270 358.5h1M57 364.5h1M204 360.5h1M195 358.5h1M413 365.5h1M257 365.5h1M127 358.5h1M102 364.5h1M298 365.5h1M177 356.5h1M172 361.5h1M210 356.5h1M299 357.5h1M192 363.5h1M211 362.5h1M281 365.5h1M192 356.5h1M102 358.5h1M118 365.5h1M277 361.5h1M160 363.5h1M215 356.5h1M65 356.5h1M224 360.5h1M165 365.5h1M341 365.5h1M321 357.5h1M107 360.5h1M284 357.5h1M180 364.5h1M151 359.5h1M276 358.5h1M259 364.5h1M141 358.5h1M54 364.5h1M295 361.5h1M178 359.5h1M115 356.5h1M103 359.5h1M264 357.5h1M121 357.5h1M247 363.5h1M143 365.5h1M233 358.5h1M327 362.5h1M326 357.5h1M143 364.5h1M358 356.5h1M259 359.5h1M203 365.5h1M74 362.5h1M99 359.5h1M181 365.5h1M305 365.5h1M232 357.5h1M298 361.5h1M275 362.5h1M333 365.5h1M414 365.5h1M115 362.5h1M351 359.5h1M119 357.5h1M116 361.5h1M220 365.5h1M94 364.5h1M99 362.5h1M88 363.5h1M264 357.5h1M198 360.5h1M68 356.5h1M267 360.5h1M212 362.5h1M186 363.5h1M76 363.5h1M292 357.5h1M298 362.5h1M215 358.5h1M94 356.5h1M269 358.5h1M285 363.5h1M313 361.5h1M307 360.5h1M251 357.5h1M161 363.5h1M248 356.5h1M184 357.5h1M227 364.5h1M252 363.5h1M289 356.5h1M245 356.5h1M291 357.5h1M166 358.5h1M233 357.5h1M60 362.5h1M65 363.5h1M280 365.5h1M136 361.5h1M284 360.5h1M171 365.5h1M100 363.5h1M132 357.5h1M372 364.5h1M94 357.5h1M94 357.5h1M236 365.5h1M316 356.5h1M104 359.5h1M220 357.5h1M231 363.5h1M337 363.5h1M333 356.5h1M401 364.5h1M254 357.5h1M150 357.5h1M345 357.5h1M367 358.5h1M268 361.5h1M227 359.5h1M244 358.5h1M212 360.5h1M183 365.5h1M109 365.5h1M51 359.5h1M245 358.5h1M76 365.5h1M226 361.5h1M312 363.5h1M301 363.5h1M148 362.5h1M244 359.5h1M143 358.5h1M188 361.5h1M86 363.5h1M104 357.5h1M80 360.5h1M231 358.5h1M249 365.5h1M204 358.5h1M371 359.5h1M125 364.5h1M220 365.5h1M89 359.5h1M400 364.5h1M378 358.5h1M294 361.5h1M169 357.5h1M316 361.5h1M328 359.5h1M325 364.5h1M62 359.5h1M177 360.5h1M181 362.5h1M224 365.5h1M121 359.5h1M365 358.5h1M279 363.5h1M53 365.5h1M318 363.5h1M132 364.5h1M279 363.5h1M325 358.5h1M401 364.5h1M327 364.5h1M326 359.5h1M312 362.5h1M379 364.5h1M219 361.5h1M204 357.5h1M163 357.5h1M170 364.5h1M195 361.5h1M175 364.5h1M278 361.5h1M345 365.5h1M79 365.5h1M78 365.5h1M76 364.5h1M338 362.5h1M132 359.5h1M62 358.5h1M245 360.5h1M136 362.5h1M335 360.5h1M161 363.5h1M143 363.5h1M154 361.5h1M87 365.5h1M243 359.5h1M313 357.5h1M330 365.5h1M335 362.5h1M239 362.5h1M208 363.5h1M295 362.5h1M270 359.5h1M107 357.5h1M344 357.5h1M64 361.5h1M288 358.5h1M338 358.5h1M197 362.5h1M312 363.5h1M161 364.5h1M293 359.5h1M170 362.5h1M196 365.5h1M274 360.5h1M96 365.5h1M61 362.5h1M208 359.5h1M277 360.5h1M145 364.5h1M277 364.5h1M56 364.5h1M240 364.5h1M148 364.5h1M323 358.5h1M203 361.5h1M389 362.5h1M196 362.5h1M249 359.5h1M211 365.5h1M168 357.5h1M373 363.5h1M239 364.5h1M124 361.5h1M248 360.5h1M219 360.5h1M207 364.5h1M147 356.5h1M244 362.5h1M200 361.5h1M115 360.5h1M264 360.5h1M254 359.5h1M79 361.5h1M132 356.5h1M171 363.5h1M247 363.5h1M224 358.5h1M67 362.5h1M310 356.5h1M401 363.5h1M222 359.5h1M324 358.5h1M63 360.5h1M329 365.5h1M258 363.5h1M294 361.5h1M226 361.5h1M246 359.5h1M110 363.5h1M159 363.5h1M178 358.5h1M58 365.5h1M425 361.5h1M60 362.5h1M410 364.5h1M276 359.5h1M62 359.5h1M111 357.5h1M284 357.5h1M124 358.5h1M277 364.5h1M275 359.5h1M308 357.5h1M203 357.5h1M95 364.5h1M338 364.5h1M346 356.5h1M82 361.5h1M281 364.5h1M208 362.5h1M152 358.5h1M354 358.5h1M104 362.5h1M215 356.5h1M74 364.5h1M129 358.5h1M220 365.5h1M235 363.5h1M160 360.5h1M178 358.5h1M113 359.5h1M343 360.5h1M214 361.5h1M108 347.5h1M103 351.5h1M259 327.5h1M101 325.5h1M96 354.5h1M334 352.5h1M367 349.5h1M161 353.5h1M211 347.5h1M385 353.5h1M155 349.5h1M149 345.5h1M79 325.5h1M163 324.5h1M279 343.5h1M334 354.5h1M336 353.5h1M141 327.5h1M393 352.5h1M248 338.5h1M400 345.5h1M330 327.5h1M356 347.5h1M259 335.5h1M378 339.5h1M132 330.5h1M201 338.5h1M255 345.5h1M89 353.5h1M324 342.5h1M185 337.5h1M329 346.5h1M78 331.5h1M340 330.5h1M72 352.5h1M272 337.5h1M405 335.5h1M92 346.5h1M132 339.5h1M412 339.5h1M379 338.5h1M352 343.5h1M98 340.5h1M358 340.5h1M145 348.5h1M303 337.5h1M133 350.5h1M95 352.5h1M402 349.5h1M135 354.5h1M86 343.5h1M328 336.5h1M77 354.5h1M372 335.5h1M219 344.5h1M120 333.5h1M239 331.5h1M351 343.5h1M201 337.5h1M114 342.5h1M169 345.5h1M137 353.5h1M417 336.5h1M246 351.5h1M59 350.5h1M184 354.5h1M193 326.5h1M428 352.5h1M78 352.5h1M189 347.5h1M68 352.5h1M212 354.5h1M216 335.5h1M103 353.5h1M73 352.5h1M135 353.5h1M315 337.5h1M95 332.5h1M254 352.5h1M416 354.5h1M126 352.5h1M130 337.5h1M292 354.5h1M189 338.5h1M277 333.5h1M240 353.5h1M347 353.5h1M175 334.5h1M141 346.5h1M332 333.5h1M418 353.5h1M226 351.5h1M308 335.5h1M398 353.5h1M351 349.5h1M389 335.5h1M327 353.5h1M273 343.5h1M212 354.5h1M382 353.5h1M324 327.5h1M416 327.5h1M192 332.5h1M143 323.5h1M223 329.5h1M113 283.5h1M203 301.5h1M295 298.5h1" stroke="#20e0f0" stroke-width="1"/><path d="M124 362.5h1M80 362.5h1M308 363.5h1M152 365.5h1M352 362.5h1M179 366.5h1M129 365.5h1M262 364.5h1M63 364.5h1M239 362.5h1M154 364.5h1M354 365.5h1M126 363.5h1M348 365.5h1M116 366.5h1M115 363.5h1M220 364.5h1M289 362.5h1M221 364.5h1M293 365.5h1M382 362.5h1M97 362.5h1M201 365.5h1M173 362.5h1M343 364.5h1M104 363.5h1M330 365.5h1M106 363.5h1M221 365.5h1M107 366.5h1M133 362.5h1M282 366.5h1M93 363.5h1M68 365.5h1M357 364.5h1M86 366.5h1M151 365.5h1M252 364.5h1M237 365.5h1M116 364.5h1M277 363.5h1M181 362.5h1M260 362.5h1M158 362.5h1M173 362.5h1M135 363.5h1M163 363.5h1M62 362.5h1M206 362.5h1M108 363.5h1M176 364.5h1M180 363.5h1M226 366.5h1M79 362.5h1M78 363.5h1M209 365.5h1M214 365.5h1M100 363.5h1M106 362.5h1M228 364.5h1M207 366.5h1M349 362.5h1M390 365.5h1M128 362.5h1M164 363.5h1M300 362.5h1M322 364.5h1M68 363.5h1M325 363.5h1M204 364.5h1M101 362.5h1M53 365.5h1M168 365.5h1M115 362.5h1M81 366.5h1M64 363.5h1M199 362.5h1M234 362.5h1M231 363.5h1M160 365.5h1M204 362.5h1M354 362.5h1M132 365.5h1M197 364.5h1M122 366.5h1M136 365.5h1M62 364.5h1M247 362.5h1M270 364.5h1M184 362.5h1M113 365.5h1M54 363.5h1M161 363.5h1M220 363.5h1M186 366.5h1M363 362.5h1M53 363.5h1M76 364.5h1M61 362.5h1M318 366.5h1M137 365.5h1M69 364.5h1M197 364.5h1M185 366.5h1M167 364.5h1M60 362.5h1M386 366.5h1M150 364.5h1M224 365.5h1M275 362.5h1M73 365.5h1M82 363.5h1M154 362.5h1M189 364.5h1M363 366.5h1M165 363.5h1M221 364.5h1M185 365.5h1M286 366.5h1M249 363.5h1M146 364.5h1M149 365.5h1M52 365.5h1M78 364.5h1M351 365.5h1M110 364.5h1M190 362.5h1M301 362.5h1M147 365.5h1M188 366.5h1M352 363.5h1M197 366.5h1M264 366.5h1M147 363.5h1M148 363.5h1M297 365.5h1M125 365.5h1M150 365.5h1M304 362.5h1M368 363.5h1M64 365.5h1M249 363.5h1M258 365.5h1M281 364.5h1M57 362.5h1M230 362.5h1M204 364.5h1M66 365.5h1M85 363.5h1M331 364.5h1M256 364.5h1M158 365.5h1M171 365.5h1M194 362.5h1M371 366.5h1M161 363.5h1M197 365.5h1M393 363.5h1M370 362.5h1M320 362.5h1M357 363.5h1M60 362.5h1M269 363.5h1M269 362.5h1M213 364.5h1M122 363.5h1M123 365.5h1M91 362.5h1M61 364.5h1M202 362.5h1M376 362.5h1M193 362.5h1M346 362.5h1M255 362.5h1M306 366.5h1M246 363.5h1M315 363.5h1M297 363.5h1M135 365.5h1M172 364.5h1M326 364.5h1M95 362.5h1M210 364.5h1M131 364.5h1M118 366.5h1M205 362.5h1M184 365.5h1M102 363.5h1M63 362.5h1M335 366.5h1M209 362.5h1M67 362.5h1M177 363.5h1M324 362.5h1M106 363.5h1M208 366.5h1M216 365.5h1M118 364.5h1M281 364.5h1M79 366.5h1M165 363.5h1M172 364.5h1M90 364.5h1M332 364.5h1M161 364.5h1M210 365.5h1M292 364.5h1M228 364.5h1M91 363.5h1M312 362.5h1M83 363.5h1M206 364.5h1M181 365.5h1M178 363.5h1M226 366.5h1M169 365.5h1M229 363.5h1M165 366.5h1M259 362.5h1M285 366.5h1M70 362.5h1M52 363.5h1M111 363.5h1M197 365.5h1M222 362.5h1M284 364.5h1M315 362.5h1M269 363.5h1M304 365.5h1M71 364.5h1M202 365.5h1M54 364.5h1M138 362.5h1M174 362.5h1M295 365.5h1M98 362.5h1M214 363.5h1M353 363.5h1M325 363.5h1M277 362.5h1M344 363.5h1M201 364.5h1M368 362.5h1M321 362.5h1M355 365.5h1M197 365.5h1M330 362.5h1M344 365.5h1M164 363.5h1M123 365.5h1M167 362.5h1M247 362.5h1M253 364.5h1M176 362.5h1M211 363.5h1M139 364.5h1M277 364.5h1M256 363.5h1M300 363.5h1M202 363.5h1M188 364.5h1M120 366.5h1M163 364.5h1M246 365.5h1M107 364.5h1M291 364.5h1M352 364.5h1M293 363.5h1M281 365.5h1M161 365.5h1M165 362.5h1M385 365.5h1M309 364.5h1M258 364.5h1M73 362.5h1M319 364.5h1M359 366.5h1M308 362.5h1M185 362.5h1M301 363.5h1M130 364.5h1M232 365.5h1M84 364.5h1M175 363.5h1M324 362.5h1M237 363.5h1M301 365.5h1M300 363.5h1M257 362.5h1M138 364.5h1M75 362.5h1M248 362.5h1M122 365.5h1M201 365.5h1M139 362.5h1M149 365.5h1M269 363.5h1M182 365.5h1M65 364.5h1M209 366.5h1M146 362.5h1M179 364.5h1M245 364.5h1M327 363.5h1M166 366.5h1M155 365.5h1M278 362.5h1M113 365.5h1M112 365.5h1M223 364.5h1M372 364.5h1M361 364.5h1M201 366.5h1M337 363.5h1M276 362.5h1M61 363.5h1M141 362.5h1M60 362.5h1M182 366.5h1M381 366.5h1M256 362.5h1M240 362.5h1M80 364.5h1M219 366.5h1M137 362.5h1M271 362.5h1M246 364.5h1M300 363.5h1M286 364.5h1M337 363.5h1M105 366.5h1M326 366.5h1M263 364.5h1M207 363.5h1M193 364.5h1M275 363.5h1M160 362.5h1M136 366.5h1M287 363.5h1M269 363.5h1M370 365.5h1M56 364.5h1M140 362.5h1M162 364.5h1M343 364.5h1M115 365.5h1M71 365.5h1M344 364.5h1M101 363.5h1M389 365.5h1M150 362.5h1M360 363.5h1M254 364.5h1M133 363.5h1M81 364.5h1M313 362.5h1M186 364.5h1M328 362.5h1M115 363.5h1M59 363.5h1M312 364.5h1M132 365.5h1M313 366.5h1M86 362.5h1M73 363.5h1M220 363.5h1M133 366.5h1M200 365.5h1M78 364.5h1M277 365.5h1M380 365.5h1M102 366.5h1M152 366.5h1M56 363.5h1M328 365.5h1M280 363.5h1M87 362.5h1M320 364.5h1M169 365.5h1M82 366.5h1M115 362.5h1M144 363.5h1M291 366.5h1M265 365.5h1M54 365.5h1M404 363.5h1M231 366.5h1M152 363.5h1M262 363.5h1M300 364.5h1M266 365.5h1M261 363.5h1M193 366.5h1M229 362.5h1M266 362.5h1M146 365.5h1M247 363.5h1M138 366.5h1M374 365.5h1M247 363.5h1M296 362.5h1M279 364.5h1M358 363.5h1M226 365.5h1M56 364.5h1M203 363.5h1M242 362.5h1M222 364.5h1M305 364.5h1M133 366.5h1M128 364.5h1M248 362.5h1M339 363.5h1M250 364.5h1M225 363.5h1M124 364.5h1M118 363.5h1M170 363.5h1M79 363.5h1M242 364.5h1M56 362.5h1M131 364.5h1M187 365.5h1M284 364.5h1M81 364.5h1M224 362.5h1M256 366.5h1M203 362.5h1M168 363.5h1M78 365.5h1M306 362.5h1M395 362.5h1M67 365.5h1M372 363.5h1M107 364.5h1M165 364.5h1M86 363.5h1M251 365.5h1M294 362.5h1M92 365.5h1M338 364.5h1M310 364.5h1M104 364.5h1M89 365.5h1M217 363.5h1M58 363.5h1M372 363.5h1M262 362.5h1M232 365.5h1M311 362.5h1M321 365.5h1M355 364.5h1M98 363.5h1M264 366.5h1M185 365.5h1M232 362.5h1M312 364.5h1M70 364.5h1M115 362.5h1M61 362.5h1M227 365.5h1M310 366.5h1M211 362.5h1M393 365.5h1M92 365.5h1M68 363.5h1M170 366.5h1M299 363.5h1M287 363.5h1M409 366.5h1M161 362.5h1M187 366.5h1M95 364.5h1M338 363.5h1M364 365.5h1M357 363.5h1M183 365.5h1M298 365.5h1M295 363.5h1M187 363.5h1M303 363.5h1M254 364.5h1M344 363.5h1M142 362.5h1M85 362.5h1M260 364.5h1M194 365.5h1M232 362.5h1M255 364.5h1M123 365.5h1M126 362.5h1M303 366.5h1M413 365.5h1M212 365.5h1M103 362.5h1M172 364.5h1M232 365.5h1M186 364.5h1M154 365.5h1M107 362.5h1M267 364.5h1M89 365.5h1M129 363.5h1M348 365.5h1M151 363.5h1M208 362.5h1M145 362.5h1M82 364.5h1M62 364.5h1M223 362.5h1M317 365.5h1M190 364.5h1M267 365.5h1M191 364.5h1M218 363.5h1M388 364.5h1M303 366.5h1M216 365.5h1M318 364.5h1M180 365.5h1M162 364.5h1M115 363.5h1M408 362.5h1M165 364.5h1M211 363.5h1M217 363.5h1M264 365.5h1M69 365.5h1M160 364.5h1M305 364.5h1M156 363.5h1M243 362.5h1M160 363.5h1M153 365.5h1M379 363.5h1M375 364.5h1M173 363.5h1M277 364.5h1M161 366.5h1M108 363.5h1M210 364.5h1M169 366.5h1M152 362.5h1M87 366.5h1M318 362.5h1M199 365.5h1M334 363.5h1M311 366.5h1M252 365.5h1M367 363.5h1M196 364.5h1M342 363.5h1M206 364.5h1M196 366.5h1M128 362.5h1M329 362.5h1M363 364.5h1M135 363.5h1M344 362.5h1M305 364.5h1M295 363.5h1M77 363.5h1M150 362.5h1M73 365.5h1M128 362.5h1M214 365.5h1M99 363.5h1M280 366.5h1M68 364.5h1M157 365.5h1M319 366.5h1M299 365.5h1M129 362.5h1M128 365.5h1M320 362.5h1M236 364.5h1M360 365.5h1M278 363.5h1M173 363.5h1M60 366.5h1M230 364.5h1M345 364.5h1M275 366.5h1M113 366.5h1M105 364.5h1M201 364.5h1M138 364.5h1M268 365.5h1M253 363.5h1M76 365.5h1M357 366.5h1M311 364.5h1M315 362.5h1M179 363.5h1M226 364.5h1M420 362.5h1M138 363.5h1M300 365.5h1M193 363.5h1M81 362.5h1M166 364.5h1M209 364.5h1M240 365.5h1M51 363.5h1M395 365.5h1M148 362.5h1M333 363.5h1M350 366.5h1M149 362.5h1M280 363.5h1M93 362.5h1M161 363.5h1M232 365.5h1M282 366.5h1M247 363.5h1M324 364.5h1M278 363.5h1M133 366.5h1M227 366.5h1M333 366.5h1M308 363.5h1M308 364.5h1M273 364.5h1M83 363.5h1M165 364.5h1M216 363.5h1M174 362.5h1M188 365.5h1M110 364.5h1M176 366.5h1M95 364.5h1M256 362.5h1M96 366.5h1M113 363.5h1M304 366.5h1M162 365.5h1M336 363.5h1M79 347.5h1M407 348.5h1M407 352.5h1M148 354.5h1M222 352.5h1M399 334.5h1M65 341.5h1M284 331.5h1M182 352.5h1M371 339.5h1M250 339.5h1M349 354.5h1M189 347.5h1M320 331.5h1M166 342.5h1M149 352.5h1M143 353.5h1M367 349.5h1M156 325.5h1M87 351.5h1M244 354.5h1M71 338.5h1M289 347.5h1M350 348.5h1M291 348.5h1M152 350.5h1M102 345.5h1M322 351.5h1M82 337.5h1M55 354.5h1M99 354.5h1M354 347.5h1M245 341.5h1M140 350.5h1M391 347.5h1M307 346.5h1M223 332.5h1M380 326.5h1M166 330.5h1M242 312.5h1" stroke="#10e010" stroke-width="1"/><path d="M201 366.5h1M259 361.5h1M327 366.5h1M73 365.5h1M271 362.5h1M175 362.5h1M184 366.5h1M178 365.5h1M400 365.5h1M129 366.5h1M280 362.5h1M74 361.5h1M84 365.5h1M103 365.5h1M299 360.5h1M212 365.5h1M244 361.5h1M351 361.5h1M362 362.5h1M287 362.5h1M284 360.5h1M151 366.5h1M268 364.5h1M108 359.5h1M142 362.5h1M237 365.5h1M80 363.5h1M337 364.5h1M99 366.5h1M347 363.5h1M138 361.5h1M279 361.5h1M59 366.5h1M266 364.5h1M129 359.5h1M315 362.5h1M117 360.5h1M83 365.5h1M267 364.5h1M114 363.5h1M197 363.5h1M261 366.5h1M120 362.5h1M231 361.5h1M66 361.5h1M182 364.5h1M254 361.5h1M204 363.5h1M133 365.5h1M223 361.5h1M95 360.5h1M283 366.5h1M91 364.5h1M220 364.5h1M393 360.5h1M316 360.5h1M296 362.5h1M66 365.5h1M100 365.5h1M176 363.5h1M264 363.5h1M145 360.5h1M247 360.5h1M129 366.5h1M234 362.5h1M284 364.5h1M395 360.5h1M212 361.5h1M260 365.5h1M233 362.5h1M169 360.5h1M239 366.5h1M343 360.5h1M277 359.5h1M73 364.5h1M126 361.5h1" stroke="#f0f000" stroke-width="1"/><path d="M408 366.5h1M147 365.5h1M398 367.5h1M289 366.5h1M304 366.5h1M289 366.5h1M134 366.5h1M336 365.5h1M241 365.5h1M316 366.5h1M107 366.5h1M141 365.5h1M319 366.5h1M176 366.5h1M115 366.5h1M128 366.5h1M375 366.5h1M148 366.5h1M225 365.5h1M234 367.5h1M149 367.5h1M304 365.5h1M56 366.5h1M266 367.5h1M250 366.5h1M101 367.5h1M353 365.5h1M367 367.5h1M59 366.5h1M106 365.5h1M202 366.5h1M226 366.5h1M345 366.5h1M96 366.5h1M163 366.5h1M67 366.5h1M297 367.5h1M249 365.5h1M147 366.5h1M74 366.5h1M115 366.5h1M112 366.5h1M293 366.5h1M175 366.5h1M336 366.5h1M289 367.5h1M222 366.5h1M348 366.5h1M351 365.5h1M117 366.5h1M368 366.5h1M302 366.5h1M231 365.5h1M278 366.5h1M159 366.5h1M396 366.5h1M361 365.5h1M173 366.5h1M186 366.5h1M323 366.5h1M101 366.5h1M250 366.5h1M145 366.5h1M185 366.5h1M53 367.5h1M98 367.5h1M188 366.5h1M227 366.5h1M374 365.5h1M336 366.5h1M194 365.5h1M281 366.5h1M99 366.5h1M198 366.5h1M169 365.5h1M78 366.5h1M188 366.5h1M283 367.5h1M89 365.5h1M264 366.5h1M237 365.5h1M309 366.5h1M260 367.5h1M245 366.5h1M106 366.5h1M261 365.5h1M84 366.5h1M123 366.5h1M97 366.5h1M234 367.5h1M137 367.5h1M297 366.5h1M217 366.5h1M355 367.5h1M114 366.5h1M158 366.5h1M231 366.5h1M99 365.5h1M351 367.5h1M130 367.5h1M130 365.5h1M247 365.5h1M258 366.5h1M301 365.5h1M344 366.5h1M288 366.5h1M238 366.5h1M296 366.5h1M262 367.5h1M60 365.5h1M224 366.5h1M220 367.5h1M169 366.5h1M115 367.5h1M291 366.5h1M196 365.5h1M348 366.5h1M273 366.5h1M96 366.5h1M334 366.5h1M206 367.5h1M146 366.5h1M162 367.5h1M157 365.5h1M379 366.5h1M306 366.5h1M250 366.5h1M123 367.5h1M406 366.5h1M245 366.5h1M374 366.5h1M184 366.5h1M84 366.5h1M146 365.5h1M274 365.5h1M128 365.5h1M55 365.5h1M371 366.5h1M237 366.5h1M104 366.5h1M179 366.5h1M173 366.5h1M354 367.5h1M124 366.5h1M122 367.5h1M257 365.5h1M234 366.5h1M341 365.5h1M238 366.5h1M205 365.5h1M211 366.5h1M265 365.5h1M86 366.5h1M349 365.5h1M233 366.5h1M345 365.5h1M157 366.5h1M257 365.5h1M293 367.5h1M324 366.5h1M159 366.5h1M71 366.5h1M234 366.5h1M243 366.5h1M278 366.5h1M179 367.5h1M69 366.5h1M242 365.5h1M164 366.5h1M234 367.5h1M222 366.5h1M283 366.5h1M229 365.5h1M237 367.5h1M157 366.5h1M216 367.5h1M94 365.5h1M58 365.5h1M136 366.5h1M342 366.5h1M86 366.5h1M161 366.5h1M211 366.5h1M68 366.5h1M129 366.5h1M212 366.5h1M208 367.5h1M108 366.5h1M75 367.5h1M200 366.5h1M198 366.5h1M248 366.5h1M192 366.5h1M303 366.5h1M329 365.5h1M219 366.5h1M188 366.5h1M310 367.5h1M93 365.5h1M94 366.5h1M356 367.5h1M264 367.5h1M298 367.5h1M281 365.5h1M80 367.5h1M318 366.5h1M195 365.5h1M71 366.5h1M184 366.5h1M314 366.5h1M360 366.5h1M231 365.5h1M188 367.5h1M272 366.5h1M71 366.5h1M96 366.5h1M63 366.5h1M258 367.5h1M76 365.5h1M169 365.5h1M262 366.5h1M374 366.5h1M153 367.5h1M113 366.5h1M151 367.5h1M67 366.5h1M51 366.5h1M57 366.5h1M298 365.5h1M323 366.5h1M55 366.5h1M124 365.5h1M216 367.5h1M212 366.5h1M240 365.5h1M276 366.5h1M173 367.5h1M351 366.5h1M268 367.5h1M280 365.5h1M244 366.5h1M64 366.5h1M96 366.5h1M100 365.5h1M77 366.5h1M113 365.5h1M74 365.5h1M340 366.5h1M116 366.5h1M307 366.5h1M182 367.5h1M397 365.5h1M185 366.5h1M247 367.5h1M281 367.5h1M67 366.5h1M179 366.5h1M302 366.5h1M274 366.5h1M77 366.5h1M149 366.5h1M297 366.5h1M286 365.5h1M306 366.5h1M285 365.5h1M130 365.5h1M161 367.5h1M51 366.5h1M127 367.5h1M94 366.5h1M93 366.5h1M190 365.5h1M195 365.5h1M266 366.5h1M111 366.5h1M249 366.5h1M399 366.5h1M265 367.5h1M167 366.5h1M249 367.5h1M350 367.5h1M259 366.5h1M125 365.5h1M175 365.5h1M114 366.5h1M130 366.5h1M276 366.5h1M172 366.5h1M301 367.5h1M301 367.5h1M303 366.5h1M172 366.5h1M301 365.5h1M169 367.5h1M52 365.5h1M145 365.5h1M157 366.5h1M201 366.5h1M160 366.5h1M352 366.5h1M281 366.5h1M203 366.5h1M153 366.5h1M366 366.5h1M213 366.5h1M344 366.5h1M308 366.5h1M220 366.5h1M144 367.5h1M59 366.5h1M93 365.5h1M81 367.5h1M216 365.5h1M76 367.5h1M246 366.5h1M67 366.5h1M73 366.5h1M66 365.5h1M245 366.5h1M157 365.5h1M138 365.5h1M52 365.5h1M285 366.5h1M302 366.5h1M229 366.5h1M270 365.5h1M66 365.5h1M253 366.5h1M54 365.5h1M168 367.5h1M256 367.5h1M146 366.5h1M200 366.5h1M90 365.5h1M70 366.5h1M368 366.5h1M123 366.5h1M277 366.5h1M285 365.5h1M237 366.5h1M72 367.5h1M136 366.5h1M144 366.5h1M215 367.5h1M252 366.5h1M246 366.5h1M247 366.5h1M299 366.5h1M247 366.5h1M123 366.5h1M336 367.5h1M86 366.5h1M236 365.5h1M109 365.5h1M197 367.5h1M76 365.5h1M291 366.5h1M119 366.5h1M260 365.5h1M204 366.5h1M280 367.5h1M364 366.5h1M85 367.5h1M309 366.5h1M220 367.5h1M175 365.5h1M217 365.5h1M234 366.5h1M306 365.5h1M267 367.5h1M165 366.5h1M230 366.5h1M242 366.5h1M336 365.5h1M278 365.5h1M366 365.5h1M197 366.5h1M54 366.5h1M369 367.5h1M224 366.5h1M84 365.5h1M106 366.5h1M81 366.5h1M284 366.5h1M367 366.5h1M261 367.5h1M183 366.5h1M87 366.5h1M193 366.5h1M229 367.5h1M75 366.5h1M58 367.5h1M360 366.5h1M176 367.5h1M91 365.5h1M202 366.5h1M203 366.5h1M77 366.5h1M360 367.5h1M147 365.5h1M216 366.5h1M246 366.5h1M53 366.5h1M73 367.5h1M128 366.5h1M119 366.5h1M343 366.5h1M329 366.5h1M304 365.5h1M286 366.5h1M319 366.5h1M305 366.5h1M302 366.5h1M121 365.5h1M118 366.5h1M299 366.5h1M169 365.5h1M287 366.5h1M396 366.5h1M284 366.5h1M63 366.5h1M126 366.5h1M233 365.5h1M55 366.5h1M55 367.5h1M294 366.5h1M56 366.5h1M52 366.5h1M219 367.5h1M202 366.5h1M174 366.5h1M340 365.5h1M221 366.5h1M352 365.5h1M193 366.5h1M66 366.5h1M94 366.5h1M141 366.5h1M299 366.5h1M65 365.5h1M238 366.5h1M154 367.5h1M270 366.5h1M129 367.5h1M239 366.5h1M62 366.5h1M62 366.5h1M232 366.5h1M322 366.5h1M78 365.5h1M318 367.5h1M188 365.5h1M158 367.5h1M347 366.5h1M329 366.5h1M261 367.5h1M299 366.5h1M232 365.5h1M134 366.5h1M150 365.5h1M153 367.5h1M220 366.5h1M188 366.5h1M80 367.5h1M355 367.5h1M67 366.5h1M95 366.5h1M222 366.5h1M184 365.5h1M157 366.5h1M198 367.5h1M386 365.5h1M105 366.5h1M57 366.5h1M410 366.5h1M120 365.5h1M53 367.5h1M217 367.5h1M238 366.5h1M278 367.5h1M334 366.5h1M419 366.5h1M222 366.5h1M261 366.5h1M182 366.5h1M119 366.5h1M111 367.5h1M279 365.5h1M298 366.5h1M226 367.5h1M236 366.5h1M374 366.5h1M338 365.5h1M231 366.5h1M283 366.5h1M247 366.5h1M273 365.5h1M188 366.5h1M288 366.5h1M229 365.5h1M109 365.5h1M107 366.5h1M415 367.5h1M192 366.5h1M417 366.5h1M252 367.5h1M314 365.5h1M107 367.5h1M101 366.5h1M130 365.5h1M95 365.5h1M227 366.5h1M52 366.5h1M163 367.5h1M277 366.5h1M110 366.5h1M256 365.5h1M175 366.5h1M274 366.5h1M299 367.5h1M265 366.5h1M200 366.5h1M231 365.5h1M101 367.5h1M416 366.5h1M233 366.5h1M155 366.5h1M66 366.5h1M143 367.5h1M305 366.5h1M269 366.5h1M125 366.5h1M182 366.5h1M240 367.5h1M116 367.5h1M141 366.5h1M402 366.5h1M99 367.5h1M235 366.5h1M278 367.5h1M345 366.5h1M152 367.5h1M277 367.5h1M305 366.5h1M138 366.5h1M389 366.5h1M332 365.5h1M278 367.5h1M235 367.5h1M155 366.5h1M268 367.5h1M122 366.5h1M99 367.5h1M384 365.5h1M180 367.5h1M184 367.5h1M283 366.5h1M70 366.5h1M167 365.5h1M191 366.5h1M167 365.5h1M112 366.5h1M218 366.5h1M320 366.5h1M406 366.5h1M55 365.5h1M231 367.5h1M198 366.5h1M232 366.5h1M298 335.5h1M210 332.5h1M263 325.5h1M232 298.5h1M65 322.5h1" stroke="#e01010" stroke-width="1"/><text transform="translate(42.2,404.9) scale(0.99,1)" font-size="12" font-weight="bold" fill="#000" xml:space="preserve" >transfer size</text><text transform="translate(181.5,404.9) scale(0.99,1)" font-size="12" font-weight="bold" text-anchor="middle" fill="#000" xml:space="preserve" >operations / sec</text><text transform="translate(292.5,404.9) scale(0.99,1)" font-size="12" font-weight="bold" text-anchor="middle" fill="#000" xml:space="preserve" >avg. access time</text><text transform="translate(406.5,404.9) scale(0.99,1)" font-size="12" font-weight="bold" text-anchor="middle" fill="#000" xml:space="preserve" >max. access time</text><text transform="translate(545,404.9) scale(0.99,1)" font-size="12" font-weight="bold" text-anchor="end" fill="#000" xml:space="preserve" >avg. speed</text><rect x="35" y="407.8" width="521" height="2" fill="#6a6a6a" /><rect x="125.5" y="394.5" width="2" height="104" fill="#6a6a6a" /><rect x="234.5" y="394.5" width="2" height="104" fill="#6a6a6a" /><rect x="350.7" y="394.5" width="2" height="104" fill="#6a6a6a" /><rect x="460" y="394.5" width="2" height="104" fill="#6a6a6a" /><rect x="20.5" y="416.1" width="7.5" height="8" fill="#f0f000" stroke="#000" stroke-width="1" /><rect x="35.5" y="414.6" width="12" height="12" fill="#fff" stroke="#333" stroke-width="1" /><path d="M37.5,420.6 L40,423.6 L45.5,417.1" fill="none" stroke="#333" stroke-width="1.2"/><text transform="translate(51,424.6) scale(0.87,1)" font-size="12" fill="#000" xml:space="preserve" >512 bytes</text><text transform="translate(217.8,424.6) scale(1.03,1)" font-size="12" font-weight="bold" text-anchor="end" fill="#000" xml:space="preserve" >20514 IOPS</text><text transform="translate(326.8,424.6) scale(1.03,1)" font-size="12" font-weight="bold" text-anchor="end" fill="#000" xml:space="preserve" >0.048 ms</text><text transform="translate(437,424.6) scale(1.03,1)" font-size="12" font-weight="bold" text-anchor="end" fill="#000" xml:space="preserve" >0.608 ms</text><text transform="translate(546,424.6) scale(1.03,1)" font-size="12" font-weight="bold" text-anchor="end" fill="#000" xml:space="preserve" >10.017 MB/s</text><rect x="20.5" y="432.7" width="7.5" height="8" fill="#e01010" stroke="#000" stroke-width="1" /><rect x="35.5" y="431.2" width="12" height="12" fill="#fff" stroke="#333" stroke-width="1" /><path d="M37.5,437.2 L40,440.2 L45.5,433.7" fill="none" stroke="#333" stroke-width="1.2"/><text transform="translate(51,441.2) scale(0.87,1)" font-size="12" fill="#000" xml:space="preserve" >4 KB</text><text transform="translate(217.8,441.2) scale(1.03,1)" font-size="12" font-weight="bold" text-anchor="end" fill="#000" xml:space="preserve" >20541 IOPS</text><text transform="translate(326.8,441.2) scale(1.03,1)" font-size="12" font-weight="bold" text-anchor="end" fill="#000" xml:space="preserve" >0.048 ms</text><text transform="translate(437,441.2) scale(1.03,1)" font-size="12" font-weight="bold" text-anchor="end" fill="#000" xml:space="preserve" >1.615 ms</text><text transform="translate(546,441.2) scale(1.03,1)" font-size="12" font-weight="bold" text-anchor="end" fill="#000" xml:space="preserve" >80.238 MB/s</text><rect x="20.5" y="449.7" width="7.5" height="8" fill="#10d010" stroke="#000" stroke-width="1" /><rect x="35.5" y="448.2" width="12" height="12" fill="#fff" stroke="#333" stroke-width="1" /><path d="M37.5,454.2 L40,457.2 L45.5,450.7" fill="none" stroke="#333" stroke-width="1.2"/><text transform="translate(51,458.2) scale(0.87,1)" font-size="12" fill="#000" xml:space="preserve" >64 KB</text><text transform="translate(217.8,458.2) scale(1.03,1)" font-size="12" font-weight="bold" text-anchor="end" fill="#000" xml:space="preserve" >11316 IOPS</text><text transform="translate(326.8,458.2) scale(1.03,1)" font-size="12" font-weight="bold" text-anchor="end" fill="#000" xml:space="preserve" >0.088 ms</text><text transform="translate(437,458.2) scale(1.03,1)" font-size="12" font-weight="bold" text-anchor="end" fill="#000" xml:space="preserve" >1.362 ms</text><text transform="translate(546,458.2) scale(1.03,1)" font-size="12" font-weight="bold" text-anchor="end" fill="#000" xml:space="preserve" >707.302 MB/s</text><rect x="20.5" y="466.6" width="7.5" height="8" fill="#1a70f0" stroke="#000" stroke-width="1" /><rect x="35.5" y="465.1" width="12" height="12" fill="#fff" stroke="#333" stroke-width="1" /><path d="M37.5,471.1 L40,474.1 L45.5,467.6" fill="none" stroke="#333" stroke-width="1.2"/><text transform="translate(51,475.1) scale(0.87,1)" font-size="12" fill="#000" xml:space="preserve" >1 MB</text><text transform="translate(217.8,475.1) scale(1.03,1)" font-size="12" font-weight="bold" text-anchor="end" fill="#000" xml:space="preserve" >3338 IOPS</text><text transform="translate(326.8,475.1) scale(1.03,1)" font-size="12" font-weight="bold" text-anchor="end" fill="#000" xml:space="preserve" >0.299 ms</text><text transform="translate(437,475.1) scale(1.03,1)" font-size="12" font-weight="bold" text-anchor="end" fill="#000" xml:space="preserve" >2.148 ms</text><text transform="translate(546,475.1) scale(1.03,1)" font-size="12" font-weight="bold" text-anchor="end" fill="#000" xml:space="preserve" >3338.307</text><rect x="20.5" y="484.3" width="7.5" height="8" fill="#20e0f0" stroke="#000" stroke-width="1" /><rect x="35.5" y="482.8" width="12" height="12" fill="#fff" stroke="#333" stroke-width="1" /><path d="M37.5,488.8 L40,491.8 L45.5,485.3" fill="none" stroke="#333" stroke-width="1.2"/><text transform="translate(51,492.8) scale(0.87,1)" font-size="12" fill="#000" xml:space="preserve" >Random</text><text transform="translate(217.8,492.8) scale(1.03,1)" font-size="12" font-weight="bold" text-anchor="end" fill="#000" xml:space="preserve" >4868 IOPS</text><text transform="translate(326.8,492.8) scale(1.03,1)" font-size="12" font-weight="bold" text-anchor="end" fill="#000" xml:space="preserve" >0.205 ms</text><text transform="translate(437,492.8) scale(1.03,1)" font-size="12" font-weight="bold" text-anchor="end" fill="#000" xml:space="preserve" >1.998 ms</text><text transform="translate(546,492.8) scale(1.03,1)" font-size="12" font-weight="bold" text-anchor="end" fill="#000" xml:space="preserve" >2470.124</text><rect x="471.5" y="151.5" width="72" height="20" fill="#e1e1e1" stroke="#adadad" stroke-width="1" /><text transform="translate(507.5,165.5) scale(0.88,1)" font-size="12" text-anchor="middle" fill="#000" xml:space="preserve" >Start</text><rect x="462" y="182" width="101" height="1" fill="#a0a0a0" /><circle cx="473" cy="194.5" r="5.8" fill="#fff" stroke="#333" stroke-width="1"/><circle cx="473" cy="194.5" r="3.2" fill="#333"/><text transform="translate(483,198.5) scale(0.88,1)" font-size="12" fill="#000" xml:space="preserve" >Read</text><circle cx="473" cy="210.5" r="5.8" fill="#fff" stroke="#333" stroke-width="1"/><text transform="translate(483,215) scale(0.88,1)" font-size="12" fill="#000" xml:space="preserve" >Write</text><rect x="462" y="221" width="101" height="1" fill="#a0a0a0" /><rect x="467.5" y="230.0" width="12" height="12" fill="#fff" stroke="#333" stroke-width="1" /><text transform="translate(483,240) scale(0.87,1)" font-size="12" fill="#000" xml:space="preserve" >Short stroke</text><rect x="467.5" y="250.0" width="62" height="19.5" fill="#fff" stroke="#b8b8b8" stroke-width="1" /><rect x="511.5" y="251.0" width="17" height="17.5" fill="#f0f0f0" /><rect x="511.5" y="251.0" width="0.8" height="17.5" fill="#d0d0d0" /><path d="M517,257.0 L520,254.0 L523,257.0 Z M517,262.0 L520,265.0 L523,262.0 Z" fill="#606060"/><text transform="translate(471,263.5) scale(0.87,1)" font-size="12" fill="#8a8a8a" xml:space="preserve" >40</text><text transform="translate(539.5,263.5) scale(0.88,1)" font-size="12" fill="#000" xml:space="preserve" >gB</text><rect x="462" y="278" width="99" height="1" fill="#a0a0a0" /><rect x="467.5" y="290.0" width="12" height="12" fill="#fff" stroke="#333" stroke-width="1" /><path d="M469.5,296.0 L472,299.0 L477.5,292.5" fill="none" stroke="#333" stroke-width="1.2"/><text transform="translate(483,299.3) scale(0.87,1)" font-size="12" fill="#000" xml:space="preserve" >4 KB align</text></g><g transform="translate(587,520)"><rect x="0" y="0" width="578" height="513" fill="#f0f0f0" /><rect x="0" y="0" width="578" height="30" fill="#fff" /><g transform="translate(9,6.5)"><g transform="rotate(50 7.2 7.8)"><rect x="3" y="2" width="8.6" height="11.6" rx="0.8" fill="#1e1e1e"/><circle cx="7.3" cy="6.3" r="3.5" fill="#f2b04a"/><circle cx="7.3" cy="6.3" r="1.1" fill="#8ea0b8"/><rect x="5" y="10.3" width="4.5" height="2.2" fill="#777"/></g></g><text transform="translate(29.5,19) scale(0.972,1)" font-size="12" fill="#000" xml:space="preserve" >HD Tune Pro 5.00 - Hard Disk Utility</text><rect x="459" y="14" width="10" height="1" fill="#111" /><rect x="504.5" y="9.5" width="9" height="9" fill="none" stroke="#111" stroke-width="1" /><path d="M550,9 L560,19 M560,9 L550,19" stroke="#111" stroke-width="1"/><rect x="0" y="30" width="578" height="19" fill="#dde4ed" /><text transform="translate(7,44) scale(0.9,1)" font-size="12" fill="#222" xml:space="preserve" >File</text><rect x="7" y="45" width="6" height="1" fill="#222" /><text transform="translate(43,44) scale(0.9,1)" font-size="12" fill="#222" xml:space="preserve" >Help</text><rect x="43" y="45" width="7" height="1" fill="#222" /><rect x="0" y="49" width="578" height="45" fill="url(#tbg)" /><rect x="0" y="94" width="578" height="1.2" fill="#1a1a1a" /><rect x="11.5" y="58.5" width="223" height="20" fill="#e5e5e5" stroke="#adadad" stroke-width="1" /><text transform="translate(15,72.5) scale(0.876,1)" font-size="12" fill="#000" xml:space="preserve" >AMD-RAIDArray 1  (766 gB)</text><path d="M222,67.5 L226,71.5 L230,67.5" fill="none" stroke="#444" stroke-width="1"/><rect x="246.5" y="56.5" width="26" height="25" fill="#e1e1e1" stroke="#adadad" stroke-width="1" /><g transform="translate(252,61)"><rect x="5.5" y="1" width="4" height="12" rx="2" fill="#fff" stroke="#555" stroke-width="0.8"/><rect x="6.3" y="2" width="2.4" height="4" fill="#30d0f0"/><rect x="6.3" y="6" width="2.4" height="7" fill="#e01010"/><circle cx="7.5" cy="14.5" r="3" fill="#e01010" stroke="#555" stroke-width="0.8"/></g><text transform="translate(276,73) scale(0.95,1)" font-size="12" font-weight="bold" fill="#000" xml:space="preserve" >– °C</text><rect x="348.5" y="56.5" width="26" height="25" fill="#e1e1e1" stroke="#adadad" stroke-width="1" /><g transform="translate(353,61)"><g filter="url(#sh)"><path d="M1,1 H7 L9,3 V12 H1 Z" fill="#fff" stroke="#000" stroke-width="1"/><path d="M6,4 H12 L14,6 V15 H6 Z" fill="#fff" stroke="#000" stroke-width="1"/><path d="M2.5,5 H7 M2.5,7 H7 M2.5,9 H7 M7.5,8 H12.5 M7.5,10 H12.5 M7.5,12 H12.5" stroke="#2060e0" stroke-width="1"/></g></g><rect x="378.5" y="56.5" width="26" height="25" fill="#e1e1e1" stroke="#adadad" stroke-width="1" /><g transform="translate(383,61)"><g filter="url(#sh)"><path d="M1,1 H7 L9,3 V12 H1 Z" fill="#fff" stroke="#000" stroke-width="1"/><path d="M6,4 H12 L14,6 V15 H6 Z" fill="#fff" stroke="#000" stroke-width="1"/><rect x="2.5" y="4" width="4" height="5" fill="#30c060"/><rect x="3.5" y="5" width="2" height="2" fill="#e03030"/><rect x="7.5" y="8" width="5" height="5" fill="#30c060"/><rect x="9" y="9.5" width="2" height="2" fill="#e03030"/></g></g><rect x="408.5" y="56.5" width="26" height="25" fill="#e1e1e1" stroke="#adadad" stroke-width="1" /><g transform="translate(413,61)"><g filter="url(#sh)"><path d="M1,1 H14 L15,2 V15 H1 Z" fill="#2040c0" stroke="#000" stroke-width="1"/><rect x="3.5" y="1.5" width="9" height="6" fill="#d8d8d8"/><path d="M4.5,3 H11.5 M4.5,5 H11.5" stroke="#999" stroke-width="0.8"/><rect x="4.5" y="10" width="7" height="5" fill="#333"/><rect x="9" y="11" width="1.5" height="3" fill="#ddd"/></g></g><rect x="438.5" y="56.5" width="26" height="25" fill="#e1e1e1" stroke="#adadad" stroke-width="1" /><g transform="translate(443,61)"><g filter="url(#sh)"><ellipse cx="6" cy="6" rx="3.6" ry="4.2" transform="rotate(-40 6 6)" fill="none" stroke="#000" stroke-width="3.4"/><ellipse cx="6" cy="6" rx="3.6" ry="4.2" transform="rotate(-40 6 6)" fill="none" stroke="#e8d020" stroke-width="1.8"/><ellipse cx="10.5" cy="10.5" rx="3.6" ry="4.2" transform="rotate(-40 10.5 10.5)" fill="none" stroke="#000" stroke-width="3.4"/><ellipse cx="10.5" cy="10.5" rx="3.6" ry="4.2" transform="rotate(-40 10.5 10.5)" fill="none" stroke="#e8d020" stroke-width="1.8"/></g></g><rect x="472.5" y="56.5" width="26" height="25" fill="#e1e1e1" stroke="#adadad" stroke-width="1" /><g transform="translate(476,59.5)"><defs><linearGradient id="dng" x1="0" y1="0" x2="0" y2="1"><stop offset="0" stop-color="#e040e0"/><stop offset="1" stop-color="#9010a0"/></linearGradient></defs><rect x="0" y="0" width="19" height="19" rx="2" fill="url(#dng)"/><path d="M8,3 H11 V10.5 H14.5 L9.5,16 L4.5,10.5 H8 Z" fill="#fff"/></g><rect x="514.5" y="56.5" width="51" height="25" fill="#e1e1e1" stroke="#adadad" stroke-width="1" /><text transform="translate(540,73) scale(0.9,1)" font-size="12" text-anchor="middle" fill="#000" xml:space="preserve" >Exit</text><rect x="11.5" y="138.5" width="554" height="371" fill="#fff" stroke="#d9d9d9" stroke-width="1" /><rect x="13.5" y="98.5" width="106" height="20" fill="#f0f0f0" stroke="#d9d9d9" stroke-width="1" /><g transform="translate(27,100)"><g filter="url(#sh)"><path d="M6,1.5 H10 L11.5,3 V7 L10.5,10.5 H5.5 L4.5,7 V3 Z" fill="#f0e800" stroke="#000" stroke-width="1.3"/><ellipse cx="8" cy="13.8" rx="2.2" ry="1.6" fill="#b8a020" stroke="#000" stroke-width="1.2"/></g></g><text transform="translate(50.6,113) scale(0.87,1)" font-size="12" fill="#000" xml:space="preserve" >Benchmark</text><rect x="119.5" y="98.5" width="70" height="20" fill="#f0f0f0" stroke="#d9d9d9" stroke-width="1" /><g transform="translate(133,100)"><g filter="url(#sh)"><ellipse cx="8" cy="2.8" rx="2.3" ry="1.9" fill="#20c8f8" stroke="#000" stroke-width="1.1"/><path d="M4.5,6 H9.5 V13.5 H11 V15 H3.5 V13.5 L5.5,12 V7.5 H4.5 Z" fill="#1060f0" stroke="#000" stroke-width="1.1"/></g></g><text transform="translate(156.6,113) scale(0.87,1)" font-size="12" fill="#000" xml:space="preserve" >Info</text><rect x="189.5" y="98.5" width="82" height="20" fill="#f0f0f0" stroke="#d9d9d9" stroke-width="1" /><g transform="translate(203,100)"><g filter="url(#sh)"><path d="M6,1 H10 V6 H15 V10 H10 V15 H6 V10 H1 V6 H6 Z" fill="#f02020" stroke="#000" stroke-width="1.2"/></g></g><text transform="translate(226.6,113) scale(0.87,1)" font-size="12" fill="#000" xml:space="preserve" >Health</text><rect x="271.5" y="98.5" width="102" height="20" fill="#f0f0f0" stroke="#d9d9d9" stroke-width="1" /><g transform="translate(285,100)"><g filter="url(#sh)"><path d="M10,10 L15,15" stroke="#000" stroke-width="4" stroke-linecap="round"/><path d="M10,10 L14.5,14.5" stroke="#1020d0" stroke-width="2" stroke-linecap="round"/><path d="M3.5,0.8 H8.5 L11.2,3.5 V8.5 L8.5,11.2 H3.5 L0.8,8.5 V3.5 Z" fill="#40e040" stroke="#000" stroke-width="1.2"/></g></g><text transform="translate(308.6,113) scale(0.87,1)" font-size="12" fill="#000" xml:space="preserve" >Error Scan</text><rect x="373.5" y="98.5" width="114" height="20" fill="#f0f0f0" stroke="#d9d9d9" stroke-width="1" /><g transform="translate(387,100)"><g filter="url(#sh)"><path d="M1,3 L2,1.5 H5 L6,3 H11 V5 H1 Z" fill="#f8e040" stroke="#000" stroke-width="1.1"/><path d="M1,3 V15 H3 V5 H13 V15 H3" fill="#e8b800" stroke="#000" stroke-width="1.1"/><rect x="3" y="5" width="10" height="10" fill="#e0b010" stroke="#000" stroke-width="1.1"/></g></g><text transform="translate(410.6,113) scale(0.87,1)" font-size="12" fill="#000" xml:space="preserve" >Folder Usage</text><rect x="487.5" y="98.5" width="77" height="20" fill="#f0f0f0" stroke="#d9d9d9" stroke-width="1" /><g transform="translate(501,100)"><defs><linearGradient id="trg" x1="0" x2="1"><stop offset="0" stop-color="#888"/><stop offset="0.3" stop-color="#eee"/><stop offset="0.6" stop-color="#777"/><stop offset="1" stop-color="#222"/></linearGradient></defs><g filter="url(#sh)"><path d="M1,2.5 H5.5 V1 H9.5 V2.5 H14 V4.5 H1 Z" fill="#aaa" stroke="#000" stroke-width="1.1"/><path d="M2,4.5 H13 V15 H2 Z" fill="url(#trg)" stroke="#000" stroke-width="1.1"/></g></g><text transform="translate(524.6,113) scale(0.87,1)" font-size="12" fill="#000" xml:space="preserve" >Erase</text><rect x="13.5" y="118.5" width="127" height="20" fill="#f0f0f0" stroke="#d9d9d9" stroke-width="1" /><g transform="translate(29,119)"><g filter="url(#sh)"><path d="M0.5,0.5 H10.5 L13.5,3.5 V15.5 H0.5 Z" fill="#e6e6e6" stroke="#000" stroke-width="1.2"/><path d="M5,2.5 H8.5 L9.5,4 V7 L8.5,9.5 H5 L4,7 V4 Z" fill="#d030d0" stroke="#000" stroke-width="1"/><ellipse cx="6.8" cy="12.5" rx="1.7" ry="1.2" fill="#c030c0" stroke="#000" stroke-width="0.9"/></g></g><text transform="translate(52,133) scale(0.87,1)" font-size="12" fill="#000" xml:space="preserve" >File Benchmark</text><rect x="140.5" y="118.5" width="113" height="20" fill="#f0f0f0" stroke="#d9d9d9" stroke-width="1" /><g transform="translate(156,119)"><g filter="url(#sh)"><rect x="0.5" y="0.5" width="15" height="15" fill="#fffbc0" stroke="#000" stroke-width="1.2"/><path d="M1,6 H3 V15 H1 Z M5,9 H7 V15 H5 Z M9,6 H12 V15 H9 Z M14,8 H15 V15 H14Z" fill="#00ee00"/><path d="M3,9 H5 V15 H3 Z M7,5 H9 V15 H7 Z M12,8 H14 V15 H12 Z" fill="#4040ff"/></g></g><text transform="translate(179,133) scale(0.87,1)" font-size="12" fill="#000" xml:space="preserve" >Disk monitor</text><rect x="253.5" y="118.5" width="77" height="20" fill="#f0f0f0" stroke="#d9d9d9" stroke-width="1" /><g transform="translate(269,119)"><g filter="url(#sh)"><path d="M0.8,6 L4,4.5 L9.5,0.8 V15 L4,11 L0.8,10 Z" fill="#f0e800" stroke="#000" stroke-width="1.2"/><path d="M11.5,5.5 Q13,8 11.5,10.5 M13,3.5 Q16,8 13,12.5" fill="none" stroke="#000" stroke-width="1.1"/></g></g><text transform="translate(292,133) scale(0.87,1)" font-size="12" fill="#000" xml:space="preserve" >AAM</text><rect x="330.5" y="118.5" width="132" height="20" fill="#f0f0f0" stroke="#d9d9d9" stroke-width="1" /><g transform="translate(346,119)"><g filter="url(#sh)"><rect x="0.5" y="0.5" width="15" height="15" fill="#fff8c0" stroke="#000" stroke-width="1.2"/><circle cx="3.5" cy="7" r="0.8" fill="#2020ff"/><circle cx="6" cy="5.5" r="0.8" fill="#2020ff"/><circle cx="8" cy="6.5" r="0.8" fill="#2020ff"/><circle cx="10" cy="5.5" r="0.8" fill="#2020ff"/><circle cx="12" cy="3.5" r="0.8" fill="#2020ff"/><circle cx="12" cy="5" r="0.8" fill="#2020ff"/><circle cx="4.5" cy="9" r="0.8" fill="#2020ff"/><circle cx="4" cy="9.5" r="0.8" fill="#ff2020"/><circle cx="4" cy="11" r="0.8" fill="#ff2020"/><circle cx="2.5" cy="13" r="0.8" fill="#ff2020"/><circle cx="8" cy="8" r="0.8" fill="#ff2020"/><circle cx="8" cy="11" r="0.8" fill="#ff2020"/><circle cx="10" cy="10" r="0.8" fill="#ff2020"/><circle cx="12" cy="8" r="0.8" fill="#ff2020"/><circle cx="13" cy="10" r="0.8" fill="#ff2020"/></g></g><text transform="translate(369,133) scale(0.87,1)" font-size="12" fill="#000" xml:space="preserve" >Random Access</text><rect x="460" y="116" width="106" height="23" fill="#fff" /><path d="M460.5,139 V116.5 H565.5 V139" fill="none" stroke="#d9d9d9" stroke-width="1"/><g transform="translate(476.5,119)"><g filter="url(#sh)"><rect x="0.5" y="0.5" width="15" height="15" fill="#fff8c0" stroke="#000" stroke-width="1.2"/><path d="M1,7 H3 V15 H1 Z M5,10 H6 V15 H5 Z" fill="#00ee00"/><path d="M3,9 H5 V15 H3Z" fill="#4040ff"/><rect x="6.5" y="6.5" width="9" height="9" fill="#f4f4f4" stroke="#000" stroke-width="1"/><rect x="7" y="7" width="8" height="1.5" fill="#1020e0"/><circle cx="8.5" cy="10" r="0.7" fill="#f00"/><circle cx="10.5" cy="10" r="0.7" fill="#22f"/><circle cx="12.5" cy="10" r="0.7" fill="#f00"/><circle cx="8.5" cy="12" r="0.7" fill="#0a0"/><circle cx="10.5" cy="12" r="0.7" fill="#f00"/><circle cx="12.5" cy="12" r="0.7" fill="#f00"/><circle cx="8.5" cy="14" r="0.7" fill="#f00"/><circle cx="10.5" cy="14" r="0.7" fill="#f00"/><circle cx="12.5" cy="14" r="0.7" fill="#22f"/></g></g><text transform="translate(500.3,131) scale(0.87,1)" font-size="12" fill="#000" xml:space="preserve" >Extra tests</text><rect x="26.5" y="152" width="411.5" height="189" fill="#fff" stroke="#828790" stroke-width="1" /><text transform="translate(34.4,168.5) scale(0.88,1)" font-size="12" fill="#000" xml:space="preserve" >Test</text><text transform="translate(271,168.5) scale(0.88,1)" font-size="12" text-anchor="end" fill="#000" xml:space="preserve" >I/O</text><text transform="translate(336,168.5) scale(0.88,1)" font-size="12" text-anchor="end" fill="#000" xml:space="preserve" >Time</text><text transform="translate(426,168.5) scale(0.88,1)" font-size="12" text-anchor="end" fill="#000" xml:space="preserve" >Transfer</text><rect x="197.5" y="154" width="1" height="20" fill="#e5e5e5" /><rect x="197.5" y="177" width="1" height="162" fill="#f0f0f0" /><rect x="277.5" y="154" width="1" height="20" fill="#e5e5e5" /><rect x="277.5" y="177" width="1" height="162" fill="#f0f0f0" /><rect x="342" y="154" width="1" height="20" fill="#e5e5e5" /><rect x="342" y="177" width="1" height="162" fill="#f0f0f0" /><rect x="431.7" y="154" width="1" height="20" fill="#e5e5e5" /><rect x="431.7" y="177" width="1" height="162" fill="#f0f0f0" /><rect x="27" y="193.5" width="410" height="1" fill="#f0f0f0" /><rect x="32.5" y="179.5" width="12" height="12" fill="#fff" stroke="#333" stroke-width="1" /><path d="M34.5,185.5 L37,188.5 L42.5,182.0" fill="none" stroke="#333" stroke-width="1.2"/><text transform="translate(50.6,189.5) scale(0.888,1)" font-size="12" fill="#000" xml:space="preserve" >Random seek</text><text transform="translate(271,189.5) scale(0.88,1)" font-size="12" text-anchor="end" fill="#000" xml:space="preserve" >23227 IOPS</text><text transform="translate(336,189.5) scale(0.88,1)" font-size="12" text-anchor="end" fill="#000" xml:space="preserve" >0.043 ms</text><text transform="translate(426,189.5) scale(0.88,1)" font-size="12" text-anchor="end" fill="#000" xml:space="preserve" >11.341 MB/s</text><rect x="27" y="210.45" width="410" height="1" fill="#f0f0f0" /><rect x="32.5" y="196.45" width="12" height="12" fill="#fff" stroke="#333" stroke-width="1" /><path d="M34.5,202.45 L37,205.45 L42.5,198.95" fill="none" stroke="#333" stroke-width="1.2"/><text transform="translate(50.6,206.45) scale(0.888,1)" font-size="12" fill="#000" xml:space="preserve" >Random seek 4 KB</text><text transform="translate(271,206.45) scale(0.88,1)" font-size="12" text-anchor="end" fill="#000" xml:space="preserve" >24934 IOPS</text><text transform="translate(336,206.45) scale(0.88,1)" font-size="12" text-anchor="end" fill="#000" xml:space="preserve" >0.040 ms</text><text transform="translate(426,206.45) scale(0.88,1)" font-size="12" text-anchor="end" fill="#000" xml:space="preserve" >97.397 MB/s</text><rect x="27" y="227.4" width="410" height="1" fill="#f0f0f0" /><rect x="32.5" y="213.4" width="12" height="12" fill="#fff" stroke="#333" stroke-width="1" /><path d="M34.5,219.4 L37,222.4 L42.5,215.9" fill="none" stroke="#333" stroke-width="1.2"/><text transform="translate(50.6,223.4) scale(0.888,1)" font-size="12" fill="#000" xml:space="preserve" >Butterfly seek</text><text transform="translate(271,223.4) scale(0.88,1)" font-size="12" text-anchor="end" fill="#000" xml:space="preserve" >25787 IOPS</text><text transform="translate(336,223.4) scale(0.88,1)" font-size="12" text-anchor="end" fill="#000" xml:space="preserve" >0.039 ms</text><text transform="translate(426,223.4) scale(0.88,1)" font-size="12" text-anchor="end" fill="#000" xml:space="preserve" >12.591 MB/s</text><rect x="27" y="244.35" width="410" height="1" fill="#f0f0f0" /><rect x="32.5" y="230.35" width="12" height="12" fill="#fff" stroke="#333" stroke-width="1" /><path d="M34.5,236.35 L37,239.35 L42.5,232.85" fill="none" stroke="#333" stroke-width="1.2"/><text transform="translate(50.6,240.35) scale(0.888,1)" font-size="12" fill="#000" xml:space="preserve" >Random seek / size 64 KB</text><text transform="translate(271,240.35) scale(0.88,1)" font-size="12" text-anchor="end" fill="#000" xml:space="preserve" >20857 IOPS</text><text transform="translate(336,240.35) scale(0.88,1)" font-size="12" text-anchor="end" fill="#000" xml:space="preserve" >0.048 ms</text><text transform="translate(426,240.35) scale(0.88,1)" font-size="12" text-anchor="end" fill="#000" xml:space="preserve" >320.704 MB/s</text><rect x="27" y="261.3" width="410" height="1" fill="#f0f0f0" /><rect x="32.5" y="247.3" width="12" height="12" fill="#fff" stroke="#333" stroke-width="1" /><path d="M34.5,253.3 L37,256.3 L42.5,249.8" fill="none" stroke="#333" stroke-width="1.2"/><text transform="translate(50.6,257.3) scale(0.888,1)" font-size="12" fill="#000" xml:space="preserve" >Random seek / size 8 MB</text><text transform="translate(271,257.3) scale(0.88,1)" font-size="12" text-anchor="end" fill="#000" xml:space="preserve" >1358 IOPS</text><text transform="translate(336,257.3) scale(0.88,1)" font-size="12" text-anchor="end" fill="#000" xml:space="preserve" >0.736 ms</text><text transform="translate(426,257.3) scale(0.88,1)" font-size="12" text-anchor="end" fill="#000" xml:space="preserve" >5505.811 MB/s</text><rect x="27" y="278.25" width="410" height="1" fill="#f0f0f0" /><rect x="32.5" y="264.25" width="12" height="12" fill="#fff" stroke="#333" stroke-width="1" /><path d="M34.5,270.25 L37,273.25 L42.5,266.75" fill="none" stroke="#333" stroke-width="1.2"/><text transform="translate(50.6,274.25) scale(0.888,1)" font-size="12" fill="#000" xml:space="preserve" >Sequential outer</text><text transform="translate(271,274.25) scale(0.88,1)" font-size="12" text-anchor="end" fill="#000" xml:space="preserve" >58225 IOPS</text><text transform="translate(336,274.25) scale(0.88,1)" font-size="12" text-anchor="end" fill="#000" xml:space="preserve" >0.017 ms</text><text transform="translate(426,274.25) scale(0.88,1)" font-size="12" text-anchor="end" fill="#000" xml:space="preserve" >3639.063 MB/s</text><rect x="27" y="295.2" width="410" height="1" fill="#f0f0f0" /><rect x="32.5" y="281.2" width="12" height="12" fill="#fff" stroke="#333" stroke-width="1" /><path d="M34.5,287.2 L37,290.2 L42.5,283.7" fill="none" stroke="#333" stroke-width="1.2"/><text transform="translate(50.6,291.2) scale(0.888,1)" font-size="12" fill="#000" xml:space="preserve" >Sequential middle</text><text transform="translate(271,291.2) scale(0.88,1)" font-size="12" text-anchor="end" fill="#000" xml:space="preserve" >61734 IOPS</text><text transform="translate(336,291.2) scale(0.88,1)" font-size="12" text-anchor="end" fill="#000" xml:space="preserve" >0.016 ms</text><text transform="translate(426,291.2) scale(0.88,1)" font-size="12" text-anchor="end" fill="#000" xml:space="preserve" >3858.352 MB/s</text><rect x="27" y="312.15" width="410" height="1" fill="#f0f0f0" /><rect x="32.5" y="298.15" width="12" height="12" fill="#fff" stroke="#333" stroke-width="1" /><path d="M34.5,304.15 L37,307.15 L42.5,300.65" fill="none" stroke="#333" stroke-width="1.2"/><text transform="translate(50.6,308.15) scale(0.888,1)" font-size="12" fill="#000" xml:space="preserve" >Sequential inner</text><text transform="translate(271,308.15) scale(0.88,1)" font-size="12" text-anchor="end" fill="#000" xml:space="preserve" >64508 IOPS</text><text transform="translate(336,308.15) scale(0.88,1)" font-size="12" text-anchor="end" fill="#000" xml:space="preserve" >0.016 ms</text><text transform="translate(426,308.15) scale(0.88,1)" font-size="12" text-anchor="end" fill="#000" xml:space="preserve" >4031.738 MB/s</text><rect x="27" y="329.1" width="410" height="1" fill="#f0f0f0" /><rect x="32.5" y="315.1" width="12" height="12" fill="#fff" stroke="#333" stroke-width="1" /><path d="M34.5,321.1 L37,324.1 L42.5,317.6" fill="none" stroke="#333" stroke-width="1.2"/><text transform="translate(50.6,325.1) scale(0.888,1)" font-size="12" fill="#000" xml:space="preserve" >Burst rate</text><text transform="translate(271,325.1) scale(0.88,1)" font-size="12" text-anchor="end" fill="#000" xml:space="preserve" >5915 IOPS</text><text transform="translate(336,325.1) scale(0.88,1)" font-size="12" text-anchor="end" fill="#000" xml:space="preserve" >0.169 ms</text><text transform="translate(426,325.1) scale(0.88,1)" font-size="12" text-anchor="end" fill="#000" xml:space="preserve" >369.695 MB/s</text><rect x="32.5" y="351.5" width="12" height="12" fill="#fff" stroke="#333" stroke-width="1" /><path d="M34.5,357.5 L37,360.5 L42.5,354" fill="none" stroke="#333" stroke-width="1.2"/><text transform="translate(47.5,361.5) scale(0.88,1)" font-size="12" fill="#000" xml:space="preserve" >Cache</text><defs><linearGradient id="cbg4" x1="0" y1="0" x2="0" y2="1"><stop offset="0" stop-color="#000"/><stop offset="1" stop-color="#3e3e3e"/></linearGradient></defs><rect x="134.5" y="388.3" width="292" height="95.6" fill="#000" /><rect x="136" y="390" width="289.5" height="91.6" fill="url(#cbg4)" /><rect x="136" y="390" width="1" height="92" fill="#7a7a7a" /><rect x="136" y="483.5" width="1" height="2.5" fill="#555" /><rect x="141" y="390" width="1" height="92" fill="#4c4c4c" /><rect x="145" y="390" width="1" height="92" fill="#7a7a7a" /><rect x="145" y="483.5" width="1" height="2.5" fill="#555" /><rect x="150" y="390" width="1" height="92" fill="#4c4c4c" /><rect x="154" y="390" width="1" height="92" fill="#7a7a7a" /><rect x="154" y="483.5" width="1" height="2.5" fill="#555" /><rect x="159" y="390" width="1" height="92" fill="#4c4c4c" /><rect x="163" y="390" width="1" height="92" fill="#7a7a7a" /><rect x="163" y="483.5" width="1" height="2.5" fill="#555" /><rect x="168" y="390" width="1" height="92" fill="#4c4c4c" /><rect x="172" y="390" width="1" height="92" fill="#7a7a7a" /><rect x="172" y="483.5" width="1" height="2.5" fill="#555" /><rect x="177" y="390" width="1" height="92" fill="#4c4c4c" /><rect x="181" y="390" width="1" height="92" fill="#7a7a7a" /><rect x="181" y="483.5" width="1" height="2.5" fill="#555" /><rect x="186" y="390" width="1" height="92" fill="#4c4c4c" /><rect x="190" y="390" width="1" height="92" fill="#7a7a7a" /><rect x="190" y="483.5" width="1" height="2.5" fill="#555" /><rect x="195" y="390" width="1" height="92" fill="#4c4c4c" /><rect x="199" y="390" width="1" height="92" fill="#7a7a7a" /><rect x="199" y="483.5" width="1" height="2.5" fill="#555" /><rect x="204" y="390" width="1" height="92" fill="#4c4c4c" /><rect x="208" y="390" width="1" height="92" fill="#7a7a7a" /><rect x="208" y="483.5" width="1" height="2.5" fill="#555" /><rect x="213" y="390" width="1" height="92" fill="#4c4c4c" /><rect x="217" y="390" width="1" height="92" fill="#7a7a7a" /><rect x="217" y="483.5" width="1" height="2.5" fill="#555" /><rect x="222" y="390" width="1" height="92" fill="#4c4c4c" /><rect x="226" y="390" width="1" height="92" fill="#7a7a7a" /><rect x="226" y="483.5" width="1" height="2.5" fill="#555" /><rect x="231" y="390" width="1" height="92" fill="#4c4c4c" /><rect x="235" y="390" width="1" height="92" fill="#7a7a7a" /><rect x="235" y="483.5" width="1" height="2.5" fill="#555" /><rect x="240" y="390" width="1" height="92" fill="#4c4c4c" /><rect x="244" y="390" width="1" height="92" fill="#7a7a7a" /><rect x="244" y="483.5" width="1" height="2.5" fill="#555" /><rect x="249" y="390" width="1" height="92" fill="#4c4c4c" /><rect x="253" y="390" width="1" height="92" fill="#7a7a7a" /><rect x="253" y="483.5" width="1" height="2.5" fill="#555" /><rect x="258" y="390" width="1" height="92" fill="#4c4c4c" /><rect x="262" y="390" width="1" height="92" fill="#7a7a7a" /><rect x="262" y="483.5" width="1" height="2.5" fill="#555" /><rect x="267" y="390" width="1" height="92" fill="#4c4c4c" /><rect x="271" y="390" width="1" height="92" fill="#7a7a7a" /><rect x="271" y="483.5" width="1" height="2.5" fill="#555" /><rect x="276" y="390" width="1" height="92" fill="#4c4c4c" /><rect x="280" y="390" width="1" height="92" fill="#7a7a7a" /><rect x="280" y="483.5" width="1" height="2.5" fill="#555" /><rect x="285" y="390" width="1" height="92" fill="#4c4c4c" /><rect x="289" y="390" width="1" height="92" fill="#7a7a7a" /><rect x="289" y="483.5" width="1" height="2.5" fill="#555" /><rect x="294" y="390" width="1" height="92" fill="#4c4c4c" /><rect x="298" y="390" width="1" height="92" fill="#7a7a7a" /><rect x="298" y="483.5" width="1" height="2.5" fill="#555" /><rect x="303" y="390" width="1" height="92" fill="#4c4c4c" /><rect x="307" y="390" width="1" height="92" fill="#7a7a7a" /><rect x="307" y="483.5" width="1" height="2.5" fill="#555" /><rect x="312" y="390" width="1" height="92" fill="#4c4c4c" /><rect x="316" y="390" width="1" height="92" fill="#7a7a7a" /><rect x="316" y="483.5" width="1" height="2.5" fill="#555" /><rect x="321" y="390" width="1" height="92" fill="#4c4c4c" /><rect x="325" y="390" width="1" height="92" fill="#7a7a7a" /><rect x="325" y="483.5" width="1" height="2.5" fill="#555" /><rect x="330" y="390" width="1" height="92" fill="#4c4c4c" /><rect x="334" y="390" width="1" height="92" fill="#7a7a7a" /><rect x="334" y="483.5" width="1" height="2.5" fill="#555" /><rect x="339" y="390" width="1" height="92" fill="#4c4c4c" /><rect x="343" y="390" width="1" height="92" fill="#7a7a7a" /><rect x="343" y="483.5" width="1" height="2.5" fill="#555" /><rect x="348" y="390" width="1" height="92" fill="#4c4c4c" /><rect x="352" y="390" width="1" height="92" fill="#7a7a7a" /><rect x="352" y="483.5" width="1" height="2.5" fill="#555" /><rect x="357" y="390" width="1" height="92" fill="#4c4c4c" /><rect x="361" y="390" width="1" height="92" fill="#7a7a7a" /><rect x="361" y="483.5" width="1" height="2.5" fill="#555" /><rect x="366" y="390" width="1" height="92" fill="#4c4c4c" /><rect x="370" y="390" width="1" height="92" fill="#7a7a7a" /><rect x="370" y="483.5" width="1" height="2.5" fill="#555" /><rect x="375" y="390" width="1" height="92" fill="#4c4c4c" /><rect x="379" y="390" width="1" height="92" fill="#7a7a7a" /><rect x="379" y="483.5" width="1" height="2.5" fill="#555" /><rect x="384" y="390" width="1" height="92" fill="#4c4c4c" /><rect x="388" y="390" width="1" height="92" fill="#7a7a7a" /><rect x="388" y="483.5" width="1" height="2.5" fill="#555" /><rect x="393" y="390" width="1" height="92" fill="#4c4c4c" /><rect x="397" y="390" width="1" height="92" fill="#7a7a7a" /><rect x="397" y="483.5" width="1" height="2.5" fill="#555" /><rect x="402" y="390" width="1" height="92" fill="#4c4c4c" /><rect x="406" y="390" width="1" height="92" fill="#7a7a7a" /><rect x="406" y="483.5" width="1" height="2.5" fill="#555" /><rect x="411" y="390" width="1" height="92" fill="#4c4c4c" /><rect x="415" y="390" width="1" height="92" fill="#7a7a7a" /><rect x="415" y="483.5" width="1" height="2.5" fill="#555" /><rect x="420" y="390" width="1" height="92" fill="#4c4c4c" /><rect x="424" y="390" width="1" height="92" fill="#7a7a7a" /><rect x="424" y="483.5" width="1" height="2.5" fill="#555" /><rect x="136" y="390" width="289" height="1" fill="#7a7a7a" /><rect x="131.5" y="390" width="3" height="1" fill="#555" /><rect x="136" y="395" width="289" height="1" fill="#4c4c4c" /><rect x="136" y="399" width="289" height="1" fill="#7a7a7a" /><rect x="131.5" y="399" width="3" height="1" fill="#555" /><rect x="136" y="404" width="289" height="1" fill="#4c4c4c" /><rect x="136" y="408" width="289" height="1" fill="#7a7a7a" /><rect x="131.5" y="408" width="3" height="1" fill="#555" /><rect x="136" y="413" width="289" height="1" fill="#4c4c4c" /><rect x="136" y="417" width="289" height="1" fill="#7a7a7a" /><rect x="131.5" y="417" width="3" height="1" fill="#555" /><rect x="136" y="422" width="289" height="1" fill="#4c4c4c" /><rect x="136" y="427" width="289" height="1" fill="#7a7a7a" /><rect x="131.5" y="427" width="3" height="1" fill="#555" /><rect x="136" y="431" width="289" height="1" fill="#4c4c4c" /><rect x="136" y="436" width="289" height="1" fill="#7a7a7a" /><rect x="131.5" y="436" width="3" height="1" fill="#555" /><rect x="136" y="440" width="289" height="1" fill="#4c4c4c" /><rect x="136" y="445" width="289" height="1" fill="#7a7a7a" /><rect x="131.5" y="445" width="3" height="1" fill="#555" /><rect x="136" y="449" width="289" height="1" fill="#4c4c4c" /><rect x="136" y="454" width="289" height="1" fill="#7a7a7a" /><rect x="131.5" y="454" width="3" height="1" fill="#555" /><rect x="136" y="459" width="289" height="1" fill="#4c4c4c" /><rect x="136" y="463" width="289" height="1" fill="#7a7a7a" /><rect x="131.5" y="463" width="3" height="1" fill="#555" /><rect x="136" y="468" width="289" height="1" fill="#4c4c4c" /><rect x="136" y="472" width="289" height="1" fill="#7a7a7a" /><rect x="131.5" y="472" width="3" height="1" fill="#555" /><rect x="136" y="477" width="289" height="1" fill="#4c4c4c" /><text transform="translate(132.6,394.8) scale(0.88,1)" font-size="12" text-anchor="end" fill="#000" xml:space="preserve" >5000</text><text transform="translate(132.6,403.92) scale(0.88,1)" font-size="12" text-anchor="end" fill="#000" xml:space="preserve" >4500</text><text transform="translate(132.6,413.04) scale(0.88,1)" font-size="12" text-anchor="end" fill="#000" xml:space="preserve" >4000</text><text transform="translate(132.6,422.16) scale(0.88,1)" font-size="12" text-anchor="end" fill="#000" xml:space="preserve" >3500</text><text transform="translate(132.6,431.28) scale(0.88,1)" font-size="12" text-anchor="end" fill="#000" xml:space="preserve" >3000</text><text transform="translate(132.6,440.4) scale(0.88,1)" font-size="12" text-anchor="end" fill="#000" xml:space="preserve" >2500</text><text transform="translate(132.6,449.52) scale(0.88,1)" font-size="12" text-anchor="end" fill="#000" xml:space="preserve" >2000</text><text transform="translate(132.6,458.64) scale(0.88,1)" font-size="12" text-anchor="end" fill="#000" xml:space="preserve" >1500</text><text transform="translate(132.6,467.76) scale(0.88,1)" font-size="12" text-anchor="end" fill="#000" xml:space="preserve" >1000</text><text transform="translate(132.6,476.88) scale(0.88,1)" font-size="12" text-anchor="end" fill="#000" xml:space="preserve" >500</text><text transform="translate(136.8,493.3) scale(0.88,1)" font-size="12" text-anchor="middle" fill="#000" xml:space="preserve" >0</text><text transform="translate(172.8,493.3) scale(0.88,1)" font-size="12" text-anchor="middle" fill="#000" xml:space="preserve" >8</text><text transform="translate(208.8,493.3) scale(0.88,1)" font-size="12" text-anchor="middle" fill="#000" xml:space="preserve" >16</text><text transform="translate(244.8,493.3) scale(0.88,1)" font-size="12" text-anchor="middle" fill="#000" xml:space="preserve" >24</text><text transform="translate(280.8,493.3) scale(0.88,1)" font-size="12" text-anchor="middle" fill="#000" xml:space="preserve" >32</text><text transform="translate(316.8,493.3) scale(0.88,1)" font-size="12" text-anchor="middle" fill="#000" xml:space="preserve" >40</text><text transform="translate(352.8,493.3) scale(0.88,1)" font-size="12" text-anchor="middle" fill="#000" xml:space="preserve" >48</text><text transform="translate(388.8,493.3) scale(0.88,1)" font-size="12" text-anchor="middle" fill="#000" xml:space="preserve" >56</text><text transform="translate(423.3,493.3) scale(0.88,1)" font-size="12" text-anchor="middle" fill="#000" xml:space="preserve" >64MB</text><text transform="translate(137.3,386) scale(0.88,1)" font-size="12" fill="#000" xml:space="preserve" >MB/s</text><path d="M139.4,448.7 L140.7,435.4 L142.4,426.6 L145.2,415.5 L148.5,412.2 L150.7,408.3 L152.4,409.9 L154.6,404.4 L159.6,401.1 L161.8,403.3 L164.0,401.6 L165.7,403.8 L168.4,397.7 L170.6,397.2 L172.9,400.5 L174.5,398.3 L177.9,401.6 L181.2,395.5 L185.6,404.4 L187.8,399.4 L190.6,396.4 L195.0,400.5 L198.4,402.7 L200.0,408.3 L202.2,403.3 L205.6,409.4 L208.3,405.5 L210.6,407.7 L211.1,421.0 L212.2,446.5 L212.4,458.7 L214.4,453.7 L217.2,455.4 L220.5,458.7 L223.9,462.6 L228.3,462.0 L232.7,460.4 L239.5,460.0 L248.2,457.8 L265.6,459.3 L277.2,456.4 L288.8,455.5 L306.3,454.7 L317.9,453.2 L332.4,450.2 L335.3,448.1 L341.1,451.5 L352.7,450.1 L364.3,447.9 L378.8,445.6 L393.4,443.9 L396.3,445.3 L399.2,443.0 L410.8,442.8 L421.0,440.4" fill="none" stroke="#18b4f0" stroke-width="1.2"/><rect x="471.5" y="151.5" width="71" height="20" fill="#e1e1e1" stroke="#0078d7" stroke-width="2" /><text transform="translate(507,165.5) scale(0.88,1)" font-size="12" text-anchor="middle" fill="#000" xml:space="preserve" >Start</text><rect x="461" y="182" width="100" height="1" fill="#a0a0a0" /><circle cx="473" cy="194.5" r="5.8" fill="#fff" stroke="#333" stroke-width="1"/><circle cx="473" cy="194.5" r="3.2" fill="#333"/><text transform="translate(483,198.5) scale(0.88,1)" font-size="12" fill="#000" xml:space="preserve" >Read</text><circle cx="473" cy="210.5" r="5.8" fill="#fff" stroke="#333" stroke-width="1"/><text transform="translate(483,215) scale(0.88,1)" font-size="12" fill="#000" xml:space="preserve" >Write</text><rect x="461" y="221" width="100" height="1" fill="#a0a0a0" /><rect x="467.5" y="230.0" width="12" height="12" fill="#fff" stroke="#333" stroke-width="1" /><text transform="translate(483,240) scale(0.87,1)" font-size="12" fill="#000" xml:space="preserve" >Short stroke</text><rect x="467.5" y="250.0" width="62" height="19.5" fill="#fff" stroke="#b8b8b8" stroke-width="1" /><rect x="511.5" y="251.0" width="17" height="17.5" fill="#f0f0f0" /><rect x="511.5" y="251.0" width="0.8" height="17.5" fill="#d0d0d0" /><path d="M517,257.0 L520,254.0 L523,257.0 Z M517,262.0 L520,265.0 L523,262.0 Z" fill="#606060"/><text transform="translate(471,263.5) scale(0.87,1)" font-size="12" fill="#8a8a8a" xml:space="preserve" >40</text><text transform="translate(539,263.5) scale(0.88,1)" font-size="12" fill="#000" xml:space="preserve" >gB</text><rect x="464" y="278" width="98" height="1" fill="#a0a0a0" /><rect x="467.5" y="290.0" width="12" height="12" fill="#fff" stroke="#333" stroke-width="1" /><path d="M469.5,296.0 L472,299.0 L477.5,292.5" fill="none" stroke="#333" stroke-width="1.2"/><text transform="translate(483,299.3) scale(0.87,1)" font-size="12" fill="#000" xml:space="preserve" >4 KB align</text><rect x="463" y="315" width="98" height="1" fill="#a0a0a0" /><text transform="translate(463.8,334.5) scale(0.88,1)" font-size="12" fill="#000" xml:space="preserve" >Progress:</text><text x="556" y="334.8" font-size="12" font-weight="bold" text-anchor="end" fill="#000" xml:space="preserve" >100%</text><rect x="464.5" y="345.5" width="91" height="13.5" fill="#10b020" stroke="#a8a8a8" stroke-width="1" /></g><rect x="586" y="519" width="580" height="1" fill="#123c64" /><rect x="586" y="519" width="1" height="515" fill="#123c64" /><rect x="586" y="1033" width="580" height="1" fill="#123c64" /><rect x="572" y="3" width="12" height="513" fill="url(#shr)" /><rect x="572" y="520" width="12" height="513" fill="url(#shr)" />
</svg></body></html>
